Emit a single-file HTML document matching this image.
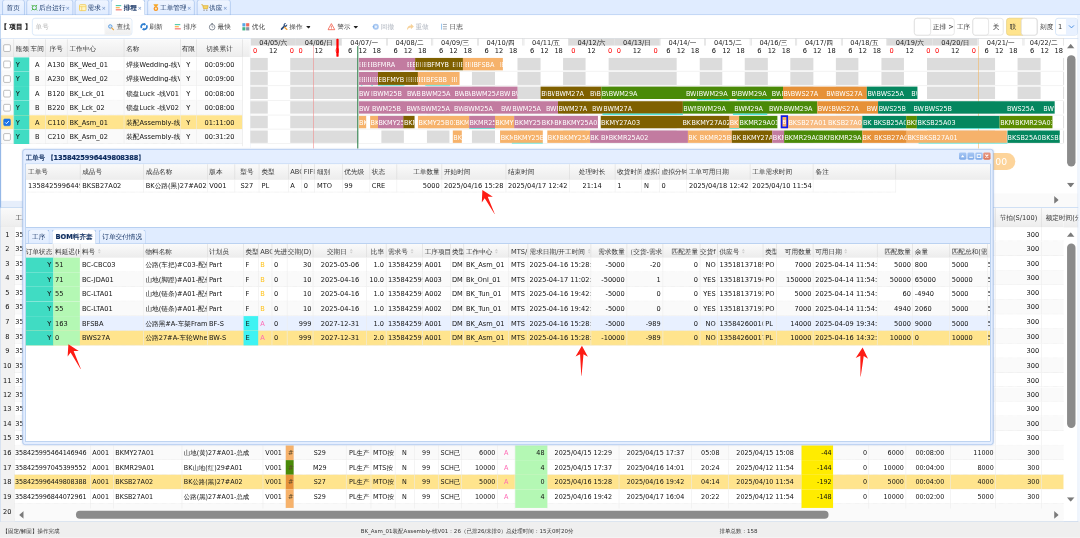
<!DOCTYPE html>
<html lang="zh"><head><meta charset="utf-8"><title>排程</title><style>
html,body{margin:0;padding:0;background:#fff;overflow:hidden;width:1080px;height:538px}
#root{position:absolute;left:0;top:0;width:1920px;height:957px;transform:scale(.5625);transform-origin:0 0;filter:brightness(1);font:11.8px "DejaVu Sans","Liberation Sans","WenQuanYi Zen Hei","Noto Sans CJK SC",sans-serif;color:#111;overflow:hidden;background:#fff}
#root div{position:absolute;box-sizing:border-box;white-space:nowrap;overflow:hidden}
#root .bl{overflow:hidden;text-overflow:clip;font-size:11.5px}
#root .b{font-weight:bold;-webkit-text-stroke:0.350px currentColor}
#root .bc{-webkit-text-stroke:0.550px currentColor}
</style></head><body><div id="root">
<div style="left:0px;top:0px;width:1920px;height:26.5px;background:#e0ecff;border-bottom:1px solid #95b8e7"></div>
<div style="left:3.6px;top:-1.1px;width:40px;height:27.6px;background:linear-gradient(#eff5ff,#e0ecff);border:1px solid #95b8e7;border-radius:5px 5px 0 0;"></div>
<div style="left:11.6px;top:0.4px;width:32px;height:24.9px;line-height:26.8px;color:#0e2d5f;">首页</div>
<div style="left:47.1px;top:-1.1px;width:82.7px;height:27.6px;background:linear-gradient(#eff5ff,#e0ecff);border:1px solid #95b8e7;border-radius:5px 5px 0 0;"></div>
<svg style="position:absolute;left:54.2px;top:5.7px;width:14.2px;height:15.3px" viewBox="0 0 16 16"><circle cx="8" cy="8" r="4.2" fill="none" stroke="#4db34d" stroke-width="2"/><g stroke="#4db34d" stroke-width="2"><path d="M2.5 2.5l2.5 2.5M13.5 2.5l-2.5 2.5M2.5 13.5l2.5-2.5M13.5 13.5l-2.5-2.5"/></g></svg>
<div style="left:69.3px;top:0.4px;width:60.4px;height:24.9px;line-height:26.8px;color:#0e2d5f;">后台运行</div>
<div style="left:116.4px;top:0.7px;width:13.3px;height:24px;line-height:26px;color:#6f8fc4;font-size:9.500px;">×</div>
<div style="left:133.3px;top:-1.1px;width:60.4px;height:27.6px;background:linear-gradient(#eff5ff,#e0ecff);border:1px solid #95b8e7;border-radius:5px 5px 0 0;"></div>
<svg style="position:absolute;left:140.4px;top:5.7px;width:14.2px;height:15.3px" viewBox="0 0 16 16"><rect x="1.5" y="2" width="13" height="12" rx="1.5" fill="#fff6c8" stroke="#f2c94c" stroke-width="1.6"/><path d="M2 6h12M6 6v8" stroke="#f2c94c" stroke-width="1.3"/></svg>
<div style="left:155.6px;top:0.4px;width:38.2px;height:24.9px;line-height:26.8px;color:#0e2d5f;">需求</div>
<div style="left:180.4px;top:0.7px;width:13.3px;height:24px;line-height:26px;color:#6f8fc4;font-size:9.500px;">×</div>
<div style="left:197.3px;top:-1.1px;width:60.4px;height:28.3px;background:#fff;border:1px solid #95b8e7;border-bottom:1px solid #fff;border-radius:5px 5px 0 0;"></div>
<svg style="position:absolute;left:204.4px;top:5.7px;width:14.2px;height:15.3px" viewBox="0 0 16 16"><rect x="2" y="3" width="11" height="1.900" fill="#2fbf9b"/><rect x="2" y="7.200" width="8" height="1.900" fill="#ff9f1a"/><rect x="2" y="11.400" width="12" height="1.900" fill="#f0554d"/></svg>
<div class="b" style="left:219.6px;top:0.4px;width:38.2px;height:24.9px;line-height:26.8px;color:#0e2d5f;">排程</div>
<div style="left:244.4px;top:0.7px;width:13.3px;height:24px;line-height:26px;color:#6f8fc4;font-size:9.500px;">×</div>
<div style="left:262.4px;top:-1.1px;width:83.2px;height:27.6px;background:linear-gradient(#eff5ff,#e0ecff);border:1px solid #95b8e7;border-radius:5px 5px 0 0;"></div>
<svg style="position:absolute;left:269.5px;top:5.7px;width:14.2px;height:15.3px" viewBox="0 0 16 16"><path d="M3 1h10l-3 5H6z" fill="#f5a623"/><circle cx="8" cy="10" r="4.6" fill="#f7931e"/><circle cx="8" cy="10" r="2.2" fill="#ffe9b8"/></svg>
<div style="left:284.6px;top:0.4px;width:61px;height:24.9px;line-height:26.8px;color:#0e2d5f;">工单管理</div>
<div style="left:332.3px;top:0.7px;width:13.3px;height:24px;line-height:26px;color:#6f8fc4;font-size:9.500px;">×</div>
<div style="left:349.5px;top:-1.1px;width:60.4px;height:27.6px;background:linear-gradient(#eff5ff,#e0ecff);border:1px solid #95b8e7;border-radius:5px 5px 0 0;"></div>
<svg style="position:absolute;left:356.6px;top:5.7px;width:14.2px;height:15.3px" viewBox="0 0 16 16"><path d="M1 2h2.5l2 8h8l1.5-6H4.5" fill="#f7d66a" stroke="#d9a520" stroke-width="1.3"/><circle cx="6.5" cy="13" r="1.4" fill="#8a8a8a"/><circle cx="12" cy="13" r="1.4" fill="#8a8a8a"/></svg>
<div style="left:371.7px;top:0.4px;width:38.2px;height:24.9px;line-height:26.8px;color:#0e2d5f;">供应</div>
<div style="left:396.6px;top:0.7px;width:13.3px;height:24px;line-height:26px;color:#6f8fc4;font-size:9.500px;">×</div>
<div style="left:0px;top:27.4px;width:1920px;height:41.2px;background:#fff;border-bottom:1px solid #c5d6ef;border-left:1px solid #95b8e7"></div>
<div class="bc" style="left:1.1px;top:32px;width:55.8px;height:31.1px;line-height:33.1px;color:#222;">【 项目 】</div>
<div style="left:57.4px;top:32px;width:177.8px;height:31.1px;background:#fff;border:1px solid #c3d9f5;border-radius:5px;"></div>
<div style="left:63.1px;top:32px;width:79.1px;height:31.1px;line-height:33.1px;color:#b5b5b5;">单号</div>
<div style="left:186.3px;top:32.7px;width:48.2px;height:29.7px;background:linear-gradient(#fff,#eee);border-left:1px solid #d3d3d3;border-radius:0 4px 4px 0;"></div>
<svg style="position:absolute;left:191.3px;top:42px;width:12.4px;height:12.4px" viewBox="0 0 16 16"><circle cx="6.5" cy="6.5" r="4" fill="#cfe6fb" stroke="#4a90d9" stroke-width="1.8"/><path d="M9.8 9.8l4.4 4.4" stroke="#e8a33d" stroke-width="2.6" stroke-linecap="round"/></svg>
<div style="left:207.1px;top:32px;width:25.8px;height:31.1px;line-height:33.1px;color:#555;">查找</div>
<svg style="position:absolute;left:248.5px;top:40.2px;width:14.2px;height:14.9px" viewBox="0 0 16 16"><path d="M8.500 3A5 5 0 0 0 3.200 10.800" fill="none" stroke="#2f7fd0" stroke-width="3.400"/><path d="M7.500 13A5 5 0 0 0 12.800 5.200" fill="none" stroke="#2f7fd0" stroke-width="3.400"/><path d="M7.800 0l4.600 3-4.600 3zM8.200 16l-4.600-3 4.600-3z" fill="#2f7fd0"/></svg>
<div style="left:265.4px;top:32px;width:35.6px;height:31.1px;line-height:33.1px;color:#444;">刷新</div>
<svg style="position:absolute;left:308.6px;top:40.2px;width:14.2px;height:14.9px" viewBox="0 0 16 16"><rect x="2" y="3" width="11" height="1.900" fill="#2fbf9b"/><rect x="2" y="7.200" width="8" height="1.900" fill="#ff9f1a"/><rect x="2" y="11.400" width="12" height="1.900" fill="#f0554d"/></svg>
<div style="left:326.2px;top:32px;width:35.6px;height:31.1px;line-height:33.1px;color:#444;">排序</div>
<svg style="position:absolute;left:370.1px;top:40.2px;width:14.2px;height:14.9px" viewBox="0 0 16 16"><circle cx="8" cy="9" r="5.6" fill="#fff" stroke="#7d8590" stroke-width="1.8"/><path d="M8 5.6V9h2.4" fill="none" stroke="#7d8590" stroke-width="1.4"/><rect x="6.3" y="0.8" width="3.4" height="2" fill="#7d8590"/></svg>
<div style="left:386.7px;top:32px;width:35.6px;height:31.1px;line-height:33.1px;color:#444;">最快</div>
<svg style="position:absolute;left:430.2px;top:40.2px;width:14.2px;height:14.9px" viewBox="0 0 16 16"><rect x="1" y="1" width="6" height="6.5" fill="#5aa7e6"/><rect x="8.5" y="1" width="6.5" height="6.5" fill="#ef6a5a"/><rect x="1" y="9" width="6" height="6.5" fill="#43b58a"/><rect x="8.5" y="9" width="6.5" height="6.5" fill="#8894a6"/></svg>
<div style="left:447.6px;top:32px;width:35.6px;height:31.1px;line-height:33.1px;color:#444;">优化</div>
<svg style="position:absolute;left:497.8px;top:40.2px;width:14.2px;height:14.9px" viewBox="0 0 16 16"><path d="M14 3.2l-2.6 2.6-1.8-.4-.4-1.8L11.800 1A4 4 0 0 0 7 6.200L1.600 11.600a1.700 1.700 0 0 0 2.400 2.400L9.400 8.600A4 4 0 0 0 14 3.200z" fill="#2b4d7e"/><path d="M9 9l4.500 4.500" stroke="#f2a13a" stroke-width="2.600" stroke-linecap="round"/></svg>
<div style="left:514.3px;top:32px;width:35.6px;height:31.1px;line-height:33.1px;color:#444;">操作</div>
<svg style="position:absolute;left:582.4px;top:40.2px;width:14.2px;height:14.9px" viewBox="0 0 16 16"><path d="M8 1.800L14.800 14H1.200z" fill="#fff" stroke="#f0503c" stroke-width="1.500" stroke-linejoin="round"/><path d="M8 6v4.300" stroke="#f0503c" stroke-width="1.500"/><circle cx="8" cy="12" r=".9" fill="#f0503c"/></svg>
<div style="left:599.5px;top:32px;width:35.6px;height:31.1px;line-height:33.1px;color:#444;">警示</div>
<svg style="position:absolute;left:661.3px;top:40.2px;width:14.2px;height:14.9px" viewBox="0 0 16 16"><circle cx="8" cy="8" r="6" fill="#a9c8f2"/><circle cx="8" cy="8" r="2.600" fill="#e8f1fc"/><path d="M1 8l3.500-2.500v5z" fill="#7fb0ea"/></svg>
<div style="left:677px;top:32px;width:35.6px;height:31.1px;line-height:33.1px;color:#b0b6c0;">回撤</div>
<svg style="position:absolute;left:721.8px;top:40.2px;width:14.2px;height:14.9px" viewBox="0 0 16 16"><path d="M1.500 15.500c0-6 3-10 8-10V2l6 5.500-6 5.500V9.500c-3.500 0-6 2-8 6z" fill="#f7d29a"/></svg>
<div style="left:738.5px;top:32px;width:35.6px;height:31.1px;line-height:33.1px;color:#b0b6c0;">重做</div>
<svg style="position:absolute;left:783.1px;top:40.2px;width:14.2px;height:14.9px" viewBox="0 0 16 16"><path d="M5 3.500h8M5 8h8M5 12.500h8" stroke="#7d8795" stroke-width="1.400"/><path d="M2.200 2v12" stroke="#7db7ee" stroke-width="1.600"/></svg>
<div style="left:799.3px;top:32px;width:35.6px;height:31.1px;line-height:33.1px;color:#444;">日志</div>
<div style="left:543.6px;top:45.5px;width:8.9px;height:5.3px;"><svg viewBox="0 0 10 6" style="position:absolute;left:0;top:0;width:100%;height:100%"><path d="M0 0h10L5 6z" fill="#222"/></svg></div>
<div style="left:628.3px;top:45.5px;width:8.9px;height:5.3px;"><svg viewBox="0 0 10 6" style="position:absolute;left:0;top:0;width:100%;height:100%"><path d="M0 0h10L5 6z" fill="#222"/></svg></div>
<div style="left:1624.5px;top:32px;width:72.4px;height:31.1px;background:#fff;border:1px solid #d6d6d6;border-radius:5px;"></div><div style="left:1624.5px;top:32px;width:30.9px;height:31.1px;background:#fff;border:1px solid #d0d0d0;border-radius:5px;"></div><div style="left:1658.3px;top:32px;width:42.7px;height:31.1px;line-height:33.1px;color:#333;">正排 &gt;</div>
<div style="left:1701.3px;top:32px;width:26.7px;height:31.1px;line-height:33.1px;color:#333;">工序</div>
<div style="left:1728.9px;top:32px;width:55.3px;height:31.1px;background:#fff;border:1px solid #d6d6d6;border-radius:5px;"></div><div style="left:1728.9px;top:32px;width:29px;height:31.1px;background:#fff;border:1px solid #d0d0d0;border-radius:5px;"></div><div style="left:1765px;top:32px;width:42.7px;height:31.1px;line-height:33.1px;color:#333;">关</div>
<div style="left:1789px;top:32px;width:55.5px;height:31.1px;background:#fff;border:1px solid #d6d6d6;border-radius:5px;"></div><div style="left:1789px;top:32px;width:29.7px;height:31.1px;background:#ffe48d;border:1px solid #e9cf74;border-radius:5px 0 0 5px;"></div><div style="left:1815.1px;top:32px;width:29.3px;height:31.1px;background:#fff;border:1px solid #d0d0d0;border-radius:5px;"></div><div style="left:1795.2px;top:32px;width:42.7px;height:31.1px;line-height:33.1px;color:#333;">联</div>
<div style="left:1848.9px;top:32px;width:26.7px;height:31.1px;line-height:33.1px;color:#333;">刻度</div>
<div style="left:1876.1px;top:32px;width:39.6px;height:31.1px;background:#fff;border:1px solid #b9d2f3;border-radius:5px;"></div>
<div style="left:1880.9px;top:32px;width:14.2px;height:31.1px;line-height:33.1px;color:#333;">1</div>
<div style="left:1895.1px;top:32.9px;width:19.7px;height:29.3px;background:#e8f1ff;border-radius:0 4px 4px 0;"><svg viewBox="0 0 20 30" style="position:absolute;left:0;top:0;width:100%;height:100%"><path d="M5.500 12.500l4.500 4.500 4.500-4.500" fill="none" stroke="#4a8fe0" stroke-width="1.800"/></svg></div>
<div style="left:0px;top:69.7px;width:445.3px;height:189.9px;background:#fff;border-left:1px solid #95b8e7"></div>
<div style="left:1.1px;top:69.7px;width:442.7px;height:31.1px;background:linear-gradient(#fafafa,#ededed);border-bottom:1px solid #ddd;"></div>
<div style="left:23.6px;top:69.7px;width:1.1px;height:31.1px;background:#d9d9d9;"></div>
<div style="left:24.2px;top:69.7px;width:27.7px;height:31.1px;line-height:33.1px;padding-left:4px;color:#333;">瓶颈</div>
<div style="left:51.4px;top:69.7px;width:1.1px;height:31.1px;background:#d9d9d9;"></div>
<div style="left:51.9px;top:69.7px;width:28.4px;height:31.1px;line-height:33.1px;text-align:center;color:#333;">车间</div>
<div style="left:79.8px;top:69.7px;width:1.1px;height:31.1px;background:#d9d9d9;"></div>
<div style="left:80.4px;top:69.7px;width:39.1px;height:31.1px;line-height:33.1px;text-align:center;color:#333;">序号</div>
<div style="left:118.9px;top:69.7px;width:1.1px;height:31.1px;background:#d9d9d9;"></div>
<div style="left:119.5px;top:69.7px;width:101px;height:31.1px;line-height:33.1px;padding-left:4px;color:#333;">工作中心</div>
<div style="left:219.9px;top:69.7px;width:1.1px;height:31.1px;background:#d9d9d9;"></div>
<div style="left:220.4px;top:69.7px;width:99.9px;height:31.1px;line-height:33.1px;padding-left:4px;color:#333;">名称</div>
<div style="left:319.8px;top:69.7px;width:1.1px;height:31.1px;background:#d9d9d9;"></div>
<div style="left:320.4px;top:69.7px;width:28.8px;height:31.1px;line-height:33.1px;text-align:center;color:#333;">有限</div>
<div style="left:348.6px;top:69.7px;width:1.1px;height:31.1px;background:#d9d9d9;"></div>
<div style="left:349.2px;top:69.7px;width:82.1px;height:31.1px;line-height:33.1px;text-align:center;color:#333;">切换累计</div>
<div style="left:430.8px;top:69.7px;width:1.1px;height:31.1px;background:#d9d9d9;"></div>
<div style="left:5.7px;top:78.9px;width:13px;height:13px;background:#fff;border:1px solid #8f8f8f;border-radius:2.500px;"></div>
<div style="left:1.1px;top:101.5px;width:430.2px;height:25.8px;background:#fff;border-bottom:1px dotted #ddd;"></div>
<div style="left:24.2px;top:101.5px;width:27.7px;height:25.8px;background:#40dcc3;"></div>
<div style="left:5.7px;top:107.9px;width:13px;height:13px;background:#fff;border:1px solid #8f8f8f;border-radius:2.500px;"></div>
<div style="left:24.2px;top:101.5px;width:27.7px;height:25.8px;line-height:27.7px;padding-left:4px;color:#111;">Y</div>
<div style="left:51.9px;top:101.5px;width:28.4px;height:25.8px;line-height:27.7px;text-align:center;color:#111;">A</div>
<div style="left:80.4px;top:101.5px;width:39.1px;height:25.8px;line-height:27.7px;text-align:center;color:#111;">A130</div>
<div style="left:119.5px;top:101.5px;width:101px;height:25.8px;line-height:27.7px;padding-left:4px;color:#111;">BK_Wed_01</div>
<div style="left:220.4px;top:101.5px;width:99.9px;height:25.8px;line-height:27.7px;padding-left:4px;color:#111;">焊接Wedding-线V01</div>
<div style="left:320.4px;top:101.5px;width:28.8px;height:25.8px;line-height:27.7px;text-align:center;color:#111;">Y</div>
<div style="left:349.2px;top:101.5px;width:82.1px;height:25.8px;line-height:27.7px;text-align:center;color:#111;">00:09:00</div>
<div style="left:23.6px;top:101.5px;width:1.1px;height:25.8px;background:#ececec;"></div>
<div style="left:79.8px;top:101.5px;width:1.1px;height:25.8px;background:#ececec;"></div>
<div style="left:118.9px;top:101.5px;width:1.1px;height:25.8px;background:#ececec;"></div>
<div style="left:219.9px;top:101.5px;width:1.1px;height:25.8px;background:#ececec;"></div>
<div style="left:319.8px;top:101.5px;width:1.1px;height:25.8px;background:#ececec;"></div>
<div style="left:348.6px;top:101.5px;width:1.1px;height:25.8px;background:#ececec;"></div>
<div style="left:1.1px;top:127.3px;width:430.2px;height:25.8px;background:#fafafa;border-bottom:1px dotted #ddd;"></div>
<div style="left:24.2px;top:127.3px;width:27.7px;height:25.8px;background:#40dcc3;"></div>
<div style="left:5.7px;top:133.7px;width:13px;height:13px;background:#fff;border:1px solid #8f8f8f;border-radius:2.500px;"></div>
<div style="left:24.2px;top:127.3px;width:27.7px;height:25.8px;line-height:27.7px;padding-left:4px;color:#111;">Y</div>
<div style="left:51.9px;top:127.3px;width:28.4px;height:25.8px;line-height:27.7px;text-align:center;color:#111;">B</div>
<div style="left:80.4px;top:127.3px;width:39.1px;height:25.8px;line-height:27.7px;text-align:center;color:#111;">A230</div>
<div style="left:119.5px;top:127.3px;width:101px;height:25.8px;line-height:27.7px;padding-left:4px;color:#111;">BK_Wed_02</div>
<div style="left:220.4px;top:127.3px;width:99.9px;height:25.8px;line-height:27.7px;padding-left:4px;color:#111;">焊接Wedding-线V02</div>
<div style="left:320.4px;top:127.3px;width:28.8px;height:25.8px;line-height:27.7px;text-align:center;color:#111;">Y</div>
<div style="left:349.2px;top:127.3px;width:82.1px;height:25.8px;line-height:27.7px;text-align:center;color:#111;">00:09:00</div>
<div style="left:23.6px;top:127.3px;width:1.1px;height:25.8px;background:#ececec;"></div>
<div style="left:79.8px;top:127.3px;width:1.1px;height:25.8px;background:#ececec;"></div>
<div style="left:118.9px;top:127.3px;width:1.1px;height:25.8px;background:#ececec;"></div>
<div style="left:219.9px;top:127.3px;width:1.1px;height:25.8px;background:#ececec;"></div>
<div style="left:319.8px;top:127.3px;width:1.1px;height:25.8px;background:#ececec;"></div>
<div style="left:348.6px;top:127.3px;width:1.1px;height:25.8px;background:#ececec;"></div>
<div style="left:1.1px;top:153.1px;width:430.2px;height:25.8px;background:#fff;border-bottom:1px dotted #ddd;"></div>
<div style="left:24.2px;top:153.1px;width:27.7px;height:25.8px;background:#40dcc3;"></div>
<div style="left:5.7px;top:159.5px;width:13px;height:13px;background:#fff;border:1px solid #8f8f8f;border-radius:2.500px;"></div>
<div style="left:24.2px;top:153.1px;width:27.7px;height:25.8px;line-height:27.7px;padding-left:4px;color:#111;">Y</div>
<div style="left:51.9px;top:153.1px;width:28.4px;height:25.8px;line-height:27.7px;text-align:center;color:#111;">A</div>
<div style="left:80.4px;top:153.1px;width:39.1px;height:25.8px;line-height:27.7px;text-align:center;color:#111;">B120</div>
<div style="left:119.5px;top:153.1px;width:101px;height:25.8px;line-height:27.7px;padding-left:4px;color:#111;">BK_Lck_01</div>
<div style="left:220.4px;top:153.1px;width:99.9px;height:25.8px;line-height:27.7px;padding-left:4px;color:#111;">锁盘Luck -线V01</div>
<div style="left:320.4px;top:153.1px;width:28.8px;height:25.8px;line-height:27.7px;text-align:center;color:#111;">Y</div>
<div style="left:349.2px;top:153.1px;width:82.1px;height:25.8px;line-height:27.7px;text-align:center;color:#111;">00:08:00</div>
<div style="left:23.6px;top:153.1px;width:1.1px;height:25.8px;background:#ececec;"></div>
<div style="left:79.8px;top:153.1px;width:1.1px;height:25.8px;background:#ececec;"></div>
<div style="left:118.9px;top:153.1px;width:1.1px;height:25.8px;background:#ececec;"></div>
<div style="left:219.9px;top:153.1px;width:1.1px;height:25.8px;background:#ececec;"></div>
<div style="left:319.8px;top:153.1px;width:1.1px;height:25.8px;background:#ececec;"></div>
<div style="left:348.6px;top:153.1px;width:1.1px;height:25.8px;background:#ececec;"></div>
<div style="left:1.1px;top:178.8px;width:430.2px;height:25.8px;background:#fafafa;border-bottom:1px dotted #ddd;"></div>
<div style="left:24.2px;top:178.8px;width:27.7px;height:25.8px;background:#40dcc3;"></div>
<div style="left:5.7px;top:185.2px;width:13px;height:13px;background:#fff;border:1px solid #8f8f8f;border-radius:2.500px;"></div>
<div style="left:24.2px;top:178.8px;width:27.7px;height:25.8px;line-height:27.7px;padding-left:4px;color:#111;">Y</div>
<div style="left:51.9px;top:178.8px;width:28.4px;height:25.8px;line-height:27.7px;text-align:center;color:#111;">B</div>
<div style="left:80.4px;top:178.8px;width:39.1px;height:25.8px;line-height:27.7px;text-align:center;color:#111;">B220</div>
<div style="left:119.5px;top:178.8px;width:101px;height:25.8px;line-height:27.7px;padding-left:4px;color:#111;">BK_Lck_02</div>
<div style="left:220.4px;top:178.8px;width:99.9px;height:25.8px;line-height:27.7px;padding-left:4px;color:#111;">锁盘Luck -线V02</div>
<div style="left:320.4px;top:178.8px;width:28.8px;height:25.8px;line-height:27.7px;text-align:center;color:#111;">Y</div>
<div style="left:349.2px;top:178.8px;width:82.1px;height:25.8px;line-height:27.7px;text-align:center;color:#111;">00:08:00</div>
<div style="left:23.6px;top:178.8px;width:1.1px;height:25.8px;background:#ececec;"></div>
<div style="left:79.8px;top:178.8px;width:1.1px;height:25.8px;background:#ececec;"></div>
<div style="left:118.9px;top:178.8px;width:1.1px;height:25.8px;background:#ececec;"></div>
<div style="left:219.9px;top:178.8px;width:1.1px;height:25.8px;background:#ececec;"></div>
<div style="left:319.8px;top:178.8px;width:1.1px;height:25.8px;background:#ececec;"></div>
<div style="left:348.6px;top:178.8px;width:1.1px;height:25.8px;background:#ececec;"></div>
<div style="left:1.1px;top:204.6px;width:430.2px;height:25.8px;background:#ffe48d;border-bottom:1px dotted #ddd;"></div>
<div style="left:24.2px;top:204.6px;width:27.7px;height:25.8px;background:#40dcc3;"></div>
<div style="left:5.7px;top:211px;width:13px;height:13px;background:#1a73e8;border:1px solid #1a73e8;border-radius:2.500px;"><svg viewBox="0 0 12 12" style="position:absolute;left:0;top:0;width:100%;height:100%"><path d="M2.500 6.200l2.400 2.400 4.600-5" fill="none" stroke="#fff" stroke-width="1.800"/></svg></div>
<div style="left:24.2px;top:204.6px;width:27.7px;height:25.8px;line-height:27.7px;padding-left:4px;color:#111;">Y</div>
<div style="left:51.9px;top:204.6px;width:28.4px;height:25.8px;line-height:27.7px;text-align:center;color:#111;">A</div>
<div style="left:80.4px;top:204.6px;width:39.1px;height:25.8px;line-height:27.7px;text-align:center;color:#111;">C110</div>
<div style="left:119.5px;top:204.6px;width:101px;height:25.8px;line-height:27.7px;padding-left:4px;color:#111;">BK_Asm_01</div>
<div style="left:220.4px;top:204.6px;width:99.9px;height:25.8px;line-height:27.7px;padding-left:4px;color:#111;">装配Assembly-线V01</div>
<div style="left:320.4px;top:204.6px;width:28.8px;height:25.8px;line-height:27.7px;text-align:center;color:#111;">Y</div>
<div style="left:349.2px;top:204.6px;width:82.1px;height:25.8px;line-height:27.7px;text-align:center;color:#111;">01:11:00</div>
<div style="left:23.6px;top:204.6px;width:1.1px;height:25.8px;background:#ececec;"></div>
<div style="left:79.8px;top:204.6px;width:1.1px;height:25.8px;background:#ececec;"></div>
<div style="left:118.9px;top:204.6px;width:1.1px;height:25.8px;background:#ececec;"></div>
<div style="left:219.9px;top:204.6px;width:1.1px;height:25.8px;background:#ececec;"></div>
<div style="left:319.8px;top:204.6px;width:1.1px;height:25.8px;background:#ececec;"></div>
<div style="left:348.6px;top:204.6px;width:1.1px;height:25.8px;background:#ececec;"></div>
<div style="left:1.1px;top:230.4px;width:430.2px;height:25.8px;background:#fafafa;border-bottom:1px dotted #ddd;"></div>
<div style="left:24.2px;top:230.4px;width:27.7px;height:25.8px;background:#40dcc3;"></div>
<div style="left:5.7px;top:236.8px;width:13px;height:13px;background:#fff;border:1px solid #8f8f8f;border-radius:2.500px;"></div>
<div style="left:24.2px;top:230.4px;width:27.7px;height:25.8px;line-height:27.7px;padding-left:4px;color:#111;">Y</div>
<div style="left:51.9px;top:230.4px;width:28.4px;height:25.8px;line-height:27.7px;text-align:center;color:#111;">B</div>
<div style="left:80.4px;top:230.4px;width:39.1px;height:25.8px;line-height:27.7px;text-align:center;color:#111;">C210</div>
<div style="left:119.5px;top:230.4px;width:101px;height:25.8px;line-height:27.7px;padding-left:4px;color:#111;">BK_Asm_02</div>
<div style="left:220.4px;top:230.4px;width:99.9px;height:25.8px;line-height:27.7px;padding-left:4px;color:#111;">装配Assembly-线V02</div>
<div style="left:320.4px;top:230.4px;width:28.8px;height:25.8px;line-height:27.7px;text-align:center;color:#111;">Y</div>
<div style="left:349.2px;top:230.4px;width:82.1px;height:25.8px;line-height:27.7px;text-align:center;color:#111;">00:31:20</div>
<div style="left:23.6px;top:230.4px;width:1.1px;height:25.8px;background:#ececec;"></div>
<div style="left:79.8px;top:230.4px;width:1.1px;height:25.8px;background:#ececec;"></div>
<div style="left:118.9px;top:230.4px;width:1.1px;height:25.8px;background:#ececec;"></div>
<div style="left:219.9px;top:230.4px;width:1.1px;height:25.8px;background:#ececec;"></div>
<div style="left:319.8px;top:230.4px;width:1.1px;height:25.8px;background:#ececec;"></div>
<div style="left:348.6px;top:230.4px;width:1.1px;height:25.8px;background:#ececec;"></div>
<div style="left:431.3px;top:100.8px;width:13.7px;height:158.8px;background:#fff;border-left:1px solid #e3e3e3;"></div>
<div style="left:444.6px;top:69.7px;width:1.1px;height:193.4px;background:#c9d8ee;"></div>
<div style="left:445.3px;top:69.7px;width:1474.7px;height:298.3px;background:#fff;"></div>
<div style="left:445.6px;top:68.4px;width:80.3px;height:13px;background:#dcdcdc;"></div>
<div style="left:445.3px;top:66.8px;width:80.8px;height:17.8px;line-height:19.7px;text-align:center;color:#222;">04/05/六</div>
<div style="left:439.3px;top:81.4px;width:28.4px;height:19.2px;line-height:21.2px;text-align:center;color:#f00;">0</div>
<div style="left:471.6px;top:81.4px;width:28.4px;height:19.2px;line-height:21.2px;text-align:center;color:#111;">12</div>
<div style="left:504.7px;top:81.4px;width:28.4px;height:19.2px;line-height:21.2px;text-align:center;color:#f00;">0</div>
<div style="left:526.4px;top:68.4px;width:80.3px;height:13px;background:#dcdcdc;"></div>
<div style="left:526.2px;top:66.8px;width:80.8px;height:17.8px;line-height:19.7px;text-align:center;color:#222;">04/06/日</div>
<div style="left:520.1px;top:81.4px;width:28.4px;height:19.2px;line-height:21.2px;text-align:center;color:#f00;">0</div>
<div style="left:552.5px;top:81.4px;width:28.4px;height:19.2px;line-height:21.2px;text-align:center;color:#111;">12</div>
<div style="left:585.5px;top:81.4px;width:28.4px;height:19.2px;line-height:21.2px;text-align:center;color:#f00;">0</div>
<div style="left:607.3px;top:68.4px;width:80.3px;height:13px;background:#fff;border:1px solid #d4d4d4;border-bottom:0;"></div>
<div style="left:607px;top:66.8px;width:80.8px;height:17.8px;line-height:19.7px;text-align:center;color:#222;">04/07/一</div>
<div style="left:608.2px;top:81.4px;width:28.4px;height:19.2px;line-height:21.2px;text-align:center;color:#111;">6</div>
<div style="left:630.5px;top:81.4px;width:28.4px;height:19.2px;line-height:21.2px;text-align:center;color:#111;">12</div>
<div style="left:655.5px;top:81.4px;width:28.4px;height:19.2px;line-height:21.2px;text-align:center;color:#111;">18</div>
<div style="left:688.1px;top:68.4px;width:80.3px;height:13px;background:#fff;border:1px solid #d4d4d4;border-bottom:0;"></div>
<div style="left:687.8px;top:66.8px;width:80.8px;height:17.8px;line-height:19.7px;text-align:center;color:#222;">04/08/二</div>
<div style="left:689.1px;top:81.4px;width:28.4px;height:19.2px;line-height:21.2px;text-align:center;color:#111;">6</div>
<div style="left:711.3px;top:81.4px;width:28.4px;height:19.2px;line-height:21.2px;text-align:center;color:#111;">12</div>
<div style="left:736.4px;top:81.4px;width:28.4px;height:19.2px;line-height:21.2px;text-align:center;color:#111;">18</div>
<div style="left:768.9px;top:68.4px;width:80.3px;height:13px;background:#fff;border:1px solid #d4d4d4;border-bottom:0;"></div>
<div style="left:768.7px;top:66.8px;width:80.8px;height:17.8px;line-height:19.7px;text-align:center;color:#222;">04/09/三</div>
<div style="left:769.9px;top:81.4px;width:28.4px;height:19.2px;line-height:21.2px;text-align:center;color:#111;">6</div>
<div style="left:792.1px;top:81.4px;width:28.4px;height:19.2px;line-height:21.2px;text-align:center;color:#111;">12</div>
<div style="left:817.2px;top:81.4px;width:28.4px;height:19.2px;line-height:21.2px;text-align:center;color:#111;">18</div>
<div style="left:849.8px;top:68.4px;width:80.3px;height:13px;background:#fff;border:1px solid #d4d4d4;border-bottom:0;"></div>
<div style="left:849.5px;top:66.8px;width:80.8px;height:17.8px;line-height:19.7px;text-align:center;color:#222;">04/10/四</div>
<div style="left:850.8px;top:81.4px;width:28.4px;height:19.2px;line-height:21.2px;text-align:center;color:#111;">6</div>
<div style="left:873px;top:81.4px;width:28.4px;height:19.2px;line-height:21.2px;text-align:center;color:#111;">12</div>
<div style="left:898px;top:81.4px;width:28.4px;height:19.2px;line-height:21.2px;text-align:center;color:#111;">18</div>
<div style="left:930.6px;top:68.4px;width:80.3px;height:13px;background:#fff;border:1px solid #d4d4d4;border-bottom:0;"></div>
<div style="left:930.3px;top:66.8px;width:80.8px;height:17.8px;line-height:19.7px;text-align:center;color:#222;">04/11/五</div>
<div style="left:931.6px;top:81.4px;width:28.4px;height:19.2px;line-height:21.2px;text-align:center;color:#111;">6</div>
<div style="left:953.8px;top:81.4px;width:28.4px;height:19.2px;line-height:21.2px;text-align:center;color:#111;">12</div>
<div style="left:978.9px;top:81.4px;width:28.4px;height:19.2px;line-height:21.2px;text-align:center;color:#111;">18</div>
<div style="left:1011.4px;top:68.4px;width:80.3px;height:13px;background:#dcdcdc;"></div>
<div style="left:1011.2px;top:66.8px;width:80.8px;height:17.8px;line-height:19.7px;text-align:center;color:#222;">04/12/六</div>
<div style="left:1005.1px;top:81.4px;width:28.4px;height:19.2px;line-height:21.2px;text-align:center;color:#f00;">0</div>
<div style="left:1037.5px;top:81.4px;width:28.4px;height:19.2px;line-height:21.2px;text-align:center;color:#111;">12</div>
<div style="left:1070.6px;top:81.4px;width:28.4px;height:19.2px;line-height:21.2px;text-align:center;color:#f00;">0</div>
<div style="left:1092.3px;top:68.4px;width:80.3px;height:13px;background:#dcdcdc;"></div>
<div style="left:1092px;top:66.8px;width:80.8px;height:17.8px;line-height:19.7px;text-align:center;color:#222;">04/13/日</div>
<div style="left:1086px;top:81.4px;width:28.4px;height:19.2px;line-height:21.2px;text-align:center;color:#f00;">0</div>
<div style="left:1118.3px;top:81.4px;width:28.4px;height:19.2px;line-height:21.2px;text-align:center;color:#111;">12</div>
<div style="left:1151.4px;top:81.4px;width:28.4px;height:19.2px;line-height:21.2px;text-align:center;color:#f00;">0</div>
<div style="left:1173.1px;top:68.4px;width:80.3px;height:13px;background:#fff;border:1px solid #d4d4d4;border-bottom:0;"></div>
<div style="left:1172.9px;top:66.8px;width:80.8px;height:17.8px;line-height:19.7px;text-align:center;color:#222;">04/14/一</div>
<div style="left:1174.1px;top:81.4px;width:28.4px;height:19.2px;line-height:21.2px;text-align:center;color:#111;">6</div>
<div style="left:1196.3px;top:81.4px;width:28.4px;height:19.2px;line-height:21.2px;text-align:center;color:#111;">12</div>
<div style="left:1221.4px;top:81.4px;width:28.4px;height:19.2px;line-height:21.2px;text-align:center;color:#111;">18</div>
<div style="left:1254px;top:68.4px;width:80.3px;height:13px;background:#fff;border:1px solid #d4d4d4;border-bottom:0;"></div>
<div style="left:1253.7px;top:66.8px;width:80.8px;height:17.8px;line-height:19.7px;text-align:center;color:#222;">04/15/二</div>
<div style="left:1254.9px;top:81.4px;width:28.4px;height:19.2px;line-height:21.2px;text-align:center;color:#111;">6</div>
<div style="left:1277.2px;top:81.4px;width:28.4px;height:19.2px;line-height:21.2px;text-align:center;color:#111;">12</div>
<div style="left:1302.2px;top:81.4px;width:28.4px;height:19.2px;line-height:21.2px;text-align:center;color:#111;">18</div>
<div style="left:1334.8px;top:68.4px;width:80.3px;height:13px;background:#fff;border:1px solid #d4d4d4;border-bottom:0;"></div>
<div style="left:1334.5px;top:66.8px;width:80.8px;height:17.8px;line-height:19.7px;text-align:center;color:#222;">04/16/三</div>
<div style="left:1335.8px;top:81.4px;width:28.4px;height:19.2px;line-height:21.2px;text-align:center;color:#111;">6</div>
<div style="left:1358px;top:81.4px;width:28.4px;height:19.2px;line-height:21.2px;text-align:center;color:#111;">12</div>
<div style="left:1383.1px;top:81.4px;width:28.4px;height:19.2px;line-height:21.2px;text-align:center;color:#111;">18</div>
<div style="left:1415.6px;top:68.4px;width:80.3px;height:13px;background:#fff;border:1px solid #d4d4d4;border-bottom:0;"></div>
<div style="left:1415.4px;top:66.8px;width:80.8px;height:17.8px;line-height:19.7px;text-align:center;color:#222;">04/17/四</div>
<div style="left:1416.6px;top:81.4px;width:28.4px;height:19.2px;line-height:21.2px;text-align:center;color:#111;">6</div>
<div style="left:1438.8px;top:81.4px;width:28.4px;height:19.2px;line-height:21.2px;text-align:center;color:#111;">12</div>
<div style="left:1463.9px;top:81.4px;width:28.4px;height:19.2px;line-height:21.2px;text-align:center;color:#111;">18</div>
<div style="left:1496.5px;top:68.4px;width:80.3px;height:13px;background:#fff;border:1px solid #d4d4d4;border-bottom:0;"></div>
<div style="left:1496.2px;top:66.8px;width:80.8px;height:17.8px;line-height:19.7px;text-align:center;color:#222;">04/18/五</div>
<div style="left:1497.4px;top:81.4px;width:28.4px;height:19.2px;line-height:21.2px;text-align:center;color:#111;">6</div>
<div style="left:1519.7px;top:81.4px;width:28.4px;height:19.2px;line-height:21.2px;text-align:center;color:#111;">12</div>
<div style="left:1544.7px;top:81.4px;width:28.4px;height:19.2px;line-height:21.2px;text-align:center;color:#111;">18</div>
<div style="left:1577.3px;top:68.4px;width:80.3px;height:13px;background:#dcdcdc;"></div>
<div style="left:1577px;top:66.8px;width:80.8px;height:17.8px;line-height:19.7px;text-align:center;color:#222;">04/19/六</div>
<div style="left:1571px;top:81.4px;width:28.4px;height:19.2px;line-height:21.2px;text-align:center;color:#f00;">0</div>
<div style="left:1603.3px;top:81.4px;width:28.4px;height:19.2px;line-height:21.2px;text-align:center;color:#111;">12</div>
<div style="left:1636.4px;top:81.4px;width:28.4px;height:19.2px;line-height:21.2px;text-align:center;color:#f00;">0</div>
<div style="left:1658.1px;top:68.4px;width:80.3px;height:13px;background:#dcdcdc;"></div>
<div style="left:1657.9px;top:66.8px;width:80.8px;height:17.8px;line-height:19.7px;text-align:center;color:#222;">04/20/日</div>
<div style="left:1651.8px;top:81.4px;width:28.4px;height:19.2px;line-height:21.2px;text-align:center;color:#f00;">0</div>
<div style="left:1684.2px;top:81.4px;width:28.4px;height:19.2px;line-height:21.2px;text-align:center;color:#111;">12</div>
<div style="left:1717.2px;top:81.4px;width:28.4px;height:19.2px;line-height:21.2px;text-align:center;color:#f00;">0</div>
<div style="left:1739px;top:68.4px;width:80.3px;height:13px;background:#fff;border:1px solid #d4d4d4;border-bottom:0;"></div>
<div style="left:1738.7px;top:66.8px;width:80.8px;height:17.8px;line-height:19.7px;text-align:center;color:#222;">04/21/一</div>
<div style="left:1739.9px;top:81.4px;width:28.4px;height:19.2px;line-height:21.2px;text-align:center;color:#111;">6</div>
<div style="left:1762.2px;top:81.4px;width:28.4px;height:19.2px;line-height:21.2px;text-align:center;color:#111;">12</div>
<div style="left:1787.2px;top:81.4px;width:28.4px;height:19.2px;line-height:21.2px;text-align:center;color:#111;">18</div>
<div style="left:1819.8px;top:68.4px;width:71.5px;height:13px;background:#fff;border:1px solid #d4d4d4;border-bottom:0;"></div>
<div style="left:1819.5px;top:66.8px;width:72px;height:17.8px;line-height:19.7px;text-align:center;color:#222;">04/22/二</div>
<div style="left:1820.8px;top:81.4px;width:28.4px;height:19.2px;line-height:21.2px;text-align:center;color:#111;">6</div>
<div style="left:1843px;top:81.4px;width:28.4px;height:19.2px;line-height:21.2px;text-align:center;color:#111;">12</div>
<div style="left:1868.1px;top:81.4px;width:28.4px;height:19.2px;line-height:21.2px;text-align:center;color:#111;">18</div>
<div style="left:445.3px;top:126.2px;width:1446.2px;height:1.1px;background:#e9e9e9;"></div>
<div style="left:445.3px;top:102.6px;width:30.3px;height:22.2px;background:#dcdcdc;"></div>
<div style="left:516.1px;top:102.6px;width:121.3px;height:22.2px;background:#dcdcdc;"></div>
<div style="left:677.7px;top:102.6px;width:40.4px;height:22.2px;background:#dcdcdc;"></div>
<div style="left:758.6px;top:102.6px;width:40.4px;height:22.2px;background:#dcdcdc;"></div>
<div style="left:839.4px;top:102.6px;width:40.4px;height:22.2px;background:#dcdcdc;"></div>
<div style="left:920.2px;top:102.6px;width:40.4px;height:22.2px;background:#dcdcdc;"></div>
<div style="left:1001.1px;top:102.6px;width:40.4px;height:22.2px;background:#dcdcdc;"></div>
<div style="left:1081.9px;top:102.6px;width:121.3px;height:22.2px;background:#dcdcdc;"></div>
<div style="left:1243.6px;top:102.6px;width:40.4px;height:22.2px;background:#dcdcdc;"></div>
<div style="left:1324.4px;top:102.6px;width:40.4px;height:22.2px;background:#dcdcdc;"></div>
<div style="left:1405.3px;top:102.6px;width:40.4px;height:22.2px;background:#dcdcdc;"></div>
<div style="left:1486.1px;top:102.6px;width:40.4px;height:22.2px;background:#dcdcdc;"></div>
<div style="left:1566.9px;top:102.6px;width:40.4px;height:22.2px;background:#dcdcdc;"></div>
<div style="left:1647.8px;top:102.6px;width:121.3px;height:22.2px;background:#dcdcdc;"></div>
<div style="left:1809.4px;top:102.6px;width:40.4px;height:22.2px;background:#dcdcdc;"></div>
<div style="left:1890.3px;top:102.6px;width:1.3px;height:22.2px;background:#dcdcdc;"></div>
<div style="left:445.3px;top:152px;width:1446.2px;height:1.1px;background:#e9e9e9;"></div>
<div style="left:445.3px;top:128.4px;width:30.3px;height:22.2px;background:#dcdcdc;"></div>
<div style="left:516.1px;top:128.4px;width:121.3px;height:22.2px;background:#dcdcdc;"></div>
<div style="left:677.7px;top:128.4px;width:40.4px;height:22.2px;background:#dcdcdc;"></div>
<div style="left:758.6px;top:128.4px;width:40.4px;height:22.2px;background:#dcdcdc;"></div>
<div style="left:839.4px;top:128.4px;width:40.4px;height:22.2px;background:#dcdcdc;"></div>
<div style="left:920.2px;top:128.4px;width:40.4px;height:22.2px;background:#dcdcdc;"></div>
<div style="left:1001.1px;top:128.4px;width:40.4px;height:22.2px;background:#dcdcdc;"></div>
<div style="left:1081.9px;top:128.4px;width:121.3px;height:22.2px;background:#dcdcdc;"></div>
<div style="left:1243.6px;top:128.4px;width:40.4px;height:22.2px;background:#dcdcdc;"></div>
<div style="left:1324.4px;top:128.4px;width:40.4px;height:22.2px;background:#dcdcdc;"></div>
<div style="left:1405.3px;top:128.4px;width:40.4px;height:22.2px;background:#dcdcdc;"></div>
<div style="left:1486.1px;top:128.4px;width:40.4px;height:22.2px;background:#dcdcdc;"></div>
<div style="left:1566.9px;top:128.4px;width:40.4px;height:22.2px;background:#dcdcdc;"></div>
<div style="left:1647.8px;top:128.4px;width:121.3px;height:22.2px;background:#dcdcdc;"></div>
<div style="left:1809.4px;top:128.4px;width:40.4px;height:22.2px;background:#dcdcdc;"></div>
<div style="left:1890.3px;top:128.4px;width:1.3px;height:22.2px;background:#dcdcdc;"></div>
<div style="left:445.3px;top:177.8px;width:1446.2px;height:1.1px;background:#e9e9e9;"></div>
<div style="left:445.3px;top:154.1px;width:30.3px;height:22.2px;background:#dcdcdc;"></div>
<div style="left:516.1px;top:154.1px;width:121.3px;height:22.2px;background:#dcdcdc;"></div>
<div style="left:677.7px;top:154.1px;width:40.4px;height:22.2px;background:#dcdcdc;"></div>
<div style="left:758.6px;top:154.1px;width:40.4px;height:22.2px;background:#dcdcdc;"></div>
<div style="left:839.4px;top:154.1px;width:40.4px;height:22.2px;background:#dcdcdc;"></div>
<div style="left:920.2px;top:154.1px;width:40.4px;height:22.2px;background:#dcdcdc;"></div>
<div style="left:1001.1px;top:154.1px;width:40.4px;height:22.2px;background:#dcdcdc;"></div>
<div style="left:1081.9px;top:154.1px;width:121.3px;height:22.2px;background:#dcdcdc;"></div>
<div style="left:1243.6px;top:154.1px;width:40.4px;height:22.2px;background:#dcdcdc;"></div>
<div style="left:1324.4px;top:154.1px;width:40.4px;height:22.2px;background:#dcdcdc;"></div>
<div style="left:1405.3px;top:154.1px;width:40.4px;height:22.2px;background:#dcdcdc;"></div>
<div style="left:1486.1px;top:154.1px;width:40.4px;height:22.2px;background:#dcdcdc;"></div>
<div style="left:1566.9px;top:154.1px;width:40.4px;height:22.2px;background:#dcdcdc;"></div>
<div style="left:1647.8px;top:154.1px;width:121.3px;height:22.2px;background:#dcdcdc;"></div>
<div style="left:1809.4px;top:154.1px;width:40.4px;height:22.2px;background:#dcdcdc;"></div>
<div style="left:1890.3px;top:154.1px;width:1.3px;height:22.2px;background:#dcdcdc;"></div>
<div style="left:445.3px;top:203.6px;width:1446.2px;height:1.1px;background:#e9e9e9;"></div>
<div style="left:445.3px;top:179.9px;width:30.3px;height:22.2px;background:#dcdcdc;"></div>
<div style="left:516.1px;top:179.9px;width:121.3px;height:22.2px;background:#dcdcdc;"></div>
<div style="left:677.7px;top:179.9px;width:40.4px;height:22.2px;background:#dcdcdc;"></div>
<div style="left:758.6px;top:179.9px;width:40.4px;height:22.2px;background:#dcdcdc;"></div>
<div style="left:839.4px;top:179.9px;width:40.4px;height:22.2px;background:#dcdcdc;"></div>
<div style="left:920.2px;top:179.9px;width:40.4px;height:22.2px;background:#dcdcdc;"></div>
<div style="left:1001.1px;top:179.9px;width:40.4px;height:22.2px;background:#dcdcdc;"></div>
<div style="left:1081.9px;top:179.9px;width:121.3px;height:22.2px;background:#dcdcdc;"></div>
<div style="left:1243.6px;top:179.9px;width:40.4px;height:22.2px;background:#dcdcdc;"></div>
<div style="left:1324.4px;top:179.9px;width:40.4px;height:22.2px;background:#dcdcdc;"></div>
<div style="left:1405.3px;top:179.9px;width:40.4px;height:22.2px;background:#dcdcdc;"></div>
<div style="left:1486.1px;top:179.9px;width:40.4px;height:22.2px;background:#dcdcdc;"></div>
<div style="left:1566.9px;top:179.9px;width:40.4px;height:22.2px;background:#dcdcdc;"></div>
<div style="left:1647.8px;top:179.9px;width:121.3px;height:22.2px;background:#dcdcdc;"></div>
<div style="left:1809.4px;top:179.9px;width:40.4px;height:22.2px;background:#dcdcdc;"></div>
<div style="left:1890.3px;top:179.9px;width:1.3px;height:22.2px;background:#dcdcdc;"></div>
<div style="left:445.3px;top:229.3px;width:1446.2px;height:1.1px;background:#e9e9e9;"></div>
<div style="left:445.3px;top:205.7px;width:30.3px;height:22.2px;background:#dcdcdc;"></div>
<div style="left:516.1px;top:205.7px;width:121.3px;height:22.2px;background:#dcdcdc;"></div>
<div style="left:677.7px;top:205.7px;width:40.4px;height:22.2px;background:#dcdcdc;"></div>
<div style="left:758.6px;top:205.7px;width:40.4px;height:22.2px;background:#dcdcdc;"></div>
<div style="left:839.4px;top:205.7px;width:40.4px;height:22.2px;background:#dcdcdc;"></div>
<div style="left:920.2px;top:205.7px;width:40.4px;height:22.2px;background:#dcdcdc;"></div>
<div style="left:1001.1px;top:205.7px;width:40.4px;height:22.2px;background:#dcdcdc;"></div>
<div style="left:1081.9px;top:205.7px;width:121.3px;height:22.2px;background:#dcdcdc;"></div>
<div style="left:1243.6px;top:205.7px;width:40.4px;height:22.2px;background:#dcdcdc;"></div>
<div style="left:1324.4px;top:205.7px;width:40.4px;height:22.2px;background:#dcdcdc;"></div>
<div style="left:1405.3px;top:205.7px;width:40.4px;height:22.2px;background:#dcdcdc;"></div>
<div style="left:1486.1px;top:205.7px;width:40.4px;height:22.2px;background:#dcdcdc;"></div>
<div style="left:1566.9px;top:205.7px;width:40.4px;height:22.2px;background:#dcdcdc;"></div>
<div style="left:1647.8px;top:205.7px;width:121.3px;height:22.2px;background:#dcdcdc;"></div>
<div style="left:1809.4px;top:205.7px;width:40.4px;height:22.2px;background:#dcdcdc;"></div>
<div style="left:1890.3px;top:205.7px;width:1.3px;height:22.2px;background:#dcdcdc;"></div>
<div style="left:445.3px;top:255.1px;width:1446.2px;height:1.1px;background:#e9e9e9;"></div>
<div style="left:445.3px;top:231.5px;width:30.3px;height:22.2px;background:#dcdcdc;"></div>
<div style="left:516.1px;top:231.5px;width:121.3px;height:22.2px;background:#dcdcdc;"></div>
<div style="left:677.7px;top:231.5px;width:40.4px;height:22.2px;background:#dcdcdc;"></div>
<div style="left:758.6px;top:231.5px;width:40.4px;height:22.2px;background:#dcdcdc;"></div>
<div style="left:839.4px;top:231.5px;width:40.4px;height:22.2px;background:#dcdcdc;"></div>
<div style="left:920.2px;top:231.5px;width:40.4px;height:22.2px;background:#dcdcdc;"></div>
<div style="left:1001.1px;top:231.5px;width:40.4px;height:22.2px;background:#dcdcdc;"></div>
<div style="left:1081.9px;top:231.5px;width:121.3px;height:22.2px;background:#dcdcdc;"></div>
<div style="left:1243.6px;top:231.5px;width:40.4px;height:22.2px;background:#dcdcdc;"></div>
<div style="left:1324.4px;top:231.5px;width:40.4px;height:22.2px;background:#dcdcdc;"></div>
<div style="left:1405.3px;top:231.5px;width:40.4px;height:22.2px;background:#dcdcdc;"></div>
<div style="left:1486.1px;top:231.5px;width:40.4px;height:22.2px;background:#dcdcdc;"></div>
<div style="left:1566.9px;top:231.5px;width:40.4px;height:22.2px;background:#dcdcdc;"></div>
<div style="left:1647.8px;top:231.5px;width:121.3px;height:22.2px;background:#dcdcdc;"></div>
<div style="left:1809.4px;top:231.5px;width:40.4px;height:22.2px;background:#dcdcdc;"></div>
<div style="left:1890.3px;top:231.5px;width:1.3px;height:22.2px;background:#dcdcdc;"></div>
<div style="left:556.6px;top:81.8px;width:0.9px;height:182.4px;background:#f08a8a;"></div>
<div style="left:635.2px;top:81.8px;width:1.8px;height:182.4px;background:#3c8a57;"></div>
<div style="left:1738.8px;top:81.8px;width:1.1px;height:182.4px;background:#f5b45c;"></div>
<div style="left:637.5px;top:102.6px;width:100.4px;height:22.2px;background:#c27ba0;"></div>
<div class="bl" style="left:638.2px;top:103.3px;width:3.2px;height:22.2px;line-height:24.2px;color:#fff;">B</div>
<div class="bl" style="left:642.5px;top:103.3px;width:3px;height:22.2px;line-height:24.2px;color:#fff;">B</div>
<div class="bl" style="left:646.6px;top:103.3px;width:3px;height:22.2px;line-height:24.2px;color:#fff;">B</div>
<div class="bl" style="left:650.7px;top:103.3px;width:1.4px;height:22.2px;line-height:24.2px;color:#fff;">B</div>
<div class="bl" style="left:653.2px;top:103.3px;width:4.3px;height:22.2px;line-height:24.2px;color:#fff;">B</div>
<div class="bl" style="left:658.5px;top:103.3px;width:3px;height:22.2px;line-height:24.2px;color:#fff;">B</div>
<div class="bl" style="left:662.6px;top:103.3px;width:59.7px;height:22.2px;line-height:24.2px;color:#fff;">BFMRA</div>
<div class="bl" style="left:723.4px;top:103.3px;width:3.4px;height:22.2px;line-height:24.2px;color:#fff;">B</div>
<div class="bl" style="left:727.8px;top:103.3px;width:3.9px;height:22.2px;line-height:24.2px;color:#fff;">B</div>
<div class="bl" style="left:732.8px;top:103.3px;width:4.8px;height:22.2px;line-height:24.2px;color:#fff;">B</div>
<div style="left:738px;top:102.6px;width:85px;height:22.2px;background:#7f6000;"></div>
<div class="bl" style="left:738.7px;top:103.3px;width:3.2px;height:22.2px;line-height:24.2px;color:#fff;">B</div>
<div class="bl" style="left:742.9px;top:103.3px;width:2.1px;height:22.2px;line-height:24.2px;color:#fff;">B</div>
<div class="bl" style="left:746.1px;top:103.3px;width:2.1px;height:22.2px;line-height:24.2px;color:#fff;">B</div>
<div class="bl" style="left:749.3px;top:103.3px;width:2.1px;height:22.2px;line-height:24.2px;color:#fff;">B</div>
<div class="bl" style="left:752.5px;top:103.3px;width:2.1px;height:22.2px;line-height:24.2px;color:#fff;">B</div>
<div class="bl" style="left:755.7px;top:103.3px;width:2.1px;height:22.2px;line-height:24.2px;color:#fff;">B</div>
<div class="bl" style="left:758.9px;top:103.3px;width:43.9px;height:22.2px;line-height:24.2px;color:#fff;">BFMYB</div>
<div class="bl" style="left:803.9px;top:103.3px;width:4.3px;height:22.2px;line-height:24.2px;color:#fff;">B</div>
<div class="bl" style="left:809.2px;top:103.3px;width:2.1px;height:22.2px;line-height:24.2px;color:#fff;">B</div>
<div class="bl" style="left:812.4px;top:103.3px;width:2.1px;height:22.2px;line-height:24.2px;color:#fff;">B</div>
<div class="bl" style="left:815.6px;top:103.3px;width:2.1px;height:22.2px;line-height:24.2px;color:#fff;">B</div>
<div class="bl" style="left:818.8px;top:103.3px;width:3.7px;height:22.2px;line-height:24.2px;color:#fff;">B</div>
<div style="left:822.9px;top:102.6px;width:71.1px;height:22.2px;background:#f6b26b;"></div>
<div class="bl" style="left:823.6px;top:103.3px;width:1.8px;height:22.2px;line-height:24.2px;color:#fff;">B</div>
<div class="bl" style="left:826.5px;top:103.3px;width:3.4px;height:22.2px;line-height:24.2px;color:#fff;">B</div>
<div class="bl" style="left:830.9px;top:103.3px;width:3.4px;height:22.2px;line-height:24.2px;color:#fff;">B</div>
<div class="bl" style="left:835.4px;top:103.3px;width:1.6px;height:22.2px;line-height:24.2px;color:#fff;">B</div>
<div class="bl" style="left:838px;top:103.3px;width:2.5px;height:22.2px;line-height:24.2px;color:#fff;">B</div>
<div class="bl" style="left:841.6px;top:103.3px;width:45.2px;height:22.2px;line-height:24.2px;color:#fff;">BFSBA</div>
<div class="bl" style="left:887.8px;top:103.3px;width:2.1px;height:22.2px;line-height:24.2px;color:#fff;">B</div>
<div class="bl" style="left:891px;top:103.3px;width:2.7px;height:22.2px;line-height:24.2px;color:#fff;">B</div>
<div style="left:637.5px;top:128.4px;width:34.4px;height:22.2px;background:#c27ba0;"></div>
<div class="bl" style="left:638.2px;top:129.1px;width:2.8px;height:22.2px;line-height:24.2px;color:#fff;">B</div>
<div class="bl" style="left:642px;top:129.1px;width:2.8px;height:22.2px;line-height:24.2px;color:#fff;">B</div>
<div class="bl" style="left:645.9px;top:129.1px;width:2.8px;height:22.2px;line-height:24.2px;color:#fff;">B</div>
<div class="bl" style="left:649.7px;top:129.1px;width:2.8px;height:22.2px;line-height:24.2px;color:#fff;">B</div>
<div class="bl" style="left:653.5px;top:129.1px;width:2.8px;height:22.2px;line-height:24.2px;color:#fff;">B</div>
<div class="bl" style="left:657.3px;top:129.1px;width:2.8px;height:22.2px;line-height:24.2px;color:#fff;">B</div>
<div class="bl" style="left:661.2px;top:129.1px;width:2.8px;height:22.2px;line-height:24.2px;color:#fff;">B</div>
<div class="bl" style="left:665px;top:129.1px;width:2.8px;height:22.2px;line-height:24.2px;color:#fff;">B</div>
<div class="bl" style="left:668.8px;top:129.1px;width:2.8px;height:22.2px;line-height:24.2px;color:#fff;">B</div>
<div style="left:672px;top:128.4px;width:71.3px;height:22.2px;background:#7f6000;"></div>
<div class="bl" style="left:672.7px;top:129.1px;width:5.3px;height:22.2px;line-height:24.2px;color:#fff;">B</div>
<div class="bl" style="left:679.1px;top:129.1px;width:41.6px;height:22.2px;line-height:24.2px;color:#fff;">BFMYB</div>
<div class="bl" style="left:721.8px;top:129.1px;width:2.6px;height:22.2px;line-height:24.2px;color:#fff;">B</div>
<div class="bl" style="left:725.5px;top:129.1px;width:2.6px;height:22.2px;line-height:24.2px;color:#fff;">B</div>
<div class="bl" style="left:729.2px;top:129.1px;width:2.6px;height:22.2px;line-height:24.2px;color:#fff;">B</div>
<div class="bl" style="left:732.9px;top:129.1px;width:2.6px;height:22.2px;line-height:24.2px;color:#fff;">B</div>
<div class="bl" style="left:736.6px;top:129.1px;width:2.6px;height:22.2px;line-height:24.2px;color:#fff;">B</div>
<div class="bl" style="left:740.3px;top:129.1px;width:2.6px;height:22.2px;line-height:24.2px;color:#fff;">B</div>
<div style="left:743.3px;top:128.4px;width:74px;height:22.2px;background:#f6b26b;"></div>
<div class="bl" style="left:744px;top:129.1px;width:3.4px;height:22.2px;line-height:24.2px;color:#fff;">B</div>
<div class="bl" style="left:748.4px;top:129.1px;width:3.4px;height:22.2px;line-height:24.2px;color:#fff;">B</div>
<div class="bl" style="left:752.9px;top:129.1px;width:3.4px;height:22.2px;line-height:24.2px;color:#fff;">B</div>
<div class="bl" style="left:757.3px;top:129.1px;width:43.9px;height:22.2px;line-height:24.2px;color:#fff;">BFSBB</div>
<div class="bl" style="left:802.3px;top:129.1px;width:2.7px;height:22.2px;line-height:24.2px;color:#fff;">B</div>
<div class="bl" style="left:806px;top:129.1px;width:2.5px;height:22.2px;line-height:24.2px;color:#fff;">B</div>
<div class="bl" style="left:809.6px;top:129.1px;width:2.5px;height:22.2px;line-height:24.2px;color:#fff;">B</div>
<div style="left:637.5px;top:154.1px;width:282.8px;height:22.2px;background:#c27ba0;"></div>
<div class="bl" style="left:638.2px;top:154.8px;width:20.1px;height:22.2px;line-height:24.2px;color:#fff;">BW</div>
<div class="bl" style="left:659.4px;top:154.8px;width:2.7px;height:22.2px;line-height:24.2px;color:#fff;">B</div>
<div class="bl" style="left:663.1px;top:154.8px;width:59.2px;height:22.2px;line-height:24.2px;color:#fff;">BWM25B</div>
<div class="bl" style="left:723.4px;top:154.8px;width:16.2px;height:22.2px;line-height:24.2px;color:#fff;">BW</div>
<div class="bl" style="left:740.6px;top:154.8px;width:7.8px;height:22.2px;line-height:24.2px;color:#fff;">BW</div>
<div class="bl" style="left:749.5px;top:154.8px;width:57.6px;height:22.2px;line-height:24.2px;color:#fff;">BWM25A</div>
<div class="bl" style="left:808.2px;top:154.8px;width:16.4px;height:22.2px;line-height:24.2px;color:#fff;">BW</div>
<div class="bl" style="left:825.6px;top:154.8px;width:11.6px;height:22.2px;line-height:24.2px;color:#fff;">BW</div>
<div class="bl" style="left:838.2px;top:154.8px;width:49.1px;height:22.2px;line-height:24.2px;color:#fff;">BWM25A</div>
<div class="bl" style="left:888.4px;top:154.8px;width:20.1px;height:22.2px;line-height:24.2px;color:#fff;">BW</div>
<div class="bl" style="left:909.5px;top:154.8px;width:10.5px;height:22.2px;line-height:24.2px;color:#fff;">BW</div>
<div style="left:961.2px;top:154.1px;width:107.9px;height:22.2px;background:#7f6000;"></div>
<div class="bl" style="left:962px;top:154.8px;width:9.8px;height:22.2px;line-height:24.2px;color:#fff;">BW</div>
<div class="bl" style="left:972.8px;top:154.8px;width:13.2px;height:22.2px;line-height:24.2px;color:#fff;">BW</div>
<div class="bl" style="left:987px;top:154.8px;width:60.8px;height:22.2px;line-height:24.2px;color:#fff;">BWM27A</div>
<div class="bl" style="left:1048.9px;top:154.8px;width:10.7px;height:22.2px;line-height:24.2px;color:#fff;">BW</div>
<div class="bl" style="left:1060.6px;top:154.8px;width:8.2px;height:22.2px;line-height:24.2px;color:#fff;">BW</div>
<div style="left:1069.2px;top:154.1px;width:323px;height:22.2px;background:#4a8a08;"></div>
<div class="bl" style="left:1069.9px;top:154.8px;width:11.2px;height:22.2px;line-height:24.2px;color:#fff;">BW</div>
<div class="bl" style="left:1082.1px;top:154.8px;width:136.2px;height:22.2px;line-height:24.2px;color:#fff;">BWM29A</div>
<div class="bl" style="left:1219.4px;top:154.8px;width:17.6px;height:22.2px;line-height:24.2px;color:#fff;">BW</div>
<div class="bl" style="left:1238px;top:154.8px;width:3.2px;height:22.2px;line-height:24.2px;color:#fff;">B</div>
<div class="bl" style="left:1242.3px;top:154.8px;width:57.2px;height:22.2px;line-height:24.2px;color:#fff;">BWM29A</div>
<div class="bl" style="left:1300.6px;top:154.8px;width:10px;height:22.2px;line-height:24.2px;color:#fff;">BW</div>
<div class="bl" style="left:1311.6px;top:154.8px;width:59.2px;height:22.2px;line-height:24.2px;color:#fff;">BWM29A</div>
<div class="bl" style="left:1371.9px;top:154.8px;width:16.2px;height:22.2px;line-height:24.2px;color:#fff;">BW</div>
<div class="bl" style="left:1389.2px;top:154.8px;width:2.7px;height:22.2px;line-height:24.2px;color:#fff;">B</div>
<div style="left:1392.2px;top:154.1px;width:149.2px;height:22.2px;background:#e69138;"></div>
<div class="bl" style="left:1392.9px;top:154.8px;width:11.9px;height:22.2px;line-height:24.2px;color:#fff;">BW</div>
<div class="bl" style="left:1405.9px;top:154.8px;width:61.9px;height:22.2px;line-height:24.2px;color:#fff;">BWS27A</div>
<div class="bl" style="left:1468.8px;top:154.8px;width:14.8px;height:22.2px;line-height:24.2px;color:#fff;">BW</div>
<div class="bl" style="left:1484.6px;top:154.8px;width:56.4px;height:22.2px;line-height:24.2px;color:#fff;">BWS27A</div>
<div style="left:1541.3px;top:154.1px;width:89.4px;height:22.2px;background:#05875f;"></div>
<div class="bl" style="left:1542px;top:154.8px;width:15.1px;height:22.2px;line-height:24.2px;color:#fff;">BW</div>
<div class="bl" style="left:1558.2px;top:154.8px;width:60.6px;height:22.2px;line-height:24.2px;color:#fff;">BWS25A</div>
<div class="bl" style="left:1619.9px;top:154.8px;width:10.5px;height:22.2px;line-height:24.2px;color:#fff;">BW</div>
<div style="left:637.5px;top:179.9px;width:354.5px;height:22.2px;background:#c27ba0;"></div>
<div class="bl" style="left:638.2px;top:180.6px;width:22px;height:22.2px;line-height:24.2px;color:#fff;">BW</div>
<div class="bl" style="left:661.3px;top:180.6px;width:60.1px;height:22.2px;line-height:24.2px;color:#fff;">BWM25B</div>
<div class="bl" style="left:722.5px;top:180.6px;width:24.9px;height:22.2px;line-height:24.2px;color:#fff;">BWM</div>
<div class="bl" style="left:748.4px;top:180.6px;width:57.6px;height:22.2px;line-height:24.2px;color:#fff;">BWM25A</div>
<div class="bl" style="left:807.1px;top:180.6px;width:16.7px;height:22.2px;line-height:24.2px;color:#fff;">BW</div>
<div class="bl" style="left:824.9px;top:180.6px;width:64.5px;height:22.2px;line-height:24.2px;color:#fff;">BWM25A</div>
<div class="bl" style="left:890.5px;top:180.6px;width:19px;height:22.2px;line-height:24.2px;color:#fff;">BW</div>
<div class="bl" style="left:910.6px;top:180.6px;width:58.8px;height:22.2px;line-height:24.2px;color:#fff;">BWM25A</div>
<div class="bl" style="left:970.5px;top:180.6px;width:21.2px;height:22.2px;line-height:24.2px;color:#fff;">BWM</div>
<div style="left:992px;top:179.9px;width:222px;height:22.2px;background:#7f6000;"></div>
<div class="bl" style="left:992.7px;top:180.6px;width:58.8px;height:22.2px;line-height:24.2px;color:#fff;">BWM27A</div>
<div class="bl" style="left:1052.6px;top:180.6px;width:18.8px;height:22.2px;line-height:24.2px;color:#fff;">BW</div>
<div class="bl" style="left:1072.5px;top:180.6px;width:141.2px;height:22.2px;line-height:24.2px;color:#fff;">BWM27A</div>
<div style="left:1214px;top:179.9px;width:239.1px;height:22.2px;background:#4a8a08;"></div>
<div class="bl" style="left:1214.8px;top:180.6px;width:23.3px;height:22.2px;line-height:24.2px;color:#fff;">BWM</div>
<div class="bl" style="left:1239.1px;top:180.6px;width:65.1px;height:22.2px;line-height:24.2px;color:#fff;">BWM29A</div>
<div class="bl" style="left:1305.2px;top:180.6px;width:61px;height:22.2px;line-height:24.2px;color:#fff;">BWM29A</div>
<div class="bl" style="left:1367.3px;top:180.6px;width:24.9px;height:22.2px;line-height:24.2px;color:#fff;">BWM</div>
<div class="bl" style="left:1393.2px;top:180.6px;width:59.6px;height:22.2px;line-height:24.2px;color:#fff;">BWM29A</div>
<div style="left:1453.2px;top:179.9px;width:108.1px;height:22.2px;background:#e69138;"></div>
<div class="bl" style="left:1453.9px;top:180.6px;width:23.3px;height:22.2px;line-height:24.2px;color:#fff;">BWS</div>
<div class="bl" style="left:1478.2px;top:180.6px;width:61.7px;height:22.2px;line-height:24.2px;color:#fff;">BWS27A</div>
<div class="bl" style="left:1541px;top:180.6px;width:19.9px;height:22.2px;line-height:24.2px;color:#fff;">BW</div>
<div style="left:1561.2px;top:179.9px;width:313.4px;height:22.2px;background:#05875f;"></div>
<div class="bl" style="left:1562px;top:180.6px;width:60.8px;height:22.2px;line-height:24.2px;color:#fff;">BWS25B</div>
<div class="bl" style="left:1623.8px;top:180.6px;width:18.8px;height:22.2px;line-height:24.2px;color:#fff;">BW</div>
<div class="bl" style="left:1643.7px;top:180.6px;width:145.4px;height:22.2px;line-height:24.2px;color:#fff;">BWS25B</div>
<div class="bl" style="left:1790.2px;top:180.6px;width:63.3px;height:22.2px;line-height:24.2px;color:#fff;">BWS25A</div>
<div class="bl" style="left:1854.6px;top:180.6px;width:19.7px;height:22.2px;line-height:24.2px;color:#fff;">BWS</div>
<div style="left:637.5px;top:205.7px;width:13.9px;height:22.2px;background:#f6b26b;"></div>
<div class="bl" style="left:638.2px;top:206.4px;width:12.8px;height:22.2px;line-height:24.2px;color:#fff;">BK</div>
<div style="left:658.1px;top:205.7px;width:13.9px;height:22.2px;background:#f6b26b;"></div>
<div class="bl" style="left:658.8px;top:206.4px;width:12.8px;height:22.2px;line-height:24.2px;color:#fff;">BK</div>
<div style="left:672px;top:205.7px;width:45.3px;height:22.2px;background:#c27ba0;"></div>
<div class="bl" style="left:672.7px;top:206.4px;width:44.3px;height:22.2px;line-height:24.2px;color:#fff;">BKMY25B</div>
<div style="left:717.3px;top:205.7px;width:19.7px;height:22.2px;background:#7f6000;"></div>
<div class="bl" style="left:718px;top:206.4px;width:18.7px;height:22.2px;line-height:24.2px;color:#fff;">BKM</div>
<div style="left:743.3px;top:205.7px;width:90.5px;height:22.2px;background:#f6b26b;"></div>
<div class="bl" style="left:744px;top:206.4px;width:64.5px;height:22.2px;line-height:24.2px;color:#fff;">BKMY25B03</div>
<div class="bl" style="left:809.6px;top:206.4px;width:23.8px;height:22.2px;line-height:24.2px;color:#fff;">BKMY</div>
<div style="left:833.8px;top:205.7px;width:45.9px;height:22.2px;background:#c27ba0;"></div>
<div class="bl" style="left:834.5px;top:206.4px;width:44.8px;height:22.2px;line-height:24.2px;color:#fff;">BKMR25A01</div>
<div style="left:879.6px;top:205.7px;width:34.3px;height:22.2px;background:#f6b26b;"></div>
<div class="bl" style="left:880.4px;top:206.4px;width:33.2px;height:22.2px;line-height:24.2px;color:#fff;">BKMY25</div>
<div style="left:914px;top:205.7px;width:148.8px;height:22.2px;background:#c27ba0;"></div>
<div class="bl" style="left:914.7px;top:206.4px;width:47.5px;height:22.2px;line-height:24.2px;color:#fff;">BKMY25B</div>
<div class="bl" style="left:963.2px;top:206.4px;width:21px;height:22.2px;line-height:24.2px;color:#fff;">BKM</div>
<div class="bl" style="left:985.2px;top:206.4px;width:13.3px;height:22.2px;line-height:24.2px;color:#fff;">BKM</div>
<div class="bl" style="left:999.6px;top:206.4px;width:62.8px;height:22.2px;line-height:24.2px;color:#fff;">BKMY25A02</div>
<div style="left:1067.6px;top:205.7px;width:229px;height:22.2px;background:#7f6000;"></div>
<div class="bl" style="left:1068.3px;top:206.4px;width:143.8px;height:22.2px;line-height:24.2px;color:#fff;">BKMY27A03</div>
<div class="bl" style="left:1213.2px;top:206.4px;width:15.3px;height:22.2px;line-height:24.2px;color:#fff;">BK</div>
<div class="bl" style="left:1229.5px;top:206.4px;width:66.7px;height:22.2px;line-height:24.2px;color:#fff;">BKMY27A02</div>
<div style="left:1296.5px;top:205.7px;width:17.4px;height:22.2px;background:#f6b26b;"></div>
<div class="bl" style="left:1297.2px;top:206.4px;width:16.4px;height:22.2px;line-height:24.2px;color:#fff;">BK</div>
<div style="left:1314px;top:205.7px;width:68.1px;height:22.2px;background:#4a8a08;"></div>
<div class="bl" style="left:1314.7px;top:206.4px;width:67px;height:22.2px;line-height:24.2px;color:#fff;">BKMR29A01</div>
<div style="left:1400.9px;top:205.7px;width:132.4px;height:22.2px;background:#f7bb82;"></div>
<div class="bl" style="left:1401.6px;top:206.4px;width:69.2px;height:22.2px;line-height:24.2px;color:#fff;">BKSB27A01</div>
<div class="bl" style="left:1471.8px;top:206.4px;width:61.2px;height:22.2px;line-height:24.2px;color:#fff;">BKSB27A02</div>
<div style="left:1533.3px;top:205.7px;width:77.3px;height:22.2px;background:#05875f;"></div>
<div class="bl" style="left:1534px;top:206.4px;width:17.6px;height:22.2px;line-height:24.2px;color:#fff;">BK</div>
<div class="bl" style="left:1552.7px;top:206.4px;width:57.6px;height:22.2px;line-height:24.2px;color:#fff;">BKSB25A02</div>
<div style="left:1610.7px;top:205.7px;width:19.7px;height:22.2px;background:#5b8c00;"></div>
<div class="bl" style="left:1611.4px;top:206.4px;width:18.7px;height:22.2px;line-height:24.2px;color:#fff;">BKM</div>
<div style="left:1630.4px;top:205.7px;width:146.8px;height:22.2px;background:#05875f;"></div>
<div class="bl" style="left:1631.1px;top:206.4px;width:145.8px;height:22.2px;line-height:24.2px;color:#fff;">BKSB25A03</div>
<div style="left:1777.2px;top:205.7px;width:93.5px;height:22.2px;background:#5b8c00;"></div>
<div class="bl" style="left:1778px;top:206.4px;width:25.6px;height:22.2px;line-height:24.2px;color:#fff;">BKM</div>
<div class="bl" style="left:1804.6px;top:206.4px;width:65.8px;height:22.2px;line-height:24.2px;color:#fff;">BKMR29A03</div>
<div style="left:805.2px;top:231.5px;width:15.8px;height:22.2px;background:#f6b26b;"></div>
<div class="bl" style="left:805.9px;top:232.2px;width:14.8px;height:22.2px;line-height:24.2px;color:#fff;">BK</div>
<div style="left:889.2px;top:231.5px;width:75.7px;height:22.2px;background:#f6b26b;"></div>
<div class="bl" style="left:890px;top:232.2px;width:21.7px;height:22.2px;line-height:24.2px;color:#fff;">BKM</div>
<div class="bl" style="left:912.7px;top:232.2px;width:51.9px;height:22.2px;line-height:24.2px;color:#fff;">BKMY25B01</div>
<div style="left:973px;top:231.5px;width:75.6px;height:22.2px;background:#f6b26b;"></div>
<div class="bl" style="left:973.7px;top:232.2px;width:20.1px;height:22.2px;line-height:24.2px;color:#fff;">BKM</div>
<div class="bl" style="left:994.8px;top:232.2px;width:53.3px;height:22.2px;line-height:24.2px;color:#fff;">BKMY25A01</div>
<div style="left:1048.5px;top:231.5px;width:174.4px;height:22.2px;background:#c27ba0;"></div>
<div class="bl" style="left:1049.2px;top:232.2px;width:18.1px;height:22.2px;line-height:24.2px;color:#fff;">BK</div>
<div class="bl" style="left:1068.4px;top:232.2px;width:12.6px;height:22.2px;line-height:24.2px;color:#fff;">BK</div>
<div class="bl" style="left:1082.1px;top:232.2px;width:140.4px;height:22.2px;line-height:24.2px;color:#fff;">BKMR25A02</div>
<div style="left:1222.9px;top:231.5px;width:78px;height:22.2px;background:#f6b26b;"></div>
<div class="bl" style="left:1223.6px;top:232.2px;width:19.2px;height:22.2px;line-height:24.2px;color:#fff;">BK</div>
<div class="bl" style="left:1243.9px;top:232.2px;width:56.7px;height:22.2px;line-height:24.2px;color:#fff;">BKMR25B01</div>
<div style="left:1301px;top:231.5px;width:72.2px;height:22.2px;background:#7f6000;"></div>
<div class="bl" style="left:1301.7px;top:232.2px;width:16.9px;height:22.2px;line-height:24.2px;color:#fff;">BK</div>
<div class="bl" style="left:1319.6px;top:232.2px;width:53.2px;height:22.2px;line-height:24.2px;color:#fff;">BKMY27A01</div>
<div style="left:1373.2px;top:231.5px;width:20.6px;height:22.2px;background:#c27ba0;"></div>
<div class="bl" style="left:1373.9px;top:232.2px;width:19.6px;height:22.2px;line-height:24.2px;color:#fff;">BKM</div>
<div style="left:1393.8px;top:231.5px;width:139px;height:22.2px;background:#4a8a08;"></div>
<div class="bl" style="left:1394.5px;top:232.2px;width:60.4px;height:22.2px;line-height:24.2px;color:#fff;">BKMR29A01</div>
<div class="bl" style="left:1456px;top:232.2px;width:18.7px;height:22.2px;line-height:24.2px;color:#fff;">BKM</div>
<div class="bl" style="left:1475.7px;top:232.2px;width:56.7px;height:22.2px;line-height:24.2px;color:#fff;">BKMR29A02</div>
<div style="left:1532.8px;top:231.5px;width:79.6px;height:22.2px;background:#e69138;"></div>
<div class="bl" style="left:1533.5px;top:232.2px;width:19.2px;height:22.2px;line-height:24.2px;color:#fff;">BK</div>
<div class="bl" style="left:1553.8px;top:232.2px;width:58.3px;height:22.2px;line-height:24.2px;color:#fff;">BKSB27A02</div>
<div style="left:1612.4px;top:231.5px;width:178.1px;height:22.2px;background:#f6b26b;"></div>
<div class="bl" style="left:1613.2px;top:232.2px;width:20.6px;height:22.2px;line-height:24.2px;color:#fff;">BKS</div>
<div class="bl" style="left:1634.8px;top:232.2px;width:155.4px;height:22.2px;line-height:24.2px;color:#fff;">BKSB27A01</div>
<div style="left:1790.6px;top:231.5px;width:93.9px;height:22.2px;background:#05875f;"></div>
<div class="bl" style="left:1791.3px;top:232.2px;width:59.7px;height:22.2px;line-height:24.2px;color:#fff;">BKSB25A01</div>
<div class="bl" style="left:1852.1px;top:232.2px;width:21.2px;height:22.2px;line-height:24.2px;color:#fff;">BKS</div>
<div class="bl" style="left:1874.3px;top:232.2px;width:9.8px;height:22.2px;line-height:24.2px;color:#fff;">BK</div>
<div style="left:641.8px;top:150.6px;width:2.7px;height:1.6px;background:#1fe0d0;"></div>
<div style="left:660.3px;top:150.6px;width:2.8px;height:1.6px;background:#1fe0d0;"></div>
<div style="left:672px;top:150.6px;width:46.9px;height:1.6px;background:#1fe0d0;"></div>
<div style="left:755.6px;top:150.6px;width:44.4px;height:1.6px;background:#1fe0d0;"></div>
<div style="left:1239.1px;top:176.4px;width:58px;height:1.6px;background:#1fe0d0;"></div>
<div style="left:1309.9px;top:176.4px;width:60.1px;height:1.6px;background:#1fe0d0;"></div>
<div style="left:1070.6px;top:202.1px;width:143.5px;height:1.6px;background:#1fe0d0;"></div>
<div style="left:1303.1px;top:202.1px;width:61.2px;height:1.6px;background:#1fe0d0;"></div>
<div style="left:833.8px;top:227.9px;width:45.9px;height:1.6px;background:#1fe0d0;"></div>
<div style="left:1296.5px;top:227.9px;width:17.4px;height:1.6px;background:#1fe0d0;"></div>
<div style="left:1630.4px;top:227.9px;width:146.8px;height:1.6px;background:#1fe0d0;"></div>
<div style="left:910.2px;top:253.7px;width:54.8px;height:1.6px;background:#1fe0d0;"></div>
<div style="left:1632.9px;top:253.7px;width:157.7px;height:1.6px;background:#1fe0d0;"></div>
<div style="left:1388.1px;top:205.3px;width:12.8px;height:22.9px;background:#f6b26b;border:3px solid #0a1af0;"></div>
<div style="left:1391.1px;top:205.7px;width:7.1px;height:22.2px;line-height:24.2px;color:#fff;font-size:10px;overflow:hidden;">B</div>
<div style="left:597.7px;top:69px;width:4.8px;height:32.4px;background:#f00;border-radius:1.500px;"></div>
<div style="left:1891.6px;top:69.7px;width:28.4px;height:274.3px;background:#fff;"></div>
<svg style="position:absolute;left:1896.4px;top:78px;width:14.9px;height:8.2px" viewBox="0 0 10 6"><path d="M0 6L5 0l5 6z" fill="#7a7a7a"/></svg>
<div style="left:1897.2px;top:97.8px;width:14.6px;height:197.9px;background:#8b8b8b;border-radius:8px;"></div>
<svg style="position:absolute;left:1896.4px;top:324.8px;width:14.9px;height:8.2px" viewBox="0 0 10 6"><path d="M0 0h10L5 6z" fill="#7a7a7a"/></svg>
<div style="left:445.3px;top:344px;width:1474.7px;height:24px;background:#fafafa;"></div>
<svg style="position:absolute;left:1874.1px;top:347.6px;width:8.2px;height:14.9px" viewBox="0 0 6 10"><path d="M0 0l6 5-6 5z" fill="#7a7a7a"/></svg>
<div style="left:0px;top:356.6px;width:445.3px;height:12.1px;background:#e6eefb;"></div>
<div style="left:0px;top:69.3px;width:1.8px;height:858.3px;background:#95b8e7;"></div>
<div style="left:0px;top:368.7px;width:1920px;height:558.9px;background:#fff;border:1px solid #95b8e7;border-right:0;"></div>
<div style="left:1.1px;top:369.6px;width:1889.6px;height:34px;background:linear-gradient(#fafafa,#ededed);border-bottom:1px solid #ddd;"></div>
<div style="left:1.1px;top:403.6px;width:24.5px;height:523px;background:#f2f2f2;border-right:1px solid #ddd;"></div>
<div style="left:26px;top:369.6px;width:18.5px;height:34px;line-height:35.9px;padding-left:1.500px;color:#333;">工单号</div>
<div style="left:25.6px;top:403.6px;width:1865.1px;height:25.9px;background:#fff;border-bottom:1px dotted #ddd;"></div>
<div style="left:1.1px;top:403.6px;width:23.8px;height:25.9px;line-height:27.9px;text-align:center;color:#111;">1</div>
<div style="left:26px;top:403.6px;width:45.2px;height:25.9px;line-height:27.9px;padding-left:1.200px;color:#111;">358425996449808388</div>
<div style="left:1770px;top:403.6px;width:77.5px;height:25.9px;line-height:27.9px;text-align:right;color:#111;">300</div>
<div style="left:1769.4px;top:403.6px;width:1.1px;height:25.9px;background:#ececec;"></div>
<div style="left:1850.8px;top:403.6px;width:1.1px;height:25.9px;background:#ececec;"></div>
<div style="left:25.6px;top:429.5px;width:1865.1px;height:25.9px;background:#fafafa;border-bottom:1px dotted #ddd;"></div>
<div style="left:1.1px;top:429.5px;width:23.8px;height:25.9px;line-height:27.9px;text-align:center;color:#111;">2</div>
<div style="left:26px;top:429.5px;width:45.2px;height:25.9px;line-height:27.9px;padding-left:1.200px;color:#111;">358425996449808388</div>
<div style="left:1770px;top:429.5px;width:77.5px;height:25.9px;line-height:27.9px;text-align:right;color:#111;">300</div>
<div style="left:1769.4px;top:429.5px;width:1.1px;height:25.9px;background:#ececec;"></div>
<div style="left:1850.8px;top:429.5px;width:1.1px;height:25.9px;background:#ececec;"></div>
<div style="left:25.6px;top:455.4px;width:1865.1px;height:25.9px;background:#fff;border-bottom:1px dotted #ddd;"></div>
<div style="left:1.1px;top:455.4px;width:23.8px;height:25.9px;line-height:27.9px;text-align:center;color:#111;">3</div>
<div style="left:26px;top:455.4px;width:45.2px;height:25.9px;line-height:27.9px;padding-left:1.200px;color:#111;">358425996449808388</div>
<div style="left:1770px;top:455.4px;width:77.5px;height:25.9px;line-height:27.9px;text-align:right;color:#111;">300</div>
<div style="left:1769.4px;top:455.4px;width:1.1px;height:25.9px;background:#ececec;"></div>
<div style="left:1850.8px;top:455.4px;width:1.1px;height:25.9px;background:#ececec;"></div>
<div style="left:25.6px;top:481.3px;width:1865.1px;height:25.9px;background:#fafafa;border-bottom:1px dotted #ddd;"></div>
<div style="left:1.1px;top:481.3px;width:23.8px;height:25.9px;line-height:27.9px;text-align:center;color:#111;">4</div>
<div style="left:26px;top:481.3px;width:45.2px;height:25.9px;line-height:27.9px;padding-left:1.200px;color:#111;">358425996449808388</div>
<div style="left:1770px;top:481.3px;width:77.5px;height:25.9px;line-height:27.9px;text-align:right;color:#111;">300</div>
<div style="left:1769.4px;top:481.3px;width:1.1px;height:25.9px;background:#ececec;"></div>
<div style="left:1850.8px;top:481.3px;width:1.1px;height:25.9px;background:#ececec;"></div>
<div style="left:25.6px;top:507.2px;width:1865.1px;height:25.9px;background:#fff;border-bottom:1px dotted #ddd;"></div>
<div style="left:1.1px;top:507.2px;width:23.8px;height:25.9px;line-height:27.9px;text-align:center;color:#111;">5</div>
<div style="left:26px;top:507.2px;width:45.2px;height:25.9px;line-height:27.9px;padding-left:1.200px;color:#111;">358425996449808388</div>
<div style="left:1770px;top:507.2px;width:77.5px;height:25.9px;line-height:27.9px;text-align:right;color:#111;">300</div>
<div style="left:1769.4px;top:507.2px;width:1.1px;height:25.9px;background:#ececec;"></div>
<div style="left:1850.8px;top:507.2px;width:1.1px;height:25.9px;background:#ececec;"></div>
<div style="left:25.6px;top:533.1px;width:1865.1px;height:25.9px;background:#fafafa;border-bottom:1px dotted #ddd;"></div>
<div style="left:1.1px;top:533.1px;width:23.8px;height:25.9px;line-height:27.9px;text-align:center;color:#111;">6</div>
<div style="left:26px;top:533.1px;width:45.2px;height:25.9px;line-height:27.9px;padding-left:1.200px;color:#111;">358425996449808388</div>
<div style="left:1770px;top:533.1px;width:77.5px;height:25.9px;line-height:27.9px;text-align:right;color:#111;">300</div>
<div style="left:1769.4px;top:533.1px;width:1.1px;height:25.9px;background:#ececec;"></div>
<div style="left:1850.8px;top:533.1px;width:1.1px;height:25.9px;background:#ececec;"></div>
<div style="left:25.6px;top:559px;width:1865.1px;height:25.9px;background:#fff;border-bottom:1px dotted #ddd;"></div>
<div style="left:1.1px;top:559px;width:23.8px;height:25.9px;line-height:27.9px;text-align:center;color:#111;">7</div>
<div style="left:26px;top:559px;width:45.2px;height:25.9px;line-height:27.9px;padding-left:1.200px;color:#111;">358425996449808388</div>
<div style="left:1770px;top:559px;width:77.5px;height:25.9px;line-height:27.9px;text-align:right;color:#111;">300</div>
<div style="left:1769.4px;top:559px;width:1.1px;height:25.9px;background:#ececec;"></div>
<div style="left:1850.8px;top:559px;width:1.1px;height:25.9px;background:#ececec;"></div>
<div style="left:25.6px;top:584.9px;width:1865.1px;height:25.9px;background:#fafafa;border-bottom:1px dotted #ddd;"></div>
<div style="left:1.1px;top:584.9px;width:23.8px;height:25.9px;line-height:27.9px;text-align:center;color:#111;">8</div>
<div style="left:26px;top:584.9px;width:45.2px;height:25.9px;line-height:27.9px;padding-left:1.200px;color:#111;">358425996449808388</div>
<div style="left:1770px;top:584.9px;width:77.5px;height:25.9px;line-height:27.9px;text-align:right;color:#111;">300</div>
<div style="left:1769.4px;top:584.9px;width:1.1px;height:25.9px;background:#ececec;"></div>
<div style="left:1850.8px;top:584.9px;width:1.1px;height:25.9px;background:#ececec;"></div>
<div style="left:25.6px;top:610.8px;width:1865.1px;height:25.9px;background:#fff;border-bottom:1px dotted #ddd;"></div>
<div style="left:1.1px;top:610.8px;width:23.8px;height:25.9px;line-height:27.9px;text-align:center;color:#111;">9</div>
<div style="left:26px;top:610.8px;width:45.2px;height:25.9px;line-height:27.9px;padding-left:1.200px;color:#111;">358425996449808388</div>
<div style="left:1770px;top:610.8px;width:77.5px;height:25.9px;line-height:27.9px;text-align:right;color:#111;">300</div>
<div style="left:1769.4px;top:610.8px;width:1.1px;height:25.9px;background:#ececec;"></div>
<div style="left:1850.8px;top:610.8px;width:1.1px;height:25.9px;background:#ececec;"></div>
<div style="left:25.6px;top:636.7px;width:1865.1px;height:25.9px;background:#fafafa;border-bottom:1px dotted #ddd;"></div>
<div style="left:1.1px;top:636.7px;width:23.8px;height:25.9px;line-height:27.9px;text-align:center;color:#111;">10</div>
<div style="left:26px;top:636.7px;width:45.2px;height:25.9px;line-height:27.9px;padding-left:1.200px;color:#111;">358425996449808388</div>
<div style="left:1770px;top:636.7px;width:77.5px;height:25.9px;line-height:27.9px;text-align:right;color:#111;">300</div>
<div style="left:1769.4px;top:636.7px;width:1.1px;height:25.9px;background:#ececec;"></div>
<div style="left:1850.8px;top:636.7px;width:1.1px;height:25.9px;background:#ececec;"></div>
<div style="left:25.6px;top:662.6px;width:1865.1px;height:25.9px;background:#fff;border-bottom:1px dotted #ddd;"></div>
<div style="left:1.1px;top:662.6px;width:23.8px;height:25.9px;line-height:27.9px;text-align:center;color:#111;">11</div>
<div style="left:26px;top:662.6px;width:45.2px;height:25.9px;line-height:27.9px;padding-left:1.200px;color:#111;">358425996449808388</div>
<div style="left:1770px;top:662.6px;width:77.5px;height:25.9px;line-height:27.9px;text-align:right;color:#111;">300</div>
<div style="left:1769.4px;top:662.6px;width:1.1px;height:25.9px;background:#ececec;"></div>
<div style="left:1850.8px;top:662.6px;width:1.1px;height:25.9px;background:#ececec;"></div>
<div style="left:25.6px;top:688.5px;width:1865.1px;height:25.9px;background:#fafafa;border-bottom:1px dotted #ddd;"></div>
<div style="left:1.1px;top:688.5px;width:23.8px;height:25.9px;line-height:27.9px;text-align:center;color:#111;">12</div>
<div style="left:26px;top:688.5px;width:45.2px;height:25.9px;line-height:27.9px;padding-left:1.200px;color:#111;">358425996449808388</div>
<div style="left:1770px;top:688.5px;width:77.5px;height:25.9px;line-height:27.9px;text-align:right;color:#111;">300</div>
<div style="left:1769.4px;top:688.5px;width:1.1px;height:25.9px;background:#ececec;"></div>
<div style="left:1850.8px;top:688.5px;width:1.1px;height:25.9px;background:#ececec;"></div>
<div style="left:25.6px;top:714.4px;width:1865.1px;height:25.9px;background:#fff;border-bottom:1px dotted #ddd;"></div>
<div style="left:1.1px;top:714.4px;width:23.8px;height:25.9px;line-height:27.9px;text-align:center;color:#111;">13</div>
<div style="left:26px;top:714.4px;width:45.2px;height:25.9px;line-height:27.9px;padding-left:1.200px;color:#111;">358425996449808388</div>
<div style="left:1770px;top:714.4px;width:77.5px;height:25.9px;line-height:27.9px;text-align:right;color:#111;">300</div>
<div style="left:1769.4px;top:714.4px;width:1.1px;height:25.9px;background:#ececec;"></div>
<div style="left:1850.8px;top:714.4px;width:1.1px;height:25.9px;background:#ececec;"></div>
<div style="left:25.6px;top:740.3px;width:1865.1px;height:25.9px;background:#fafafa;border-bottom:1px dotted #ddd;"></div>
<div style="left:1.1px;top:740.3px;width:23.8px;height:25.9px;line-height:27.9px;text-align:center;color:#111;">14</div>
<div style="left:26px;top:740.3px;width:45.2px;height:25.9px;line-height:27.9px;padding-left:1.200px;color:#111;">358425996449808388</div>
<div style="left:1770px;top:740.3px;width:77.5px;height:25.9px;line-height:27.9px;text-align:right;color:#111;">300</div>
<div style="left:1769.4px;top:740.3px;width:1.1px;height:25.9px;background:#ececec;"></div>
<div style="left:1850.8px;top:740.3px;width:1.1px;height:25.9px;background:#ececec;"></div>
<div style="left:25.6px;top:766.2px;width:1865.1px;height:25.9px;background:#fff;border-bottom:1px dotted #ddd;"></div>
<div style="left:1.1px;top:766.2px;width:23.8px;height:25.9px;line-height:27.9px;text-align:center;color:#111;">15</div>
<div style="left:26px;top:766.2px;width:45.2px;height:25.9px;line-height:27.9px;padding-left:1.200px;color:#111;">358425996449808388</div>
<div style="left:1770px;top:766.2px;width:77.5px;height:25.9px;line-height:27.9px;text-align:right;color:#111;">300</div>
<div style="left:1769.4px;top:766.2px;width:1.1px;height:25.9px;background:#ececec;"></div>
<div style="left:1850.8px;top:766.2px;width:1.1px;height:25.9px;background:#ececec;"></div>
<div style="left:25.6px;top:792.1px;width:1865.1px;height:25.9px;background:#fafafa;border-bottom:1px dotted #ddd;"></div>
<div style="left:1.1px;top:792.1px;width:23.8px;height:25.9px;line-height:27.9px;text-align:center;color:#111;">16</div>
<div style="left:1770px;top:792.1px;width:77.5px;height:25.9px;line-height:27.9px;text-align:right;color:#111;"></div>
<div style="left:1769.4px;top:792.1px;width:1.1px;height:25.9px;background:#ececec;"></div>
<div style="left:1850.8px;top:792.1px;width:1.1px;height:25.9px;background:#ececec;"></div>
<div style="left:25.6px;top:792.1px;width:134.8px;height:25.9px;line-height:27.9px;padding-left:1.200px;letter-spacing:-0.200px;color:#111;font-size:11.400px;">358425995464146946</div>
<div style="left:160.4px;top:792.1px;width:40.9px;height:25.9px;line-height:27.9px;padding-left:3.800px;color:#111;font-size:11.400px;">A001</div>
<div style="left:201.2px;top:792.1px;width:121.8px;height:25.9px;line-height:27.9px;padding-left:3.800px;color:#111;font-size:11.400px;">BKMY27A01</div>
<div style="left:323px;top:792.1px;width:144.9px;height:25.9px;line-height:27.9px;padding-left:3.800px;color:#111;font-size:11.400px;">山地(黄)27#A01-总成</div>
<div style="left:467.9px;top:792.1px;width:40.2px;height:25.9px;line-height:27.9px;padding-left:3.800px;color:#111;font-size:11.400px;">V001</div>
<div style="left:522px;top:792.1px;width:93.2px;height:25.9px;line-height:27.9px;text-align:center;color:#111;font-size:11.400px;">S29</div>
<div style="left:615.1px;top:792.1px;width:44.1px;height:25.9px;line-height:27.9px;padding-left:5.500px;color:#111;font-size:11.400px;">PL生产</div>
<div style="left:659.2px;top:792.1px;width:43px;height:25.9px;line-height:27.9px;padding-left:3.800px;color:#111;font-size:11.400px;">MTO按</div>
<div style="left:702.2px;top:792.1px;width:33.8px;height:25.9px;line-height:27.9px;text-align:center;color:#111;font-size:11.400px;">N</div>
<div style="left:736px;top:792.1px;width:43.2px;height:25.9px;line-height:27.9px;text-align:center;color:#111;font-size:11.400px;">99</div>
<div style="left:779.2px;top:792.1px;width:41.6px;height:25.9px;line-height:27.9px;padding-left:3.800px;color:#111;font-size:11.400px;">SCH已</div>
<div style="left:820.8px;top:792.1px;width:63.3px;height:25.9px;line-height:27.9px;text-align:right;padding-right:3.400px;color:#111;font-size:11.400px;">6000</div>
<div style="left:884.1px;top:792.1px;width:31.5px;height:25.9px;line-height:27.9px;text-align:center;color:#ff69b4;font-size:11.400px;">A</div>
<div style="left:915.6px;top:792.1px;width:57.4px;height:25.9px;line-height:27.9px;text-align:right;padding-right:3.400px;color:#111;font-size:11.400px;">48</div>
<div style="left:973px;top:792.1px;width:128px;height:25.9px;line-height:27.9px;text-align:center;color:#111;font-size:11.400px;">2025/04/15 12:29</div>
<div style="left:1101px;top:792.1px;width:128.7px;height:25.9px;line-height:27.9px;text-align:center;color:#111;font-size:11.400px;">2025/04/15 17:37</div>
<div style="left:1229.7px;top:792.1px;width:66.1px;height:25.9px;line-height:27.9px;text-align:center;color:#111;font-size:11.400px;">05:08</div>
<div style="left:1295.8px;top:792.1px;width:128.7px;height:25.9px;line-height:27.9px;text-align:center;color:#111;font-size:11.400px;">2025/04/15 15:08</div>
<div style="left:1424.5px;top:792.1px;width:56.4px;height:25.9px;line-height:27.9px;text-align:right;padding-right:3.400px;color:#111;font-size:11.400px;">-44</div>
<div style="left:1480.9px;top:792.1px;width:63.8px;height:25.9px;line-height:27.9px;text-align:right;padding-right:3.400px;color:#111;font-size:11.400px;">0</div>
<div style="left:1544.7px;top:792.1px;width:65.6px;height:25.9px;line-height:27.9px;text-align:right;padding-right:3.400px;color:#111;font-size:11.400px;">6000</div>
<div style="left:1610.3px;top:792.1px;width:79.5px;height:25.9px;line-height:27.9px;text-align:center;padding-left:6px;color:#111;font-size:11.400px;">00:08:00</div>
<div style="left:1689.8px;top:792.1px;width:80.2px;height:25.9px;line-height:27.9px;text-align:right;padding-right:3.400px;color:#111;font-size:11.400px;">11000</div>
<div style="left:1770px;top:792.1px;width:81.4px;height:25.9px;line-height:27.9px;text-align:right;padding-right:3.400px;color:#111;font-size:11.400px;">300</div>
<div style="left:159.8px;top:792.1px;width:1.1px;height:25.9px;background:#ececec;"></div>
<div style="left:200.7px;top:792.1px;width:1.1px;height:25.9px;background:#ececec;"></div>
<div style="left:322.5px;top:792.1px;width:1.1px;height:25.9px;background:#ececec;"></div>
<div style="left:467.4px;top:792.1px;width:1.1px;height:25.9px;background:#ececec;"></div>
<div style="left:507.6px;top:792.1px;width:1.1px;height:25.9px;background:#ececec;"></div>
<div style="left:521.4px;top:792.1px;width:1.1px;height:25.9px;background:#ececec;"></div>
<div style="left:614.6px;top:792.1px;width:1.1px;height:25.9px;background:#ececec;"></div>
<div style="left:658.7px;top:792.1px;width:1.1px;height:25.9px;background:#ececec;"></div>
<div style="left:701.7px;top:792.1px;width:1.1px;height:25.9px;background:#ececec;"></div>
<div style="left:735.5px;top:792.1px;width:1.1px;height:25.9px;background:#ececec;"></div>
<div style="left:778.7px;top:792.1px;width:1.1px;height:25.9px;background:#ececec;"></div>
<div style="left:820.3px;top:792.1px;width:1.1px;height:25.9px;background:#ececec;"></div>
<div style="left:883.6px;top:792.1px;width:1.1px;height:25.9px;background:#ececec;"></div>
<div style="left:915px;top:792.1px;width:1.1px;height:25.9px;background:#ececec;"></div>
<div style="left:972.4px;top:792.1px;width:1.1px;height:25.9px;background:#ececec;"></div>
<div style="left:1100.4px;top:792.1px;width:1.1px;height:25.9px;background:#ececec;"></div>
<div style="left:1229.2px;top:792.1px;width:1.1px;height:25.9px;background:#ececec;"></div>
<div style="left:1295.3px;top:792.1px;width:1.1px;height:25.9px;background:#ececec;"></div>
<div style="left:1424px;top:792.1px;width:1.1px;height:25.9px;background:#ececec;"></div>
<div style="left:1480.4px;top:792.1px;width:1.1px;height:25.9px;background:#ececec;"></div>
<div style="left:1544.2px;top:792.1px;width:1.1px;height:25.9px;background:#ececec;"></div>
<div style="left:1609.8px;top:792.1px;width:1.1px;height:25.9px;background:#ececec;"></div>
<div style="left:1689.2px;top:792.1px;width:1.1px;height:25.9px;background:#ececec;"></div>
<div style="left:25.6px;top:818px;width:1865.1px;height:25.9px;background:#fff;border-bottom:1px dotted #ddd;"></div>
<div style="left:1.1px;top:818px;width:23.8px;height:25.9px;line-height:27.9px;text-align:center;color:#111;">17</div>
<div style="left:1770px;top:818px;width:77.5px;height:25.9px;line-height:27.9px;text-align:right;color:#111;"></div>
<div style="left:1769.4px;top:818px;width:1.1px;height:25.9px;background:#ececec;"></div>
<div style="left:1850.8px;top:818px;width:1.1px;height:25.9px;background:#ececec;"></div>
<div style="left:25.6px;top:818px;width:134.8px;height:25.9px;line-height:27.9px;padding-left:1.200px;letter-spacing:-0.200px;color:#111;font-size:11.400px;">358425997045399552</div>
<div style="left:160.4px;top:818px;width:40.9px;height:25.9px;line-height:27.9px;padding-left:3.800px;color:#111;font-size:11.400px;">A001</div>
<div style="left:201.2px;top:818px;width:121.8px;height:25.9px;line-height:27.9px;padding-left:3.800px;color:#111;font-size:11.400px;">BKMR29A01</div>
<div style="left:323px;top:818px;width:144.9px;height:25.9px;line-height:27.9px;padding-left:3.800px;color:#111;font-size:11.400px;">BK山地(红)29#A01</div>
<div style="left:467.9px;top:818px;width:40.2px;height:25.9px;line-height:27.9px;padding-left:3.800px;color:#111;font-size:11.400px;">V001</div>
<div style="left:522px;top:818px;width:93.2px;height:25.9px;line-height:27.9px;text-align:center;color:#111;font-size:11.400px;">M29</div>
<div style="left:615.1px;top:818px;width:44.1px;height:25.9px;line-height:27.9px;padding-left:5.500px;color:#111;font-size:11.400px;">PL生产</div>
<div style="left:659.2px;top:818px;width:43px;height:25.9px;line-height:27.9px;padding-left:3.800px;color:#111;font-size:11.400px;">MTS按</div>
<div style="left:702.2px;top:818px;width:33.8px;height:25.9px;line-height:27.9px;text-align:center;color:#111;font-size:11.400px;">N</div>
<div style="left:736px;top:818px;width:43.2px;height:25.9px;line-height:27.9px;text-align:center;color:#111;font-size:11.400px;">99</div>
<div style="left:779.2px;top:818px;width:41.6px;height:25.9px;line-height:27.9px;padding-left:3.800px;color:#111;font-size:11.400px;">SCH已</div>
<div style="left:820.8px;top:818px;width:63.3px;height:25.9px;line-height:27.9px;text-align:right;padding-right:3.400px;color:#111;font-size:11.400px;">10000</div>
<div style="left:884.1px;top:818px;width:31.5px;height:25.9px;line-height:27.9px;text-align:center;color:#ff69b4;font-size:11.400px;">A</div>
<div style="left:915.6px;top:818px;width:57.4px;height:25.9px;line-height:27.9px;text-align:right;padding-right:3.400px;color:#111;font-size:11.400px;">4</div>
<div style="left:973px;top:818px;width:128px;height:25.9px;line-height:27.9px;text-align:center;color:#111;font-size:11.400px;">2025/04/15 17:37</div>
<div style="left:1101px;top:818px;width:128.7px;height:25.9px;line-height:27.9px;text-align:center;color:#111;font-size:11.400px;">2025/04/16 14:01</div>
<div style="left:1229.7px;top:818px;width:66.1px;height:25.9px;line-height:27.9px;text-align:center;color:#111;font-size:11.400px;">20:24</div>
<div style="left:1295.8px;top:818px;width:128.7px;height:25.9px;line-height:27.9px;text-align:center;color:#111;font-size:11.400px;">2025/04/12 11:54</div>
<div style="left:1424.5px;top:818px;width:56.4px;height:25.9px;line-height:27.9px;text-align:right;padding-right:3.400px;color:#111;font-size:11.400px;">-144</div>
<div style="left:1480.9px;top:818px;width:63.8px;height:25.9px;line-height:27.9px;text-align:right;padding-right:3.400px;color:#111;font-size:11.400px;">0</div>
<div style="left:1544.7px;top:818px;width:65.6px;height:25.9px;line-height:27.9px;text-align:right;padding-right:3.400px;color:#111;font-size:11.400px;">10000</div>
<div style="left:1610.3px;top:818px;width:79.5px;height:25.9px;line-height:27.9px;text-align:center;padding-left:6px;color:#111;font-size:11.400px;">00:04:00</div>
<div style="left:1689.8px;top:818px;width:80.2px;height:25.9px;line-height:27.9px;text-align:right;padding-right:3.400px;color:#111;font-size:11.400px;">8000</div>
<div style="left:1770px;top:818px;width:81.4px;height:25.9px;line-height:27.9px;text-align:right;padding-right:3.400px;color:#111;font-size:11.400px;">300</div>
<div style="left:159.8px;top:818px;width:1.1px;height:25.9px;background:#ececec;"></div>
<div style="left:200.7px;top:818px;width:1.1px;height:25.9px;background:#ececec;"></div>
<div style="left:322.5px;top:818px;width:1.1px;height:25.9px;background:#ececec;"></div>
<div style="left:467.4px;top:818px;width:1.1px;height:25.9px;background:#ececec;"></div>
<div style="left:507.6px;top:818px;width:1.1px;height:25.9px;background:#ececec;"></div>
<div style="left:521.4px;top:818px;width:1.1px;height:25.9px;background:#ececec;"></div>
<div style="left:614.6px;top:818px;width:1.1px;height:25.9px;background:#ececec;"></div>
<div style="left:658.7px;top:818px;width:1.1px;height:25.9px;background:#ececec;"></div>
<div style="left:701.7px;top:818px;width:1.1px;height:25.9px;background:#ececec;"></div>
<div style="left:735.5px;top:818px;width:1.1px;height:25.9px;background:#ececec;"></div>
<div style="left:778.7px;top:818px;width:1.1px;height:25.9px;background:#ececec;"></div>
<div style="left:820.3px;top:818px;width:1.1px;height:25.9px;background:#ececec;"></div>
<div style="left:883.6px;top:818px;width:1.1px;height:25.9px;background:#ececec;"></div>
<div style="left:915px;top:818px;width:1.1px;height:25.9px;background:#ececec;"></div>
<div style="left:972.4px;top:818px;width:1.1px;height:25.9px;background:#ececec;"></div>
<div style="left:1100.4px;top:818px;width:1.1px;height:25.9px;background:#ececec;"></div>
<div style="left:1229.2px;top:818px;width:1.1px;height:25.9px;background:#ececec;"></div>
<div style="left:1295.3px;top:818px;width:1.1px;height:25.9px;background:#ececec;"></div>
<div style="left:1424px;top:818px;width:1.1px;height:25.9px;background:#ececec;"></div>
<div style="left:1480.4px;top:818px;width:1.1px;height:25.9px;background:#ececec;"></div>
<div style="left:1544.2px;top:818px;width:1.1px;height:25.9px;background:#ececec;"></div>
<div style="left:1609.8px;top:818px;width:1.1px;height:25.9px;background:#ececec;"></div>
<div style="left:1689.2px;top:818px;width:1.1px;height:25.9px;background:#ececec;"></div>
<div style="left:25.6px;top:843.9px;width:1865.1px;height:25.9px;background:#ffe48d;border-bottom:1px dotted #ddd;"></div>
<div style="left:1.1px;top:843.9px;width:23.8px;height:25.9px;line-height:27.9px;text-align:center;color:#111;">18</div>
<div style="left:1770px;top:843.9px;width:77.5px;height:25.9px;line-height:27.9px;text-align:right;color:#111;"></div>
<div style="left:1769.4px;top:843.9px;width:1.1px;height:25.9px;background:#ececec;"></div>
<div style="left:1850.8px;top:843.9px;width:1.1px;height:25.9px;background:#ececec;"></div>
<div style="left:25.6px;top:843.9px;width:134.8px;height:25.9px;line-height:27.9px;padding-left:1.200px;letter-spacing:-0.200px;color:#111;font-size:11.400px;">358425996449808388</div>
<div style="left:160.4px;top:843.9px;width:40.9px;height:25.9px;line-height:27.9px;padding-left:3.800px;color:#111;font-size:11.400px;">A001</div>
<div style="left:201.2px;top:843.9px;width:121.8px;height:25.9px;line-height:27.9px;padding-left:3.800px;color:#111;font-size:11.400px;">BKSB27A02</div>
<div style="left:323px;top:843.9px;width:144.9px;height:25.9px;line-height:27.9px;padding-left:3.800px;color:#111;font-size:11.400px;">BK公路(黑)27#A02</div>
<div style="left:467.9px;top:843.9px;width:40.2px;height:25.9px;line-height:27.9px;padding-left:3.800px;color:#111;font-size:11.400px;">V001</div>
<div style="left:522px;top:843.9px;width:93.2px;height:25.9px;line-height:27.9px;text-align:center;color:#111;font-size:11.400px;">S27</div>
<div style="left:615.1px;top:843.9px;width:44.1px;height:25.9px;line-height:27.9px;padding-left:5.500px;color:#111;font-size:11.400px;">PL生产</div>
<div style="left:659.2px;top:843.9px;width:43px;height:25.9px;line-height:27.9px;padding-left:3.800px;color:#111;font-size:11.400px;">MTO按</div>
<div style="left:702.2px;top:843.9px;width:33.8px;height:25.9px;line-height:27.9px;text-align:center;color:#111;font-size:11.400px;">N</div>
<div style="left:736px;top:843.9px;width:43.2px;height:25.9px;line-height:27.9px;text-align:center;color:#111;font-size:11.400px;">99</div>
<div style="left:779.2px;top:843.9px;width:41.6px;height:25.9px;line-height:27.9px;padding-left:3.800px;color:#111;font-size:11.400px;">SCH已</div>
<div style="left:820.8px;top:843.9px;width:63.3px;height:25.9px;line-height:27.9px;text-align:right;padding-right:3.400px;color:#111;font-size:11.400px;">5000</div>
<div style="left:884.1px;top:843.9px;width:31.5px;height:25.9px;line-height:27.9px;text-align:center;color:#ff69b4;font-size:11.400px;">A</div>
<div style="left:915.6px;top:843.9px;width:57.4px;height:25.9px;line-height:27.9px;text-align:right;padding-right:3.400px;color:#111;font-size:11.400px;">0</div>
<div style="left:973px;top:843.9px;width:128px;height:25.9px;line-height:27.9px;text-align:center;color:#111;font-size:11.400px;">2025/04/16 15:28</div>
<div style="left:1101px;top:843.9px;width:128.7px;height:25.9px;line-height:27.9px;text-align:center;color:#111;font-size:11.400px;">2025/04/16 19:42</div>
<div style="left:1229.7px;top:843.9px;width:66.1px;height:25.9px;line-height:27.9px;text-align:center;color:#111;font-size:11.400px;">04:14</div>
<div style="left:1295.8px;top:843.9px;width:128.7px;height:25.9px;line-height:27.9px;text-align:center;color:#111;font-size:11.400px;">2025/04/10 11:54</div>
<div style="left:1424.5px;top:843.9px;width:56.4px;height:25.9px;line-height:27.9px;text-align:right;padding-right:3.400px;color:#111;font-size:11.400px;">-192</div>
<div style="left:1480.9px;top:843.9px;width:63.8px;height:25.9px;line-height:27.9px;text-align:right;padding-right:3.400px;color:#111;font-size:11.400px;">0</div>
<div style="left:1544.7px;top:843.9px;width:65.6px;height:25.9px;line-height:27.9px;text-align:right;padding-right:3.400px;color:#111;font-size:11.400px;">5000</div>
<div style="left:1610.3px;top:843.9px;width:79.5px;height:25.9px;line-height:27.9px;text-align:center;padding-left:6px;color:#111;font-size:11.400px;">00:04:00</div>
<div style="left:1689.8px;top:843.9px;width:80.2px;height:25.9px;line-height:27.9px;text-align:right;padding-right:3.400px;color:#111;font-size:11.400px;">4000</div>
<div style="left:1770px;top:843.9px;width:81.4px;height:25.9px;line-height:27.9px;text-align:right;padding-right:3.400px;color:#111;font-size:11.400px;">300</div>
<div style="left:159.8px;top:843.9px;width:1.1px;height:25.9px;background:#ececec;"></div>
<div style="left:200.7px;top:843.9px;width:1.1px;height:25.9px;background:#ececec;"></div>
<div style="left:322.5px;top:843.9px;width:1.1px;height:25.9px;background:#ececec;"></div>
<div style="left:467.4px;top:843.9px;width:1.1px;height:25.9px;background:#ececec;"></div>
<div style="left:507.6px;top:843.9px;width:1.1px;height:25.9px;background:#ececec;"></div>
<div style="left:521.4px;top:843.9px;width:1.1px;height:25.9px;background:#ececec;"></div>
<div style="left:614.6px;top:843.9px;width:1.1px;height:25.9px;background:#ececec;"></div>
<div style="left:658.7px;top:843.9px;width:1.1px;height:25.9px;background:#ececec;"></div>
<div style="left:701.7px;top:843.9px;width:1.1px;height:25.9px;background:#ececec;"></div>
<div style="left:735.5px;top:843.9px;width:1.1px;height:25.9px;background:#ececec;"></div>
<div style="left:778.7px;top:843.9px;width:1.1px;height:25.9px;background:#ececec;"></div>
<div style="left:820.3px;top:843.9px;width:1.1px;height:25.9px;background:#ececec;"></div>
<div style="left:883.6px;top:843.9px;width:1.1px;height:25.9px;background:#ececec;"></div>
<div style="left:915px;top:843.9px;width:1.1px;height:25.9px;background:#ececec;"></div>
<div style="left:972.4px;top:843.9px;width:1.1px;height:25.9px;background:#ececec;"></div>
<div style="left:1100.4px;top:843.9px;width:1.1px;height:25.9px;background:#ececec;"></div>
<div style="left:1229.2px;top:843.9px;width:1.1px;height:25.9px;background:#ececec;"></div>
<div style="left:1295.3px;top:843.9px;width:1.1px;height:25.9px;background:#ececec;"></div>
<div style="left:1424px;top:843.9px;width:1.1px;height:25.9px;background:#ececec;"></div>
<div style="left:1480.4px;top:843.9px;width:1.1px;height:25.9px;background:#ececec;"></div>
<div style="left:1544.2px;top:843.9px;width:1.1px;height:25.9px;background:#ececec;"></div>
<div style="left:1609.8px;top:843.9px;width:1.1px;height:25.9px;background:#ececec;"></div>
<div style="left:1689.2px;top:843.9px;width:1.1px;height:25.9px;background:#ececec;"></div>
<div style="left:25.6px;top:869.8px;width:1865.1px;height:25.9px;background:#fff;border-bottom:1px dotted #ddd;"></div>
<div style="left:1.1px;top:869.8px;width:23.8px;height:25.9px;line-height:27.9px;text-align:center;color:#111;">19</div>
<div style="left:1770px;top:869.8px;width:77.5px;height:25.9px;line-height:27.9px;text-align:right;color:#111;"></div>
<div style="left:1769.4px;top:869.8px;width:1.1px;height:25.9px;background:#ececec;"></div>
<div style="left:1850.8px;top:869.8px;width:1.1px;height:25.9px;background:#ececec;"></div>
<div style="left:25.6px;top:869.8px;width:134.8px;height:25.9px;line-height:27.9px;padding-left:1.200px;letter-spacing:-0.200px;color:#111;font-size:11.400px;">358425996844072961</div>
<div style="left:160.4px;top:869.8px;width:40.9px;height:25.9px;line-height:27.9px;padding-left:3.800px;color:#111;font-size:11.400px;">A001</div>
<div style="left:201.2px;top:869.8px;width:121.8px;height:25.9px;line-height:27.9px;padding-left:3.800px;color:#111;font-size:11.400px;">BKSB27A01</div>
<div style="left:323px;top:869.8px;width:144.9px;height:25.9px;line-height:27.9px;padding-left:3.800px;color:#111;font-size:11.400px;">公路(黑)27#A01-总成</div>
<div style="left:467.9px;top:869.8px;width:40.2px;height:25.9px;line-height:27.9px;padding-left:3.800px;color:#111;font-size:11.400px;">V001</div>
<div style="left:522px;top:869.8px;width:93.2px;height:25.9px;line-height:27.9px;text-align:center;color:#111;font-size:11.400px;">S29</div>
<div style="left:615.1px;top:869.8px;width:44.1px;height:25.9px;line-height:27.9px;padding-left:5.500px;color:#111;font-size:11.400px;">PL生产</div>
<div style="left:659.2px;top:869.8px;width:43px;height:25.9px;line-height:27.9px;padding-left:3.800px;color:#111;font-size:11.400px;">MTO按</div>
<div style="left:702.2px;top:869.8px;width:33.8px;height:25.9px;line-height:27.9px;text-align:center;color:#111;font-size:11.400px;">N</div>
<div style="left:736px;top:869.8px;width:43.2px;height:25.9px;line-height:27.9px;text-align:center;color:#111;font-size:11.400px;">99</div>
<div style="left:779.2px;top:869.8px;width:41.6px;height:25.9px;line-height:27.9px;padding-left:3.800px;color:#111;font-size:11.400px;">SCH已</div>
<div style="left:820.8px;top:869.8px;width:63.3px;height:25.9px;line-height:27.9px;text-align:right;padding-right:3.400px;color:#111;font-size:11.400px;">10000</div>
<div style="left:884.1px;top:869.8px;width:31.5px;height:25.9px;line-height:27.9px;text-align:center;color:#ff69b4;font-size:11.400px;">A</div>
<div style="left:915.6px;top:869.8px;width:57.4px;height:25.9px;line-height:27.9px;text-align:right;padding-right:3.400px;color:#111;font-size:11.400px;">4</div>
<div style="left:973px;top:869.8px;width:128px;height:25.9px;line-height:27.9px;text-align:center;color:#111;font-size:11.400px;">2025/04/16 19:42</div>
<div style="left:1101px;top:869.8px;width:128.7px;height:25.9px;line-height:27.9px;text-align:center;color:#111;font-size:11.400px;">2025/04/17 16:04</div>
<div style="left:1229.7px;top:869.8px;width:66.1px;height:25.9px;line-height:27.9px;text-align:center;color:#111;font-size:11.400px;">20:22</div>
<div style="left:1295.8px;top:869.8px;width:128.7px;height:25.9px;line-height:27.9px;text-align:center;color:#111;font-size:11.400px;">2025/04/12 11:54</div>
<div style="left:1424.5px;top:869.8px;width:56.4px;height:25.9px;line-height:27.9px;text-align:right;padding-right:3.400px;color:#111;font-size:11.400px;">-148</div>
<div style="left:1480.9px;top:869.8px;width:63.8px;height:25.9px;line-height:27.9px;text-align:right;padding-right:3.400px;color:#111;font-size:11.400px;">0</div>
<div style="left:1544.7px;top:869.8px;width:65.6px;height:25.9px;line-height:27.9px;text-align:right;padding-right:3.400px;color:#111;font-size:11.400px;">10000</div>
<div style="left:1610.3px;top:869.8px;width:79.5px;height:25.9px;line-height:27.9px;text-align:center;padding-left:6px;color:#111;font-size:11.400px;">00:02:00</div>
<div style="left:1689.8px;top:869.8px;width:80.2px;height:25.9px;line-height:27.9px;text-align:right;padding-right:3.400px;color:#111;font-size:11.400px;">5000</div>
<div style="left:1770px;top:869.8px;width:81.4px;height:25.9px;line-height:27.9px;text-align:right;padding-right:3.400px;color:#111;font-size:11.400px;">300</div>
<div style="left:159.8px;top:869.8px;width:1.1px;height:25.9px;background:#ececec;"></div>
<div style="left:200.7px;top:869.8px;width:1.1px;height:25.9px;background:#ececec;"></div>
<div style="left:322.5px;top:869.8px;width:1.1px;height:25.9px;background:#ececec;"></div>
<div style="left:467.4px;top:869.8px;width:1.1px;height:25.9px;background:#ececec;"></div>
<div style="left:507.6px;top:869.8px;width:1.1px;height:25.9px;background:#ececec;"></div>
<div style="left:521.4px;top:869.8px;width:1.1px;height:25.9px;background:#ececec;"></div>
<div style="left:614.6px;top:869.8px;width:1.1px;height:25.9px;background:#ececec;"></div>
<div style="left:658.7px;top:869.8px;width:1.1px;height:25.9px;background:#ececec;"></div>
<div style="left:701.7px;top:869.8px;width:1.1px;height:25.9px;background:#ececec;"></div>
<div style="left:735.5px;top:869.8px;width:1.1px;height:25.9px;background:#ececec;"></div>
<div style="left:778.7px;top:869.8px;width:1.1px;height:25.9px;background:#ececec;"></div>
<div style="left:820.3px;top:869.8px;width:1.1px;height:25.9px;background:#ececec;"></div>
<div style="left:883.6px;top:869.8px;width:1.1px;height:25.9px;background:#ececec;"></div>
<div style="left:915px;top:869.8px;width:1.1px;height:25.9px;background:#ececec;"></div>
<div style="left:972.4px;top:869.8px;width:1.1px;height:25.9px;background:#ececec;"></div>
<div style="left:1100.4px;top:869.8px;width:1.1px;height:25.9px;background:#ececec;"></div>
<div style="left:1229.2px;top:869.8px;width:1.1px;height:25.9px;background:#ececec;"></div>
<div style="left:1295.3px;top:869.8px;width:1.1px;height:25.9px;background:#ececec;"></div>
<div style="left:1424px;top:869.8px;width:1.1px;height:25.9px;background:#ececec;"></div>
<div style="left:1480.4px;top:869.8px;width:1.1px;height:25.9px;background:#ececec;"></div>
<div style="left:1544.2px;top:869.8px;width:1.1px;height:25.9px;background:#ececec;"></div>
<div style="left:1609.8px;top:869.8px;width:1.1px;height:25.9px;background:#ececec;"></div>
<div style="left:1689.2px;top:869.8px;width:1.1px;height:25.9px;background:#ececec;"></div>
<div style="left:25.6px;top:895.7px;width:1865.1px;height:25.9px;background:#fafafa;border-bottom:1px dotted #ddd;"></div>
<div style="left:1.1px;top:895.7px;width:23.8px;height:25.9px;line-height:27.9px;text-align:center;color:#111;">20</div>
<div style="left:1770px;top:895.7px;width:77.5px;height:25.9px;line-height:27.9px;text-align:right;color:#111;"></div>
<div style="left:1769.4px;top:895.7px;width:1.1px;height:25.9px;background:#ececec;"></div>
<div style="left:1850.8px;top:895.7px;width:1.1px;height:25.9px;background:#ececec;"></div>
<div style="left:159.8px;top:895.7px;width:1.1px;height:25.9px;background:#ececec;"></div>
<div style="left:200.7px;top:895.7px;width:1.1px;height:25.9px;background:#ececec;"></div>
<div style="left:322.5px;top:895.7px;width:1.1px;height:25.9px;background:#ececec;"></div>
<div style="left:467.4px;top:895.7px;width:1.1px;height:25.9px;background:#ececec;"></div>
<div style="left:507.6px;top:895.7px;width:1.1px;height:25.9px;background:#ececec;"></div>
<div style="left:521.4px;top:895.7px;width:1.1px;height:25.9px;background:#ececec;"></div>
<div style="left:614.6px;top:895.7px;width:1.1px;height:25.9px;background:#ececec;"></div>
<div style="left:658.7px;top:895.7px;width:1.1px;height:25.9px;background:#ececec;"></div>
<div style="left:701.7px;top:895.7px;width:1.1px;height:25.9px;background:#ececec;"></div>
<div style="left:735.5px;top:895.7px;width:1.1px;height:25.9px;background:#ececec;"></div>
<div style="left:778.7px;top:895.7px;width:1.1px;height:25.9px;background:#ececec;"></div>
<div style="left:820.3px;top:895.7px;width:1.1px;height:25.9px;background:#ececec;"></div>
<div style="left:883.6px;top:895.7px;width:1.1px;height:25.9px;background:#ececec;"></div>
<div style="left:915px;top:895.7px;width:1.1px;height:25.9px;background:#ececec;"></div>
<div style="left:972.4px;top:895.7px;width:1.1px;height:25.9px;background:#ececec;"></div>
<div style="left:1100.4px;top:895.7px;width:1.1px;height:25.9px;background:#ececec;"></div>
<div style="left:1229.2px;top:895.7px;width:1.1px;height:25.9px;background:#ececec;"></div>
<div style="left:1295.3px;top:895.7px;width:1.1px;height:25.9px;background:#ececec;"></div>
<div style="left:1424px;top:895.7px;width:1.1px;height:25.9px;background:#ececec;"></div>
<div style="left:1480.4px;top:895.7px;width:1.1px;height:25.9px;background:#ececec;"></div>
<div style="left:1544.2px;top:895.7px;width:1.1px;height:25.9px;background:#ececec;"></div>
<div style="left:1609.8px;top:895.7px;width:1.1px;height:25.9px;background:#ececec;"></div>
<div style="left:1689.2px;top:895.7px;width:1.1px;height:25.9px;background:#ececec;"></div>
<div style="left:508.1px;top:792.1px;width:13.9px;height:25.9px;background:#f6b26b;"></div>
<div style="left:508.1px;top:792.1px;width:13.9px;height:25.9px;line-height:27.9px;padding-left:4px;color:#5d4a2a;font-size:11.400px;">#f</div>
<div style="left:915.6px;top:792.1px;width:57.4px;height:25.9px;background:#b4f8b4;"></div>
<div style="left:1424.5px;top:792.1px;width:56.4px;height:25.9px;background:#ffec00;"></div>
<div style="left:508.1px;top:818px;width:13.9px;height:25.9px;background:#4a8a08;"></div>
<div style="left:508.1px;top:818px;width:13.9px;height:25.9px;line-height:27.9px;padding-left:4px;color:#5d4a2a;font-size:11.400px;">#f</div>
<div style="left:915.6px;top:818px;width:57.4px;height:25.9px;background:#b4f8b4;"></div>
<div style="left:1424.5px;top:818px;width:56.4px;height:25.9px;background:#ffec00;"></div>
<div style="left:508.1px;top:843.9px;width:13.9px;height:25.9px;background:#e69138;"></div>
<div style="left:508.1px;top:843.9px;width:13.9px;height:25.9px;line-height:27.9px;padding-left:4px;color:#5d4a2a;font-size:11.400px;">#f</div>
<div style="left:915.6px;top:843.9px;width:57.4px;height:25.9px;background:#b4f8b4;"></div>
<div style="left:1424.5px;top:843.9px;width:56.4px;height:25.9px;background:#ffec00;"></div>
<div style="left:508.1px;top:869.8px;width:13.9px;height:25.9px;background:#f6b26b;"></div>
<div style="left:508.1px;top:869.8px;width:13.9px;height:25.9px;line-height:27.9px;padding-left:4px;color:#5d4a2a;font-size:11.400px;">#f</div>
<div style="left:915.6px;top:869.8px;width:57.4px;height:25.9px;background:#b4f8b4;"></div>
<div style="left:1424.5px;top:869.8px;width:56.4px;height:25.9px;background:#ffec00;"></div>
<div style="left:508.1px;top:895.7px;width:13.9px;height:7.8px;background:#f6b26b;"></div>
<div style="left:915.6px;top:895.7px;width:57.4px;height:7.8px;background:#b4f8b4;"></div>
<div style="left:1424.5px;top:895.7px;width:56.4px;height:7.8px;background:#ffec00;"></div>
<div style="left:915.6px;top:792.1px;width:57.4px;height:25.9px;line-height:27.9px;text-align:right;padding-right:5px;color:#111;font-size:11.400px;">48</div>
<div style="left:1424.5px;top:792.1px;width:56.4px;height:25.9px;line-height:27.9px;text-align:right;padding-right:2.400px;color:#111;font-size:11.400px;">-44</div>
<div style="left:915.6px;top:818px;width:57.4px;height:25.9px;line-height:27.9px;text-align:right;padding-right:5px;color:#111;font-size:11.400px;">4</div>
<div style="left:1424.5px;top:818px;width:56.4px;height:25.9px;line-height:27.9px;text-align:right;padding-right:2.400px;color:#111;font-size:11.400px;">-144</div>
<div style="left:915.6px;top:843.9px;width:57.4px;height:25.9px;line-height:27.9px;text-align:right;padding-right:5px;color:#111;font-size:11.400px;">0</div>
<div style="left:1424.5px;top:843.9px;width:56.4px;height:25.9px;line-height:27.9px;text-align:right;padding-right:2.400px;color:#111;font-size:11.400px;">-192</div>
<div style="left:915.6px;top:869.8px;width:57.4px;height:25.9px;line-height:27.9px;text-align:right;padding-right:5px;color:#111;font-size:11.400px;">4</div>
<div style="left:1424.5px;top:869.8px;width:56.4px;height:25.9px;line-height:27.9px;text-align:right;padding-right:2.400px;color:#111;font-size:11.400px;">-148</div>
<div style="left:25.6px;top:903.5px;width:1865.1px;height:22.8px;background:#fafafa;"></div>
<svg style="position:absolute;left:34.3px;top:907.7px;width:8.2px;height:14.9px" viewBox="0 0 6 10"><path d="M6 0L0 5l6 5z" fill="#7a7a7a"/></svg>
<div style="left:135.1px;top:908.3px;width:1337.8px;height:13.9px;background:#8b8b8b;border-radius:8px;"></div>
<svg style="position:absolute;left:1874.1px;top:907.7px;width:8.2px;height:14.9px" viewBox="0 0 6 10"><path d="M0 0l6 5-6 5z" fill="#7a7a7a"/></svg>
<div style="left:1890.7px;top:369.6px;width:29.3px;height:557px;background:#fff;"></div>
<div style="left:1890.7px;top:369.6px;width:29.3px;height:34px;background:linear-gradient(#fafafa,#ededed);border-bottom:1px solid #ddd;"></div>
<div style="left:1770px;top:369.6px;width:81.4px;height:34px;line-height:35.9px;text-align:center;color:#333;">节拍(S/100)</div>
<div style="left:1851.4px;top:369.6px;width:68.6px;height:34px;line-height:35.9px;padding-left:7.500px;color:#333;">额定时间(分)</div>
<div style="left:1769.4px;top:369.6px;width:1.1px;height:34px;background:#d9d9d9;"></div>
<div style="left:1850.8px;top:369.6px;width:1.1px;height:34px;background:#d9d9d9;"></div>
<svg style="position:absolute;left:1895.8px;top:413.3px;width:14.9px;height:8.2px" viewBox="0 0 10 6"><path d="M0 6L5 0l5 6z" fill="#7a7a7a"/></svg>
<div style="left:1897.2px;top:432.9px;width:14.6px;height:328px;background:#8b8b8b;border-radius:8px;"></div>
<svg style="position:absolute;left:1895.8px;top:883.9px;width:14.9px;height:8.2px" viewBox="0 0 10 6"><path d="M0 0h10L5 6z" fill="#7a7a7a"/></svg>
<div style="left:1915.6px;top:27.4px;width:1.1px;height:900.3px;background:#c3d6f1;"></div>
<div style="left:1916.6px;top:27.4px;width:3.4px;height:900.3px;background:#f1f6fe;"></div>
<div style="left:1890.7px;top:926.6px;width:26px;height:1.1px;background:#95b8e7;"></div>
<div style="left:0px;top:927.3px;width:1920px;height:29.2px;background:#efefef;"></div>
<div style="left:4.4px;top:930.7px;width:208.9px;height:25.8px;line-height:27.7px;color:#333;font-size:9.800px;">【固定/解固】操作完成</div>
<div style="left:641.2px;top:930.7px;width:496.5px;height:25.8px;line-height:27.7px;color:#333;font-size:9.800px;">BK_Asm_01装配Assembly-线V01：26（已排26/未排0）总处理时间：15天0时20分</div>
<div style="left:1278.9px;top:930.7px;width:143.3px;height:25.8px;line-height:27.7px;color:#333;font-size:9.800px;">排单总数：158</div>
<div style="left:1751.1px;top:271.6px;width:53.9px;height:30.2px;background:#fdd49a;border-radius:0 16px 16px 0;"></div>
<div style="left:1769.4px;top:272.4px;width:35px;height:29.2px;line-height:31.1px;color:#fff;font-size:16.500px;">00</div>
<div style="left:40px;top:265.4px;width:1726.4px;height:525.3px;background:linear-gradient(#eff5ff 0,#e0ecff 20%);background:#e4eeff;border:1px solid #95b8e7;border-radius:5px;box-shadow:0 0 3px rgba(120,150,200,.35);"></div>
<div class="b" style="left:45.5px;top:267.6px;width:487.8px;height:22.2px;line-height:24.2px;color:#0e2d5f;letter-spacing:-0.300px;">工单号 【1358425996449808388】</div>
<div style="left:1705.2px;top:271.1px;width:12.8px;height:13px;background:linear-gradient(#a9c8f4,#7faae8);border-radius:2.500px;"><svg viewBox="0 0 10 10" style="position:absolute;left:0;top:0;width:100%;height:100%"><path d="M2.500 6.500L5 3.500l2.500 3z" fill="#fff"/></svg></div>
<div style="left:1719.6px;top:271.1px;width:12.8px;height:13px;background:linear-gradient(#a9c8f4,#7faae8);border-radius:2.500px;"><svg viewBox="0 0 10 10" style="position:absolute;left:0;top:0;width:100%;height:100%"><path d="M2.500 6.500h5" stroke="#fff" stroke-width="1.500"/></svg></div>
<div style="left:1733.9px;top:271.1px;width:12.8px;height:13px;background:linear-gradient(#a9c8f4,#7faae8);border-radius:2.500px;"><svg viewBox="0 0 10 10" style="position:absolute;left:0;top:0;width:100%;height:100%"><rect x="2.500" y="3" width="5" height="4" fill="none" stroke="#fff" stroke-width="1.200"/></svg></div>
<div style="left:1748.2px;top:271.1px;width:12.8px;height:13px;background:linear-gradient(#e89a86,#dc7659);border-radius:2.500px;"><svg viewBox="0 0 10 10" style="position:absolute;left:0;top:0;width:100%;height:100%"><path d="M3 3l4 4M7 3l-4 4" stroke="#fff" stroke-width="1.500"/></svg></div>
<div style="left:44.8px;top:290.8px;width:1715.9px;height:494.6px;background:#fff;border:1px solid #95b8e7;"></div>
<div style="left:45.9px;top:291.9px;width:1713.8px;height:26.8px;background:linear-gradient(#fafafa,#ededed);border-bottom:1px solid #ddd;"></div>
<div style="left:45.9px;top:318.8px;width:1546.3px;height:23.3px;border-bottom:1px dotted #ddd;"></div>
<div style="left:45.9px;top:291.9px;width:96.4px;height:26.8px;line-height:28.8px;padding-left:4px;color:#333;">工单号</div>
<div style="left:45.9px;top:318.8px;width:96.4px;height:23.3px;line-height:25.2px;padding-left:4px;color:#111;">1358425996449808388</div>
<div style="left:141.7px;top:291.9px;width:1.1px;height:26.8px;background:#d9d9d9;"></div>
<div style="left:141.7px;top:318.8px;width:1.1px;height:23.3px;background:#ececec;"></div>
<div style="left:142.2px;top:291.9px;width:112.9px;height:26.8px;line-height:28.8px;padding-left:4px;color:#333;">成品号</div>
<div style="left:142.2px;top:318.8px;width:112.9px;height:23.3px;line-height:25.2px;padding-left:4px;color:#111;">BKSB27A02</div>
<div style="left:254.6px;top:291.9px;width:1.1px;height:26.8px;background:#d9d9d9;"></div>
<div style="left:254.6px;top:318.8px;width:1.1px;height:23.3px;background:#ececec;"></div>
<div style="left:255.1px;top:291.9px;width:112.9px;height:26.8px;line-height:28.8px;padding-left:4px;color:#333;">成品名称</div>
<div style="left:255.1px;top:318.8px;width:112.9px;height:23.3px;line-height:25.2px;padding-left:4px;color:#111;">BK公路(黑)27#A02</div>
<div style="left:367.5px;top:291.9px;width:1.1px;height:26.8px;background:#d9d9d9;"></div>
<div style="left:367.5px;top:318.8px;width:1.1px;height:23.3px;background:#ececec;"></div>
<div style="left:368px;top:291.9px;width:49.2px;height:26.8px;line-height:28.8px;padding-left:4px;color:#333;">版本</div>
<div style="left:368px;top:318.8px;width:49.2px;height:23.3px;line-height:25.2px;padding-left:4px;color:#111;">V001</div>
<div style="left:416.7px;top:291.9px;width:1.1px;height:26.8px;background:#d9d9d9;"></div>
<div style="left:416.7px;top:318.8px;width:1.1px;height:23.3px;background:#ececec;"></div>
<div style="left:417.2px;top:291.9px;width:43.6px;height:26.8px;line-height:28.8px;text-align:center;color:#333;">型号</div>
<div style="left:417.2px;top:318.8px;width:43.6px;height:23.3px;line-height:25.2px;text-align:center;color:#111;">S27</div>
<div style="left:460.3px;top:291.9px;width:1.1px;height:26.8px;background:#d9d9d9;"></div>
<div style="left:460.3px;top:318.8px;width:1.1px;height:23.3px;background:#ececec;"></div>
<div style="left:460.8px;top:291.9px;width:51.2px;height:26.8px;line-height:28.8px;padding-left:4px;color:#333;">类型</div>
<div style="left:460.8px;top:318.8px;width:51.2px;height:23.3px;line-height:25.2px;padding-left:4px;color:#111;">PL</div>
<div style="left:511.5px;top:291.9px;width:1.1px;height:26.8px;background:#d9d9d9;"></div>
<div style="left:511.5px;top:318.8px;width:1.1px;height:23.3px;background:#ececec;"></div>
<div style="left:512px;top:291.9px;width:24px;height:26.8px;line-height:28.8px;padding-left:4px;color:#333;">ABC</div>
<div style="left:512px;top:318.8px;width:24px;height:23.3px;line-height:25.2px;padding-left:4px;color:#111;">A</div>
<div style="left:535.5px;top:291.9px;width:1.1px;height:26.8px;background:#d9d9d9;"></div>
<div style="left:535.5px;top:318.8px;width:1.1px;height:23.3px;background:#ececec;"></div>
<div style="left:536px;top:291.9px;width:23.5px;height:26.8px;line-height:28.8px;padding-left:4px;color:#333;">FIFI</div>
<div style="left:536px;top:318.8px;width:23.5px;height:23.3px;line-height:25.2px;padding-left:4px;color:#111;">0</div>
<div style="left:558.9px;top:291.9px;width:1.1px;height:26.8px;background:#d9d9d9;"></div>
<div style="left:558.9px;top:318.8px;width:1.1px;height:23.3px;background:#ececec;"></div>
<div style="left:559.5px;top:291.9px;width:48.5px;height:26.8px;line-height:28.8px;padding-left:4px;color:#333;">细别</div>
<div style="left:559.5px;top:318.8px;width:48.5px;height:23.3px;line-height:25.2px;padding-left:4px;color:#111;">MTO</div>
<div style="left:607.5px;top:291.9px;width:1.1px;height:26.8px;background:#d9d9d9;"></div>
<div style="left:607.5px;top:318.8px;width:1.1px;height:23.3px;background:#ececec;"></div>
<div style="left:608px;top:291.9px;width:49.1px;height:26.8px;line-height:28.8px;padding-left:4px;color:#333;">优先级</div>
<div style="left:608px;top:318.8px;width:49.1px;height:23.3px;line-height:25.2px;padding-left:4px;color:#111;">99</div>
<div style="left:656.5px;top:291.9px;width:1.1px;height:26.8px;background:#d9d9d9;"></div>
<div style="left:656.5px;top:318.8px;width:1.1px;height:23.3px;background:#ececec;"></div>
<div style="left:657.1px;top:291.9px;width:48.2px;height:26.8px;line-height:28.8px;padding-left:4px;color:#333;">状态</div>
<div style="left:657.1px;top:318.8px;width:48.2px;height:23.3px;line-height:25.2px;padding-left:4px;color:#111;">CRE</div>
<div style="left:704.7px;top:291.9px;width:1.1px;height:26.8px;background:#d9d9d9;"></div>
<div style="left:704.7px;top:318.8px;width:1.1px;height:23.3px;background:#ececec;"></div>
<div style="left:705.2px;top:291.9px;width:80px;height:26.8px;line-height:28.8px;text-align:right;padding-right:3.500px;color:#333;">工单数量</div>
<div style="left:705.2px;top:318.8px;width:80px;height:23.3px;line-height:25.2px;text-align:right;padding-right:3.500px;color:#111;">5000</div>
<div style="left:784.7px;top:291.9px;width:1.1px;height:26.8px;background:#d9d9d9;"></div>
<div style="left:784.7px;top:318.8px;width:1.1px;height:23.3px;background:#ececec;"></div>
<div style="left:785.2px;top:291.9px;width:113.8px;height:26.8px;line-height:28.8px;padding-left:4px;color:#333;">开始时间</div>
<div style="left:785.2px;top:318.8px;width:113.8px;height:23.3px;line-height:25.2px;padding-left:4px;color:#111;">2025/04/16 15:28</div>
<div style="left:898.5px;top:291.9px;width:1.1px;height:26.8px;background:#d9d9d9;"></div>
<div style="left:898.5px;top:318.8px;width:1.1px;height:23.3px;background:#ececec;"></div>
<div style="left:899px;top:291.9px;width:113.1px;height:26.8px;line-height:28.8px;padding-left:4px;color:#333;">结束时间</div>
<div style="left:899px;top:318.8px;width:113.1px;height:23.3px;line-height:25.2px;padding-left:4px;color:#111;">2025/04/17 12:42</div>
<div style="left:1011.6px;top:291.9px;width:1.1px;height:26.8px;background:#d9d9d9;"></div>
<div style="left:1011.6px;top:318.8px;width:1.1px;height:23.3px;background:#ececec;"></div>
<div style="left:1012.1px;top:291.9px;width:81.2px;height:26.8px;line-height:28.8px;text-align:center;color:#333;">处理时长</div>
<div style="left:1012.1px;top:318.8px;width:81.2px;height:23.3px;line-height:25.2px;text-align:center;color:#111;">21:14</div>
<div style="left:1092.8px;top:291.9px;width:1.1px;height:26.8px;background:#d9d9d9;"></div>
<div style="left:1092.8px;top:318.8px;width:1.1px;height:23.3px;background:#ececec;"></div>
<div style="left:1093.3px;top:291.9px;width:47.5px;height:26.8px;line-height:28.8px;padding-left:4px;color:#333;">收货时间</div>
<div style="left:1093.3px;top:318.8px;width:47.5px;height:23.3px;line-height:25.2px;padding-left:4px;color:#111;">1</div>
<div style="left:1140.3px;top:291.9px;width:1.1px;height:26.8px;background:#d9d9d9;"></div>
<div style="left:1140.3px;top:318.8px;width:1.1px;height:23.3px;background:#ececec;"></div>
<div style="left:1140.8px;top:291.9px;width:31.3px;height:26.8px;line-height:28.8px;padding-left:4px;color:#333;">虚拟?</div>
<div style="left:1140.8px;top:318.8px;width:31.3px;height:23.3px;line-height:25.2px;padding-left:4px;color:#111;">N</div>
<div style="left:1171.6px;top:291.9px;width:1.1px;height:26.8px;background:#d9d9d9;"></div>
<div style="left:1171.6px;top:318.8px;width:1.1px;height:23.3px;background:#ececec;"></div>
<div style="left:1172.1px;top:291.9px;width:48.7px;height:26.8px;line-height:28.8px;padding-left:4px;color:#333;">虚拟分钟</div>
<div style="left:1172.1px;top:318.8px;width:48.7px;height:23.3px;line-height:25.2px;padding-left:4px;color:#111;">0</div>
<div style="left:1220.3px;top:291.9px;width:1.1px;height:26.8px;background:#d9d9d9;"></div>
<div style="left:1220.3px;top:318.8px;width:1.1px;height:23.3px;background:#ececec;"></div>
<div style="left:1220.8px;top:291.9px;width:112.5px;height:26.8px;line-height:28.8px;padding-left:4px;color:#333;">工单可用日期</div>
<div style="left:1220.8px;top:318.8px;width:112.5px;height:23.3px;line-height:25.2px;padding-left:4px;color:#111;">2025/04/18 12:42</div>
<div style="left:1332.8px;top:291.9px;width:1.1px;height:26.8px;background:#d9d9d9;"></div>
<div style="left:1332.8px;top:318.8px;width:1.1px;height:23.3px;background:#ececec;"></div>
<div style="left:1333.3px;top:291.9px;width:112.5px;height:26.8px;line-height:28.8px;padding-left:4px;color:#333;">工单需求时间</div>
<div style="left:1333.3px;top:318.8px;width:112.5px;height:23.3px;line-height:25.2px;padding-left:4px;color:#111;">2025/04/10 11:54</div>
<div style="left:1445.3px;top:291.9px;width:1.1px;height:26.8px;background:#d9d9d9;"></div>
<div style="left:1445.3px;top:318.8px;width:1.1px;height:23.3px;background:#ececec;"></div>
<div style="left:1445.9px;top:291.9px;width:146.3px;height:26.8px;line-height:28.8px;padding-left:4px;color:#333;">备注</div>
<div style="left:1591.6px;top:291.9px;width:1.1px;height:26.8px;background:#d9d9d9;"></div>
<div style="left:1591.6px;top:318.8px;width:1.1px;height:23.3px;background:#ececec;"></div>
<div style="left:45.9px;top:403.9px;width:1713.8px;height:29.2px;background:#e0ecff;border-top:1px solid #95b8e7;border-bottom:1px solid #95b8e7;"></div>
<div style="left:49.8px;top:407.5px;width:38px;height:25.2px;background:linear-gradient(#eff5ff,#e0ecff);border:1.300px solid #95b8e7;border-bottom:0;border-radius:5px 5px 0 0;"></div>
<div style="left:49.8px;top:408.2px;width:38px;height:24.5px;line-height:26.5px;text-align:center;color:#0e2d5f;">工序</div>
<div style="left:92.4px;top:407.5px;width:78.6px;height:26.1px;background:#fff;border:1.300px solid #95b8e7;border-bottom:1px solid #fff;border-radius:5px 5px 0 0;"></div>
<div class="b" style="left:92.4px;top:408.2px;width:78.6px;height:24.5px;line-height:26.5px;text-align:center;color:#0e2d5f;">BOM料齐套</div>
<div style="left:175.6px;top:407.5px;width:83.2px;height:25.2px;background:linear-gradient(#eff5ff,#e0ecff);border:1.300px solid #95b8e7;border-bottom:0;border-radius:5px 5px 0 0;"></div>
<div style="left:175.6px;top:408.2px;width:83.2px;height:24.5px;line-height:26.5px;text-align:center;color:#0e2d5f;">订单交付情况</div>
<div style="left:45.9px;top:433.6px;width:1713.8px;height:24.7px;background:linear-gradient(#fafafa,#ededed);border-bottom:1px solid #ddd;"></div>
<div style="left:45.9px;top:433.6px;width:48.7px;height:24.7px;line-height:26.7px;text-align:right;padding-right:3.400px;color:#333;">订单状态</div>
<div style="left:94px;top:433.6px;width:1.1px;height:24.7px;background:#d9d9d9;"></div>
<div style="left:94.6px;top:433.6px;width:47.6px;height:24.7px;line-height:26.7px;padding-left:3.400px;color:#333;">料延迟(H)</div>
<div style="left:141.7px;top:433.6px;width:1.1px;height:24.7px;background:#d9d9d9;"></div>
<div style="left:142.2px;top:433.6px;width:112.9px;height:24.7px;line-height:26.7px;padding-left:3.400px;color:#333;">料号<svg viewBox="0 0 8 12" style="display:inline-block;width:7px;height:11px;margin-left:4px;vertical-align:-1px"><path d="M4 1L7 5H1zM4 11L1 7h6z" fill="#cfcfcf"/></svg></div>
<div style="left:254.6px;top:433.6px;width:1.1px;height:24.7px;background:#d9d9d9;"></div>
<div style="left:255.1px;top:433.6px;width:112.9px;height:24.7px;line-height:26.7px;padding-left:3.400px;color:#333;">物料名称</div>
<div style="left:367.5px;top:433.6px;width:1.1px;height:24.7px;background:#d9d9d9;"></div>
<div style="left:368px;top:433.6px;width:64.9px;height:24.7px;line-height:26.7px;padding-left:3.400px;color:#333;">计划员</div>
<div style="left:432.4px;top:433.6px;width:1.1px;height:24.7px;background:#d9d9d9;"></div>
<div style="left:432.9px;top:433.6px;width:26.3px;height:24.7px;line-height:26.7px;padding-left:3.400px;color:#333;">类型</div>
<div style="left:458.7px;top:433.6px;width:1.1px;height:24.7px;background:#d9d9d9;"></div>
<div style="left:459.2px;top:433.6px;width:24.4px;height:24.7px;line-height:26.7px;padding-left:3.400px;color:#333;">ABC</div>
<div style="left:483px;top:433.6px;width:1.1px;height:24.7px;background:#d9d9d9;"></div>
<div style="left:483.6px;top:433.6px;width:26.7px;height:24.7px;line-height:26.7px;padding-left:3.400px;color:#333;">先进</div>
<div style="left:509.7px;top:433.6px;width:1.1px;height:24.7px;background:#d9d9d9;"></div>
<div style="left:510.2px;top:433.6px;width:46.8px;height:24.7px;line-height:26.7px;text-align:right;padding-right:3.400px;color:#333;">交期(D)</div>
<div style="left:556.4px;top:433.6px;width:1.1px;height:24.7px;background:#d9d9d9;"></div>
<div style="left:557px;top:433.6px;width:94.9px;height:24.7px;line-height:26.7px;text-align:center;color:#333;">交期日<svg viewBox="0 0 8 12" style="display:inline-block;width:7px;height:11px;margin-left:4px;vertical-align:-1px"><path d="M4 1L7 5H1zM4 11L1 7h6z" fill="#cfcfcf"/></svg></div>
<div style="left:651.4px;top:433.6px;width:1.1px;height:24.7px;background:#d9d9d9;"></div>
<div style="left:651.9px;top:433.6px;width:34.3px;height:24.7px;line-height:26.7px;text-align:right;padding-right:3.400px;color:#333;">比率</div>
<div style="left:685.7px;top:433.6px;width:1.1px;height:24.7px;background:#d9d9d9;"></div>
<div style="left:686.2px;top:433.6px;width:65.2px;height:24.7px;line-height:26.7px;padding-left:3.400px;color:#333;">需求号<svg viewBox="0 0 8 12" style="display:inline-block;width:7px;height:11px;margin-left:4px;vertical-align:-1px"><path d="M4 1L7 5H1zM4 11L1 7h6z" fill="#cfcfcf"/></svg></div>
<div style="left:750.9px;top:433.6px;width:1.1px;height:24.7px;background:#d9d9d9;"></div>
<div style="left:751.5px;top:433.6px;width:48.5px;height:24.7px;line-height:26.7px;padding-left:3.400px;color:#333;">工序项目</div>
<div style="left:799.5px;top:433.6px;width:1.1px;height:24.7px;background:#d9d9d9;"></div>
<div style="left:800px;top:433.6px;width:24.9px;height:24.7px;line-height:26.7px;padding-left:3.400px;color:#333;">类型</div>
<div style="left:824.4px;top:433.6px;width:1.1px;height:24.7px;background:#d9d9d9;"></div>
<div style="left:824.9px;top:433.6px;width:80px;height:24.7px;line-height:26.7px;padding-left:3.400px;color:#333;">工作中心<svg viewBox="0 0 8 12" style="display:inline-block;width:7px;height:11px;margin-left:4px;vertical-align:-1px"><path d="M4 1L7 5H1zM4 11L1 7h6z" fill="#cfcfcf"/></svg></div>
<div style="left:904.4px;top:433.6px;width:1.1px;height:24.7px;background:#d9d9d9;"></div>
<div style="left:904.9px;top:433.6px;width:33.2px;height:24.7px;line-height:26.7px;padding-left:3.400px;color:#333;">MTS/</div>
<div style="left:937.6px;top:433.6px;width:1.1px;height:24.7px;background:#d9d9d9;"></div>
<div style="left:938.1px;top:433.6px;width:112px;height:24.7px;line-height:26.7px;padding-left:3.400px;color:#333;">需求日期/开工时间<svg viewBox="0 0 8 12" style="display:inline-block;width:7px;height:11px;margin-left:4px;vertical-align:-1px"><path d="M4 1L7 5H1zM4 11L1 7h6z" fill="#cfcfcf"/></svg></div>
<div style="left:1049.6px;top:433.6px;width:1.1px;height:24.7px;background:#d9d9d9;"></div>
<div style="left:1050.1px;top:433.6px;width:64px;height:24.7px;line-height:26.7px;text-align:right;padding-right:3.400px;color:#333;">需求数量</div>
<div style="left:1113.6px;top:433.6px;width:1.1px;height:24.7px;background:#d9d9d9;"></div>
<div style="left:1114.1px;top:433.6px;width:64px;height:24.7px;line-height:26.7px;text-align:right;padding-right:3.400px;color:#333;">（交货-需求）</div>
<div style="left:1177.6px;top:433.6px;width:1.1px;height:24.7px;background:#d9d9d9;"></div>
<div style="left:1178.1px;top:433.6px;width:66.3px;height:24.7px;line-height:26.7px;text-align:right;padding-right:3.400px;color:#333;">匹配差量</div>
<div style="left:1243.9px;top:433.6px;width:1.1px;height:24.7px;background:#d9d9d9;"></div>
<div style="left:1244.4px;top:433.6px;width:31.3px;height:24.7px;line-height:26.7px;text-align:right;padding-right:3.400px;color:#333;">交货f</div>
<div style="left:1275.2px;top:433.6px;width:1.1px;height:24.7px;background:#d9d9d9;"></div>
<div style="left:1275.7px;top:433.6px;width:81.2px;height:24.7px;line-height:26.7px;padding-left:3.400px;color:#333;">供应号<svg viewBox="0 0 8 12" style="display:inline-block;width:7px;height:11px;margin-left:4px;vertical-align:-1px"><path d="M4 1L7 5H1zM4 11L1 7h6z" fill="#cfcfcf"/></svg></div>
<div style="left:1356.4px;top:433.6px;width:1.1px;height:24.7px;background:#d9d9d9;"></div>
<div style="left:1357px;top:433.6px;width:23.8px;height:24.7px;line-height:26.7px;padding-left:3.400px;color:#333;">类型</div>
<div style="left:1380.3px;top:433.6px;width:1.1px;height:24.7px;background:#d9d9d9;"></div>
<div style="left:1380.8px;top:433.6px;width:65.1px;height:24.7px;line-height:26.7px;text-align:right;padding-right:3.400px;color:#333;">可用数量</div>
<div style="left:1445.3px;top:433.6px;width:1.1px;height:24.7px;background:#d9d9d9;"></div>
<div style="left:1445.9px;top:433.6px;width:113.2px;height:24.7px;line-height:26.7px;padding-left:3.400px;color:#333;">可用日期<svg viewBox="0 0 8 12" style="display:inline-block;width:7px;height:11px;margin-left:4px;vertical-align:-1px"><path d="M4 1L7 5H1zM4 11L1 7h6z" fill="#cfcfcf"/></svg></div>
<div style="left:1558.6px;top:433.6px;width:1.1px;height:24.7px;background:#d9d9d9;"></div>
<div style="left:1559.1px;top:433.6px;width:63.8px;height:24.7px;line-height:26.7px;text-align:right;padding-right:3.400px;color:#333;">匹配数量</div>
<div style="left:1622.4px;top:433.6px;width:1.1px;height:24.7px;background:#d9d9d9;"></div>
<div style="left:1622.9px;top:433.6px;width:65.6px;height:24.7px;line-height:26.7px;padding-left:3.400px;color:#333;">余量</div>
<div style="left:1688px;top:433.6px;width:1.1px;height:24.7px;background:#d9d9d9;"></div>
<div style="left:1688.5px;top:433.6px;width:67px;height:24.7px;line-height:26.7px;padding-left:3.400px;color:#333;">匹配总和(需 /</div>
<div style="left:1755px;top:433.6px;width:1.1px;height:24.7px;background:#d9d9d9;"></div>
<div style="left:45.9px;top:458.3px;width:1713.8px;height:26px;background:#fff;border-bottom:1px dotted #ddd;"></div>
<div style="left:45.9px;top:458.3px;width:48.7px;height:26px;background:#40dcc3;"></div>
<div style="left:94.6px;top:458.3px;width:47.6px;height:26px;background:#b4f8b4;"></div>
<div style="left:45.9px;top:458.3px;width:48.7px;height:26px;line-height:27.9px;text-align:right;padding-right:3.400px;color:#111;">Y</div>
<div style="left:94.6px;top:458.3px;width:47.6px;height:26px;line-height:27.9px;padding-left:3.400px;color:#111;">51</div>
<div style="left:142.2px;top:458.3px;width:112.9px;height:26px;line-height:27.9px;padding-left:3.400px;color:#111;">BC-CBC03</div>
<div style="left:254.6px;top:458.3px;width:1.1px;height:26px;background:#ececec;"></div>
<div style="left:255.1px;top:458.3px;width:112.9px;height:26px;line-height:27.9px;padding-left:3.400px;color:#111;">公路(车把)#C03-配件</div>
<div style="left:367.5px;top:458.3px;width:1.1px;height:26px;background:#ececec;"></div>
<div style="left:368px;top:458.3px;width:64.9px;height:26px;line-height:27.9px;padding-left:3.400px;color:#111;">Part</div>
<div style="left:432.4px;top:458.3px;width:1.1px;height:26px;background:#ececec;"></div>
<div style="left:432.9px;top:458.3px;width:26.3px;height:26px;line-height:27.9px;padding-left:3.400px;color:#111;">F</div>
<div style="left:458.7px;top:458.3px;width:1.1px;height:26px;background:#ececec;"></div>
<div style="left:459.2px;top:458.3px;width:24.4px;height:26px;line-height:27.9px;padding-left:3.400px;color:#ffc21a;">B</div>
<div style="left:483px;top:458.3px;width:1.1px;height:26px;background:#ececec;"></div>
<div style="left:483.6px;top:458.3px;width:26.7px;height:26px;line-height:27.9px;padding-left:3.400px;color:#111;">0</div>
<div style="left:509.7px;top:458.3px;width:1.1px;height:26px;background:#ececec;"></div>
<div style="left:510.2px;top:458.3px;width:46.8px;height:26px;line-height:27.9px;text-align:right;padding-right:3.400px;color:#111;">30</div>
<div style="left:556.4px;top:458.3px;width:1.1px;height:26px;background:#ececec;"></div>
<div style="left:557px;top:458.3px;width:94.9px;height:26px;line-height:27.9px;text-align:center;color:#111;">2025-05-06</div>
<div style="left:651.4px;top:458.3px;width:1.1px;height:26px;background:#ececec;"></div>
<div style="left:651.9px;top:458.3px;width:34.3px;height:26px;line-height:27.9px;text-align:right;padding-right:3.400px;color:#111;">1.0</div>
<div style="left:685.7px;top:458.3px;width:1.1px;height:26px;background:#ececec;"></div>
<div style="left:686.2px;top:458.3px;width:65.2px;height:26px;line-height:27.9px;padding-left:3.400px;color:#111;">1358425996</div>
<div style="left:750.9px;top:458.3px;width:1.1px;height:26px;background:#ececec;"></div>
<div style="left:751.5px;top:458.3px;width:48.5px;height:26px;line-height:27.9px;padding-left:3.400px;color:#111;">A001</div>
<div style="left:799.5px;top:458.3px;width:1.1px;height:26px;background:#ececec;"></div>
<div style="left:800px;top:458.3px;width:24.9px;height:26px;line-height:27.9px;padding-left:3.400px;color:#111;">DM</div>
<div style="left:824.4px;top:458.3px;width:1.1px;height:26px;background:#ececec;"></div>
<div style="left:824.9px;top:458.3px;width:80px;height:26px;line-height:27.9px;padding-left:3.400px;color:#111;">BK_Asm_01</div>
<div style="left:904.4px;top:458.3px;width:1.1px;height:26px;background:#ececec;"></div>
<div style="left:904.9px;top:458.3px;width:33.2px;height:26px;line-height:27.9px;padding-left:3.400px;color:#111;">MTS</div>
<div style="left:937.6px;top:458.3px;width:1.1px;height:26px;background:#ececec;"></div>
<div style="left:938.1px;top:458.3px;width:112px;height:26px;line-height:27.9px;padding-left:3.400px;color:#111;">2025-04-16 15:28:</div>
<div style="left:1049.6px;top:458.3px;width:1.1px;height:26px;background:#ececec;"></div>
<div style="left:1050.1px;top:458.3px;width:64px;height:26px;line-height:27.9px;text-align:right;padding-right:3.400px;color:#111;">-5000</div>
<div style="left:1113.6px;top:458.3px;width:1.1px;height:26px;background:#ececec;"></div>
<div style="left:1114.1px;top:458.3px;width:64px;height:26px;line-height:27.9px;text-align:right;padding-right:3.400px;color:#111;">-20</div>
<div style="left:1177.6px;top:458.3px;width:1.1px;height:26px;background:#ececec;"></div>
<div style="left:1178.1px;top:458.3px;width:66.3px;height:26px;line-height:27.9px;text-align:right;padding-right:3.400px;color:#111;">0</div>
<div style="left:1243.9px;top:458.3px;width:1.1px;height:26px;background:#ececec;"></div>
<div style="left:1244.4px;top:458.3px;width:31.3px;height:26px;line-height:27.9px;text-align:right;padding-right:3.400px;color:#111;">NO</div>
<div style="left:1275.2px;top:458.3px;width:1.1px;height:26px;background:#ececec;"></div>
<div style="left:1275.7px;top:458.3px;width:81.2px;height:26px;line-height:27.9px;padding-left:3.400px;color:#111;">13518137189</div>
<div style="left:1356.4px;top:458.3px;width:1.1px;height:26px;background:#ececec;"></div>
<div style="left:1357px;top:458.3px;width:23.8px;height:26px;line-height:27.9px;padding-left:3.400px;color:#111;">PO</div>
<div style="left:1380.3px;top:458.3px;width:1.1px;height:26px;background:#ececec;"></div>
<div style="left:1380.8px;top:458.3px;width:65.1px;height:26px;line-height:27.9px;text-align:right;padding-right:3.400px;color:#111;">7000</div>
<div style="left:1445.3px;top:458.3px;width:1.1px;height:26px;background:#ececec;"></div>
<div style="left:1445.9px;top:458.3px;width:113.2px;height:26px;line-height:27.9px;padding-left:3.400px;color:#111;">2025-04-14 11:54:</div>
<div style="left:1558.6px;top:458.3px;width:1.1px;height:26px;background:#ececec;"></div>
<div style="left:1559.1px;top:458.3px;width:63.8px;height:26px;line-height:27.9px;text-align:right;padding-right:3.400px;color:#111;">5000</div>
<div style="left:1622.4px;top:458.3px;width:1.1px;height:26px;background:#ececec;"></div>
<div style="left:1622.9px;top:458.3px;width:65.6px;height:26px;line-height:27.9px;padding-left:3.400px;color:#111;">800</div>
<div style="left:1688px;top:458.3px;width:1.1px;height:26px;background:#ececec;"></div>
<div style="left:1688.5px;top:458.3px;width:67px;height:26px;line-height:27.9px;padding-left:3.400px;color:#111;">5000</div>
<div style="left:1755px;top:458.3px;width:1.1px;height:26px;background:#ececec;"></div>
<div style="left:1756.1px;top:458.3px;width:3.6px;height:26px;line-height:27.9px;color:#111;">5</div>
<div style="left:45.9px;top:484.3px;width:1713.8px;height:26px;background:#fafafa;border-bottom:1px dotted #ddd;"></div>
<div style="left:45.9px;top:484.3px;width:48.7px;height:26px;background:#40dcc3;"></div>
<div style="left:94.6px;top:484.3px;width:47.6px;height:26px;background:#b4f8b4;"></div>
<div style="left:45.9px;top:484.3px;width:48.7px;height:26px;line-height:27.9px;text-align:right;padding-right:3.400px;color:#111;">Y</div>
<div style="left:94.6px;top:484.3px;width:47.6px;height:26px;line-height:27.9px;padding-left:3.400px;color:#111;">71</div>
<div style="left:142.2px;top:484.3px;width:112.9px;height:26px;line-height:27.9px;padding-left:3.400px;color:#111;">BC-JDA01</div>
<div style="left:254.6px;top:484.3px;width:1.1px;height:26px;background:#ececec;"></div>
<div style="left:255.1px;top:484.3px;width:112.9px;height:26px;line-height:27.9px;padding-left:3.400px;color:#111;">山地(脚蹬)#A01-配件</div>
<div style="left:367.5px;top:484.3px;width:1.1px;height:26px;background:#ececec;"></div>
<div style="left:368px;top:484.3px;width:64.9px;height:26px;line-height:27.9px;padding-left:3.400px;color:#111;">Part</div>
<div style="left:432.4px;top:484.3px;width:1.1px;height:26px;background:#ececec;"></div>
<div style="left:432.9px;top:484.3px;width:26.3px;height:26px;line-height:27.9px;padding-left:3.400px;color:#111;">F</div>
<div style="left:458.7px;top:484.3px;width:1.1px;height:26px;background:#ececec;"></div>
<div style="left:459.2px;top:484.3px;width:24.4px;height:26px;line-height:27.9px;padding-left:3.400px;color:#ffc21a;">B</div>
<div style="left:483px;top:484.3px;width:1.1px;height:26px;background:#ececec;"></div>
<div style="left:483.6px;top:484.3px;width:26.7px;height:26px;line-height:27.9px;padding-left:3.400px;color:#111;">0</div>
<div style="left:509.7px;top:484.3px;width:1.1px;height:26px;background:#ececec;"></div>
<div style="left:510.2px;top:484.3px;width:46.8px;height:26px;line-height:27.9px;text-align:right;padding-right:3.400px;color:#111;">10</div>
<div style="left:556.4px;top:484.3px;width:1.1px;height:26px;background:#ececec;"></div>
<div style="left:557px;top:484.3px;width:94.9px;height:26px;line-height:27.9px;text-align:center;color:#111;">2025-04-16</div>
<div style="left:651.4px;top:484.3px;width:1.1px;height:26px;background:#ececec;"></div>
<div style="left:651.9px;top:484.3px;width:34.3px;height:26px;line-height:27.9px;text-align:right;padding-right:3.400px;color:#111;">10.0</div>
<div style="left:685.7px;top:484.3px;width:1.1px;height:26px;background:#ececec;"></div>
<div style="left:686.2px;top:484.3px;width:65.2px;height:26px;line-height:27.9px;padding-left:3.400px;color:#111;">1358425996</div>
<div style="left:750.9px;top:484.3px;width:1.1px;height:26px;background:#ececec;"></div>
<div style="left:751.5px;top:484.3px;width:48.5px;height:26px;line-height:27.9px;padding-left:3.400px;color:#111;">A003</div>
<div style="left:799.5px;top:484.3px;width:1.1px;height:26px;background:#ececec;"></div>
<div style="left:800px;top:484.3px;width:24.9px;height:26px;line-height:27.9px;padding-left:3.400px;color:#111;">DM</div>
<div style="left:824.4px;top:484.3px;width:1.1px;height:26px;background:#ececec;"></div>
<div style="left:824.9px;top:484.3px;width:80px;height:26px;line-height:27.9px;padding-left:3.400px;color:#111;">Bk_Onl_01</div>
<div style="left:904.4px;top:484.3px;width:1.1px;height:26px;background:#ececec;"></div>
<div style="left:904.9px;top:484.3px;width:33.2px;height:26px;line-height:27.9px;padding-left:3.400px;color:#111;">MTS</div>
<div style="left:937.6px;top:484.3px;width:1.1px;height:26px;background:#ececec;"></div>
<div style="left:938.1px;top:484.3px;width:112px;height:26px;line-height:27.9px;padding-left:3.400px;color:#111;">2025-04-17 11:02:</div>
<div style="left:1049.6px;top:484.3px;width:1.1px;height:26px;background:#ececec;"></div>
<div style="left:1050.1px;top:484.3px;width:64px;height:26px;line-height:27.9px;text-align:right;padding-right:3.400px;color:#111;">-50000</div>
<div style="left:1113.6px;top:484.3px;width:1.1px;height:26px;background:#ececec;"></div>
<div style="left:1114.1px;top:484.3px;width:64px;height:26px;line-height:27.9px;text-align:right;padding-right:3.400px;color:#111;">1</div>
<div style="left:1177.6px;top:484.3px;width:1.1px;height:26px;background:#ececec;"></div>
<div style="left:1178.1px;top:484.3px;width:66.3px;height:26px;line-height:27.9px;text-align:right;padding-right:3.400px;color:#111;">0</div>
<div style="left:1243.9px;top:484.3px;width:1.1px;height:26px;background:#ececec;"></div>
<div style="left:1244.4px;top:484.3px;width:31.3px;height:26px;line-height:27.9px;text-align:right;padding-right:3.400px;color:#111;">YES</div>
<div style="left:1275.2px;top:484.3px;width:1.1px;height:26px;background:#ececec;"></div>
<div style="left:1275.7px;top:484.3px;width:81.2px;height:26px;line-height:27.9px;padding-left:3.400px;color:#111;">13518137194</div>
<div style="left:1356.4px;top:484.3px;width:1.1px;height:26px;background:#ececec;"></div>
<div style="left:1357px;top:484.3px;width:23.8px;height:26px;line-height:27.9px;padding-left:3.400px;color:#111;">PO</div>
<div style="left:1380.3px;top:484.3px;width:1.1px;height:26px;background:#ececec;"></div>
<div style="left:1380.8px;top:484.3px;width:65.1px;height:26px;line-height:27.9px;text-align:right;padding-right:3.400px;color:#111;">150000</div>
<div style="left:1445.3px;top:484.3px;width:1.1px;height:26px;background:#ececec;"></div>
<div style="left:1445.9px;top:484.3px;width:113.2px;height:26px;line-height:27.9px;padding-left:3.400px;color:#111;">2025-04-14 11:54:</div>
<div style="left:1558.6px;top:484.3px;width:1.1px;height:26px;background:#ececec;"></div>
<div style="left:1559.1px;top:484.3px;width:63.8px;height:26px;line-height:27.9px;text-align:right;padding-right:3.400px;color:#111;">50000</div>
<div style="left:1622.4px;top:484.3px;width:1.1px;height:26px;background:#ececec;"></div>
<div style="left:1622.9px;top:484.3px;width:65.6px;height:26px;line-height:27.9px;padding-left:3.400px;color:#111;">65000</div>
<div style="left:1688px;top:484.3px;width:1.1px;height:26px;background:#ececec;"></div>
<div style="left:1688.5px;top:484.3px;width:67px;height:26px;line-height:27.9px;padding-left:3.400px;color:#111;">50000</div>
<div style="left:1755px;top:484.3px;width:1.1px;height:26px;background:#ececec;"></div>
<div style="left:1756.1px;top:484.3px;width:3.6px;height:26px;line-height:27.9px;color:#111;">5</div>
<div style="left:45.9px;top:510.2px;width:1713.8px;height:26px;background:#fff;border-bottom:1px dotted #ddd;"></div>
<div style="left:45.9px;top:510.2px;width:48.7px;height:26px;background:#40dcc3;"></div>
<div style="left:94.6px;top:510.2px;width:47.6px;height:26px;background:#b4f8b4;"></div>
<div style="left:45.9px;top:510.2px;width:48.7px;height:26px;line-height:27.9px;text-align:right;padding-right:3.400px;color:#111;">Y</div>
<div style="left:94.6px;top:510.2px;width:47.6px;height:26px;line-height:27.9px;padding-left:3.400px;color:#111;">55</div>
<div style="left:142.2px;top:510.2px;width:112.9px;height:26px;line-height:27.9px;padding-left:3.400px;color:#111;">BC-LTA01</div>
<div style="left:254.6px;top:510.2px;width:1.1px;height:26px;background:#ececec;"></div>
<div style="left:255.1px;top:510.2px;width:112.9px;height:26px;line-height:27.9px;padding-left:3.400px;color:#111;">山地(链条)#A01-配件</div>
<div style="left:367.5px;top:510.2px;width:1.1px;height:26px;background:#ececec;"></div>
<div style="left:368px;top:510.2px;width:64.9px;height:26px;line-height:27.9px;padding-left:3.400px;color:#111;">Part</div>
<div style="left:432.4px;top:510.2px;width:1.1px;height:26px;background:#ececec;"></div>
<div style="left:432.9px;top:510.2px;width:26.3px;height:26px;line-height:27.9px;padding-left:3.400px;color:#111;">F</div>
<div style="left:458.7px;top:510.2px;width:1.1px;height:26px;background:#ececec;"></div>
<div style="left:459.2px;top:510.2px;width:24.4px;height:26px;line-height:27.9px;padding-left:3.400px;color:#ffc21a;">B</div>
<div style="left:483px;top:510.2px;width:1.1px;height:26px;background:#ececec;"></div>
<div style="left:483.6px;top:510.2px;width:26.7px;height:26px;line-height:27.9px;padding-left:3.400px;color:#111;">0</div>
<div style="left:509.7px;top:510.2px;width:1.1px;height:26px;background:#ececec;"></div>
<div style="left:510.2px;top:510.2px;width:46.8px;height:26px;line-height:27.9px;text-align:right;padding-right:3.400px;color:#111;">10</div>
<div style="left:556.4px;top:510.2px;width:1.1px;height:26px;background:#ececec;"></div>
<div style="left:557px;top:510.2px;width:94.9px;height:26px;line-height:27.9px;text-align:center;color:#111;">2025-04-16</div>
<div style="left:651.4px;top:510.2px;width:1.1px;height:26px;background:#ececec;"></div>
<div style="left:651.9px;top:510.2px;width:34.3px;height:26px;line-height:27.9px;text-align:right;padding-right:3.400px;color:#111;">1.0</div>
<div style="left:685.7px;top:510.2px;width:1.1px;height:26px;background:#ececec;"></div>
<div style="left:686.2px;top:510.2px;width:65.2px;height:26px;line-height:27.9px;padding-left:3.400px;color:#111;">1358425996</div>
<div style="left:750.9px;top:510.2px;width:1.1px;height:26px;background:#ececec;"></div>
<div style="left:751.5px;top:510.2px;width:48.5px;height:26px;line-height:27.9px;padding-left:3.400px;color:#111;">A002</div>
<div style="left:799.5px;top:510.2px;width:1.1px;height:26px;background:#ececec;"></div>
<div style="left:800px;top:510.2px;width:24.9px;height:26px;line-height:27.9px;padding-left:3.400px;color:#111;">DM</div>
<div style="left:824.4px;top:510.2px;width:1.1px;height:26px;background:#ececec;"></div>
<div style="left:824.9px;top:510.2px;width:80px;height:26px;line-height:27.9px;padding-left:3.400px;color:#111;">BK_Tun_01</div>
<div style="left:904.4px;top:510.2px;width:1.1px;height:26px;background:#ececec;"></div>
<div style="left:904.9px;top:510.2px;width:33.2px;height:26px;line-height:27.9px;padding-left:3.400px;color:#111;">MTS</div>
<div style="left:937.6px;top:510.2px;width:1.1px;height:26px;background:#ececec;"></div>
<div style="left:938.1px;top:510.2px;width:112px;height:26px;line-height:27.9px;padding-left:3.400px;color:#111;">2025-04-16 19:42:</div>
<div style="left:1049.6px;top:510.2px;width:1.1px;height:26px;background:#ececec;"></div>
<div style="left:1050.1px;top:510.2px;width:64px;height:26px;line-height:27.9px;text-align:right;padding-right:3.400px;color:#111;">-5000</div>
<div style="left:1113.6px;top:510.2px;width:1.1px;height:26px;background:#ececec;"></div>
<div style="left:1114.1px;top:510.2px;width:64px;height:26px;line-height:27.9px;text-align:right;padding-right:3.400px;color:#111;">0</div>
<div style="left:1177.6px;top:510.2px;width:1.1px;height:26px;background:#ececec;"></div>
<div style="left:1178.1px;top:510.2px;width:66.3px;height:26px;line-height:27.9px;text-align:right;padding-right:3.400px;color:#111;">0</div>
<div style="left:1243.9px;top:510.2px;width:1.1px;height:26px;background:#ececec;"></div>
<div style="left:1244.4px;top:510.2px;width:31.3px;height:26px;line-height:27.9px;text-align:right;padding-right:3.400px;color:#111;">YES</div>
<div style="left:1275.2px;top:510.2px;width:1.1px;height:26px;background:#ececec;"></div>
<div style="left:1275.7px;top:510.2px;width:81.2px;height:26px;line-height:27.9px;padding-left:3.400px;color:#111;">13518137192</div>
<div style="left:1356.4px;top:510.2px;width:1.1px;height:26px;background:#ececec;"></div>
<div style="left:1357px;top:510.2px;width:23.8px;height:26px;line-height:27.9px;padding-left:3.400px;color:#111;">PO</div>
<div style="left:1380.3px;top:510.2px;width:1.1px;height:26px;background:#ececec;"></div>
<div style="left:1380.8px;top:510.2px;width:65.1px;height:26px;line-height:27.9px;text-align:right;padding-right:3.400px;color:#111;">5000</div>
<div style="left:1445.3px;top:510.2px;width:1.1px;height:26px;background:#ececec;"></div>
<div style="left:1445.9px;top:510.2px;width:113.2px;height:26px;line-height:27.9px;padding-left:3.400px;color:#111;">2025-04-14 11:54:</div>
<div style="left:1558.6px;top:510.2px;width:1.1px;height:26px;background:#ececec;"></div>
<div style="left:1559.1px;top:510.2px;width:63.8px;height:26px;line-height:27.9px;text-align:right;padding-right:3.400px;color:#111;">60</div>
<div style="left:1622.4px;top:510.2px;width:1.1px;height:26px;background:#ececec;"></div>
<div style="left:1622.9px;top:510.2px;width:65.6px;height:26px;line-height:27.9px;padding-left:3.400px;color:#111;">-4940</div>
<div style="left:1688px;top:510.2px;width:1.1px;height:26px;background:#ececec;"></div>
<div style="left:1688.5px;top:510.2px;width:67px;height:26px;line-height:27.9px;padding-left:3.400px;color:#111;">5000</div>
<div style="left:1755px;top:510.2px;width:1.1px;height:26px;background:#ececec;"></div>
<div style="left:1756.1px;top:510.2px;width:3.6px;height:26px;line-height:27.9px;color:#111;">5</div>
<div style="left:45.9px;top:536.2px;width:1713.8px;height:26px;background:#fafafa;border-bottom:1px dotted #ddd;"></div>
<div style="left:45.9px;top:536.2px;width:48.7px;height:26px;background:#40dcc3;"></div>
<div style="left:94.6px;top:536.2px;width:47.6px;height:26px;background:#b4f8b4;"></div>
<div style="left:45.9px;top:536.2px;width:48.7px;height:26px;line-height:27.9px;text-align:right;padding-right:3.400px;color:#111;">Y</div>
<div style="left:94.6px;top:536.2px;width:47.6px;height:26px;line-height:27.9px;padding-left:3.400px;color:#111;">55</div>
<div style="left:142.2px;top:536.2px;width:112.9px;height:26px;line-height:27.9px;padding-left:3.400px;color:#111;">BC-LTA01</div>
<div style="left:254.6px;top:536.2px;width:1.1px;height:26px;background:#ececec;"></div>
<div style="left:255.1px;top:536.2px;width:112.9px;height:26px;line-height:27.9px;padding-left:3.400px;color:#111;">山地(链条)#A01-配件</div>
<div style="left:367.5px;top:536.2px;width:1.1px;height:26px;background:#ececec;"></div>
<div style="left:368px;top:536.2px;width:64.9px;height:26px;line-height:27.9px;padding-left:3.400px;color:#111;">Part</div>
<div style="left:432.4px;top:536.2px;width:1.1px;height:26px;background:#ececec;"></div>
<div style="left:432.9px;top:536.2px;width:26.3px;height:26px;line-height:27.9px;padding-left:3.400px;color:#111;">F</div>
<div style="left:458.7px;top:536.2px;width:1.1px;height:26px;background:#ececec;"></div>
<div style="left:459.2px;top:536.2px;width:24.4px;height:26px;line-height:27.9px;padding-left:3.400px;color:#ffc21a;">B</div>
<div style="left:483px;top:536.2px;width:1.1px;height:26px;background:#ececec;"></div>
<div style="left:483.6px;top:536.2px;width:26.7px;height:26px;line-height:27.9px;padding-left:3.400px;color:#111;">0</div>
<div style="left:509.7px;top:536.2px;width:1.1px;height:26px;background:#ececec;"></div>
<div style="left:510.2px;top:536.2px;width:46.8px;height:26px;line-height:27.9px;text-align:right;padding-right:3.400px;color:#111;">10</div>
<div style="left:556.4px;top:536.2px;width:1.1px;height:26px;background:#ececec;"></div>
<div style="left:557px;top:536.2px;width:94.9px;height:26px;line-height:27.9px;text-align:center;color:#111;">2025-04-16</div>
<div style="left:651.4px;top:536.2px;width:1.1px;height:26px;background:#ececec;"></div>
<div style="left:651.9px;top:536.2px;width:34.3px;height:26px;line-height:27.9px;text-align:right;padding-right:3.400px;color:#111;">1.0</div>
<div style="left:685.7px;top:536.2px;width:1.1px;height:26px;background:#ececec;"></div>
<div style="left:686.2px;top:536.2px;width:65.2px;height:26px;line-height:27.9px;padding-left:3.400px;color:#111;">1358425996</div>
<div style="left:750.9px;top:536.2px;width:1.1px;height:26px;background:#ececec;"></div>
<div style="left:751.5px;top:536.2px;width:48.5px;height:26px;line-height:27.9px;padding-left:3.400px;color:#111;">A002</div>
<div style="left:799.5px;top:536.2px;width:1.1px;height:26px;background:#ececec;"></div>
<div style="left:800px;top:536.2px;width:24.9px;height:26px;line-height:27.9px;padding-left:3.400px;color:#111;">DM</div>
<div style="left:824.4px;top:536.2px;width:1.1px;height:26px;background:#ececec;"></div>
<div style="left:824.9px;top:536.2px;width:80px;height:26px;line-height:27.9px;padding-left:3.400px;color:#111;">BK_Tun_01</div>
<div style="left:904.4px;top:536.2px;width:1.1px;height:26px;background:#ececec;"></div>
<div style="left:904.9px;top:536.2px;width:33.2px;height:26px;line-height:27.9px;padding-left:3.400px;color:#111;">MTS</div>
<div style="left:937.6px;top:536.2px;width:1.1px;height:26px;background:#ececec;"></div>
<div style="left:938.1px;top:536.2px;width:112px;height:26px;line-height:27.9px;padding-left:3.400px;color:#111;">2025-04-16 19:42:</div>
<div style="left:1049.6px;top:536.2px;width:1.1px;height:26px;background:#ececec;"></div>
<div style="left:1050.1px;top:536.2px;width:64px;height:26px;line-height:27.9px;text-align:right;padding-right:3.400px;color:#111;">-5000</div>
<div style="left:1113.6px;top:536.2px;width:1.1px;height:26px;background:#ececec;"></div>
<div style="left:1114.1px;top:536.2px;width:64px;height:26px;line-height:27.9px;text-align:right;padding-right:3.400px;color:#111;">0</div>
<div style="left:1177.6px;top:536.2px;width:1.1px;height:26px;background:#ececec;"></div>
<div style="left:1178.1px;top:536.2px;width:66.3px;height:26px;line-height:27.9px;text-align:right;padding-right:3.400px;color:#111;">0</div>
<div style="left:1243.9px;top:536.2px;width:1.1px;height:26px;background:#ececec;"></div>
<div style="left:1244.4px;top:536.2px;width:31.3px;height:26px;line-height:27.9px;text-align:right;padding-right:3.400px;color:#111;">YES</div>
<div style="left:1275.2px;top:536.2px;width:1.1px;height:26px;background:#ececec;"></div>
<div style="left:1275.7px;top:536.2px;width:81.2px;height:26px;line-height:27.9px;padding-left:3.400px;color:#111;">13518137192</div>
<div style="left:1356.4px;top:536.2px;width:1.1px;height:26px;background:#ececec;"></div>
<div style="left:1357px;top:536.2px;width:23.8px;height:26px;line-height:27.9px;padding-left:3.400px;color:#111;">PO</div>
<div style="left:1380.3px;top:536.2px;width:1.1px;height:26px;background:#ececec;"></div>
<div style="left:1380.8px;top:536.2px;width:65.1px;height:26px;line-height:27.9px;text-align:right;padding-right:3.400px;color:#111;">7000</div>
<div style="left:1445.3px;top:536.2px;width:1.1px;height:26px;background:#ececec;"></div>
<div style="left:1445.9px;top:536.2px;width:113.2px;height:26px;line-height:27.9px;padding-left:3.400px;color:#111;">2025-04-14 11:54:</div>
<div style="left:1558.6px;top:536.2px;width:1.1px;height:26px;background:#ececec;"></div>
<div style="left:1559.1px;top:536.2px;width:63.8px;height:26px;line-height:27.9px;text-align:right;padding-right:3.400px;color:#111;">4940</div>
<div style="left:1622.4px;top:536.2px;width:1.1px;height:26px;background:#ececec;"></div>
<div style="left:1622.9px;top:536.2px;width:65.6px;height:26px;line-height:27.9px;padding-left:3.400px;color:#111;">2060</div>
<div style="left:1688px;top:536.2px;width:1.1px;height:26px;background:#ececec;"></div>
<div style="left:1688.5px;top:536.2px;width:67px;height:26px;line-height:27.9px;padding-left:3.400px;color:#111;">5000</div>
<div style="left:1755px;top:536.2px;width:1.1px;height:26px;background:#ececec;"></div>
<div style="left:1756.1px;top:536.2px;width:3.6px;height:26px;line-height:27.9px;color:#111;">5</div>
<div style="left:45.9px;top:562.1px;width:1713.8px;height:26px;background:#e8f0ff;border-bottom:1px dotted #ddd;"></div>
<div style="left:45.9px;top:562.1px;width:48.7px;height:26px;background:#40dcc3;"></div>
<div style="left:94.6px;top:562.1px;width:47.6px;height:26px;background:#b4f8b4;"></div>
<div style="left:432.9px;top:562.1px;width:26.3px;height:26px;background:#3ef3f3;"></div>
<div style="left:45.9px;top:562.1px;width:48.7px;height:26px;line-height:27.9px;text-align:right;padding-right:3.400px;color:#111;">Y</div>
<div style="left:94.6px;top:562.1px;width:47.6px;height:26px;line-height:27.9px;padding-left:3.400px;color:#111;">163</div>
<div style="left:142.2px;top:562.1px;width:112.9px;height:26px;line-height:27.9px;padding-left:3.400px;color:#111;">BFSBA</div>
<div style="left:254.6px;top:562.1px;width:1.1px;height:26px;background:#ececec;"></div>
<div style="left:255.1px;top:562.1px;width:112.9px;height:26px;line-height:27.9px;padding-left:3.400px;color:#111;">公路黑#A-车架Frame</div>
<div style="left:367.5px;top:562.1px;width:1.1px;height:26px;background:#ececec;"></div>
<div style="left:368px;top:562.1px;width:64.9px;height:26px;line-height:27.9px;padding-left:3.400px;color:#111;">BF-S</div>
<div style="left:432.9px;top:562.1px;width:26.3px;height:26px;line-height:27.9px;padding-left:3.400px;color:#111;">E</div>
<div style="left:459.2px;top:562.1px;width:24.4px;height:26px;line-height:27.9px;padding-left:3.400px;color:#ff69b4;">A</div>
<div style="left:483px;top:562.1px;width:1.1px;height:26px;background:#ececec;"></div>
<div style="left:483.6px;top:562.1px;width:26.7px;height:26px;line-height:27.9px;padding-left:3.400px;color:#111;">0</div>
<div style="left:509.7px;top:562.1px;width:1.1px;height:26px;background:#ececec;"></div>
<div style="left:510.2px;top:562.1px;width:46.8px;height:26px;line-height:27.9px;text-align:right;padding-right:3.400px;color:#111;">999</div>
<div style="left:556.4px;top:562.1px;width:1.1px;height:26px;background:#ececec;"></div>
<div style="left:557px;top:562.1px;width:94.9px;height:26px;line-height:27.9px;text-align:center;color:#111;">2027-12-31</div>
<div style="left:651.4px;top:562.1px;width:1.1px;height:26px;background:#ececec;"></div>
<div style="left:651.9px;top:562.1px;width:34.3px;height:26px;line-height:27.9px;text-align:right;padding-right:3.400px;color:#111;">1.0</div>
<div style="left:685.7px;top:562.1px;width:1.1px;height:26px;background:#ececec;"></div>
<div style="left:686.2px;top:562.1px;width:65.2px;height:26px;line-height:27.9px;padding-left:3.400px;color:#111;">1358425996</div>
<div style="left:750.9px;top:562.1px;width:1.1px;height:26px;background:#ececec;"></div>
<div style="left:751.5px;top:562.1px;width:48.5px;height:26px;line-height:27.9px;padding-left:3.400px;color:#111;">A001</div>
<div style="left:799.5px;top:562.1px;width:1.1px;height:26px;background:#ececec;"></div>
<div style="left:800px;top:562.1px;width:24.9px;height:26px;line-height:27.9px;padding-left:3.400px;color:#111;">DM</div>
<div style="left:824.4px;top:562.1px;width:1.1px;height:26px;background:#ececec;"></div>
<div style="left:824.9px;top:562.1px;width:80px;height:26px;line-height:27.9px;padding-left:3.400px;color:#111;">BK_Asm_01</div>
<div style="left:904.4px;top:562.1px;width:1.1px;height:26px;background:#ececec;"></div>
<div style="left:904.9px;top:562.1px;width:33.2px;height:26px;line-height:27.9px;padding-left:3.400px;color:#111;">MTS</div>
<div style="left:937.6px;top:562.1px;width:1.1px;height:26px;background:#ececec;"></div>
<div style="left:938.1px;top:562.1px;width:112px;height:26px;line-height:27.9px;padding-left:3.400px;color:#111;">2025-04-16 15:28:</div>
<div style="left:1049.6px;top:562.1px;width:1.1px;height:26px;background:#ececec;"></div>
<div style="left:1050.1px;top:562.1px;width:64px;height:26px;line-height:27.9px;text-align:right;padding-right:3.400px;color:#111;">-5000</div>
<div style="left:1113.6px;top:562.1px;width:1.1px;height:26px;background:#ececec;"></div>
<div style="left:1114.1px;top:562.1px;width:64px;height:26px;line-height:27.9px;text-align:right;padding-right:3.400px;color:#111;">-989</div>
<div style="left:1177.6px;top:562.1px;width:1.1px;height:26px;background:#ececec;"></div>
<div style="left:1178.1px;top:562.1px;width:66.3px;height:26px;line-height:27.9px;text-align:right;padding-right:3.400px;color:#111;">0</div>
<div style="left:1243.9px;top:562.1px;width:1.1px;height:26px;background:#ececec;"></div>
<div style="left:1244.4px;top:562.1px;width:31.3px;height:26px;line-height:27.9px;text-align:right;padding-right:3.400px;color:#111;">NO</div>
<div style="left:1275.2px;top:562.1px;width:1.1px;height:26px;background:#ececec;"></div>
<div style="left:1275.7px;top:562.1px;width:81.2px;height:26px;line-height:27.9px;padding-left:3.400px;color:#111;">13584260010</div>
<div style="left:1356.4px;top:562.1px;width:1.1px;height:26px;background:#ececec;"></div>
<div style="left:1357px;top:562.1px;width:23.8px;height:26px;line-height:27.9px;padding-left:3.400px;color:#111;">PL</div>
<div style="left:1380.3px;top:562.1px;width:1.1px;height:26px;background:#ececec;"></div>
<div style="left:1380.8px;top:562.1px;width:65.1px;height:26px;line-height:27.9px;text-align:right;padding-right:3.400px;color:#111;">14000</div>
<div style="left:1445.3px;top:562.1px;width:1.1px;height:26px;background:#ececec;"></div>
<div style="left:1445.9px;top:562.1px;width:113.2px;height:26px;line-height:27.9px;padding-left:3.400px;color:#111;">2025-04-09 19:34:</div>
<div style="left:1558.6px;top:562.1px;width:1.1px;height:26px;background:#ececec;"></div>
<div style="left:1559.1px;top:562.1px;width:63.8px;height:26px;line-height:27.9px;text-align:right;padding-right:3.400px;color:#111;">5000</div>
<div style="left:1622.4px;top:562.1px;width:1.1px;height:26px;background:#ececec;"></div>
<div style="left:1622.9px;top:562.1px;width:65.6px;height:26px;line-height:27.9px;padding-left:3.400px;color:#111;">9000</div>
<div style="left:1688px;top:562.1px;width:1.1px;height:26px;background:#ececec;"></div>
<div style="left:1688.5px;top:562.1px;width:67px;height:26px;line-height:27.9px;padding-left:3.400px;color:#111;">5000</div>
<div style="left:1755px;top:562.1px;width:1.1px;height:26px;background:#ececec;"></div>
<div style="left:1756.1px;top:562.1px;width:3.6px;height:26px;line-height:27.9px;color:#111;">5</div>
<div style="left:45.9px;top:588.1px;width:1713.8px;height:26px;background:#ffe48d;border-bottom:1px dotted #ddd;"></div>
<div style="left:45.9px;top:588.1px;width:48.7px;height:26px;background:#40dcc3;"></div>
<div style="left:94.6px;top:588.1px;width:47.6px;height:26px;background:#b4f8b4;"></div>
<div style="left:432.9px;top:588.1px;width:26.3px;height:26px;background:#3ef3f3;"></div>
<div style="left:45.9px;top:588.1px;width:48.7px;height:26px;line-height:27.9px;text-align:right;padding-right:3.400px;color:#111;">Y</div>
<div style="left:94.6px;top:588.1px;width:47.6px;height:26px;line-height:27.9px;padding-left:3.400px;color:#111;">0</div>
<div style="left:142.2px;top:588.1px;width:112.9px;height:26px;line-height:27.9px;padding-left:3.400px;color:#111;">BWS27A</div>
<div style="left:254.6px;top:588.1px;width:1.1px;height:26px;background:#ececec;"></div>
<div style="left:255.1px;top:588.1px;width:112.9px;height:26px;line-height:27.9px;padding-left:3.400px;color:#111;">公路27#A-车轮Wheel</div>
<div style="left:367.5px;top:588.1px;width:1.1px;height:26px;background:#ececec;"></div>
<div style="left:368px;top:588.1px;width:64.9px;height:26px;line-height:27.9px;padding-left:3.400px;color:#111;">BW-S</div>
<div style="left:432.9px;top:588.1px;width:26.3px;height:26px;line-height:27.9px;padding-left:3.400px;color:#111;">E</div>
<div style="left:459.2px;top:588.1px;width:24.4px;height:26px;line-height:27.9px;padding-left:3.400px;color:#ff69b4;">A</div>
<div style="left:483px;top:588.1px;width:1.1px;height:26px;background:#ececec;"></div>
<div style="left:483.6px;top:588.1px;width:26.7px;height:26px;line-height:27.9px;padding-left:3.400px;color:#111;">0</div>
<div style="left:509.7px;top:588.1px;width:1.1px;height:26px;background:#ececec;"></div>
<div style="left:510.2px;top:588.1px;width:46.8px;height:26px;line-height:27.9px;text-align:right;padding-right:3.400px;color:#111;">999</div>
<div style="left:556.4px;top:588.1px;width:1.1px;height:26px;background:#ececec;"></div>
<div style="left:557px;top:588.1px;width:94.9px;height:26px;line-height:27.9px;text-align:center;color:#111;">2027-12-31</div>
<div style="left:651.4px;top:588.1px;width:1.1px;height:26px;background:#ececec;"></div>
<div style="left:651.9px;top:588.1px;width:34.3px;height:26px;line-height:27.9px;text-align:right;padding-right:3.400px;color:#111;">2.0</div>
<div style="left:685.7px;top:588.1px;width:1.1px;height:26px;background:#ececec;"></div>
<div style="left:686.2px;top:588.1px;width:65.2px;height:26px;line-height:27.9px;padding-left:3.400px;color:#111;">1358425996</div>
<div style="left:750.9px;top:588.1px;width:1.1px;height:26px;background:#ececec;"></div>
<div style="left:751.5px;top:588.1px;width:48.5px;height:26px;line-height:27.9px;padding-left:3.400px;color:#111;">A001</div>
<div style="left:799.5px;top:588.1px;width:1.1px;height:26px;background:#ececec;"></div>
<div style="left:800px;top:588.1px;width:24.9px;height:26px;line-height:27.9px;padding-left:3.400px;color:#111;">DM</div>
<div style="left:824.4px;top:588.1px;width:1.1px;height:26px;background:#ececec;"></div>
<div style="left:824.9px;top:588.1px;width:80px;height:26px;line-height:27.9px;padding-left:3.400px;color:#111;">BK_Asm_01</div>
<div style="left:904.4px;top:588.1px;width:1.1px;height:26px;background:#ececec;"></div>
<div style="left:904.9px;top:588.1px;width:33.2px;height:26px;line-height:27.9px;padding-left:3.400px;color:#111;">MTS</div>
<div style="left:937.6px;top:588.1px;width:1.1px;height:26px;background:#ececec;"></div>
<div style="left:938.1px;top:588.1px;width:112px;height:26px;line-height:27.9px;padding-left:3.400px;color:#111;">2025-04-16 15:28:</div>
<div style="left:1049.6px;top:588.1px;width:1.1px;height:26px;background:#ececec;"></div>
<div style="left:1050.1px;top:588.1px;width:64px;height:26px;line-height:27.9px;text-align:right;padding-right:3.400px;color:#111;">-10000</div>
<div style="left:1113.6px;top:588.1px;width:1.1px;height:26px;background:#ececec;"></div>
<div style="left:1114.1px;top:588.1px;width:64px;height:26px;line-height:27.9px;text-align:right;padding-right:3.400px;color:#111;">-989</div>
<div style="left:1177.6px;top:588.1px;width:1.1px;height:26px;background:#ececec;"></div>
<div style="left:1178.1px;top:588.1px;width:66.3px;height:26px;line-height:27.9px;text-align:right;padding-right:3.400px;color:#111;">0</div>
<div style="left:1243.9px;top:588.1px;width:1.1px;height:26px;background:#ececec;"></div>
<div style="left:1244.4px;top:588.1px;width:31.3px;height:26px;line-height:27.9px;text-align:right;padding-right:3.400px;color:#111;">NO</div>
<div style="left:1275.2px;top:588.1px;width:1.1px;height:26px;background:#ececec;"></div>
<div style="left:1275.7px;top:588.1px;width:81.2px;height:26px;line-height:27.9px;padding-left:3.400px;color:#111;">13584260017</div>
<div style="left:1356.4px;top:588.1px;width:1.1px;height:26px;background:#ececec;"></div>
<div style="left:1357px;top:588.1px;width:23.8px;height:26px;line-height:27.9px;padding-left:3.400px;color:#111;">PL</div>
<div style="left:1380.3px;top:588.1px;width:1.1px;height:26px;background:#ececec;"></div>
<div style="left:1380.8px;top:588.1px;width:65.1px;height:26px;line-height:27.9px;text-align:right;padding-right:3.400px;color:#111;">10000</div>
<div style="left:1445.3px;top:588.1px;width:1.1px;height:26px;background:#ececec;"></div>
<div style="left:1445.9px;top:588.1px;width:113.2px;height:26px;line-height:27.9px;padding-left:3.400px;color:#111;">2025-04-16 14:32:</div>
<div style="left:1558.6px;top:588.1px;width:1.1px;height:26px;background:#ececec;"></div>
<div style="left:1559.1px;top:588.1px;width:63.8px;height:26px;line-height:27.9px;text-align:right;padding-right:3.400px;color:#111;">10000</div>
<div style="left:1622.4px;top:588.1px;width:1.1px;height:26px;background:#ececec;"></div>
<div style="left:1622.9px;top:588.1px;width:65.6px;height:26px;line-height:27.9px;padding-left:3.400px;color:#111;">0</div>
<div style="left:1688px;top:588.1px;width:1.1px;height:26px;background:#ececec;"></div>
<div style="left:1688.5px;top:588.1px;width:67px;height:26px;line-height:27.9px;padding-left:3.400px;color:#111;">10000</div>
<div style="left:1755px;top:588.1px;width:1.1px;height:26px;background:#ececec;"></div>
<div style="left:1756.1px;top:588.1px;width:3.6px;height:26px;line-height:27.9px;color:#111;">5</div>
<svg style="position:absolute;left:821.9px;top:329.1px;width:71.1px;height:71.1px;overflow:visible" viewBox="-20 -5 40 40"><g transform="rotate(-27.2)"><path d="M0 0L6.200 10.800L1.700 8.400L0.150 26.9L-0.150 26.9L-1.700 8.400L-6.200 10.800z" fill="#fd1c14"/></g></svg>
<svg style="position:absolute;left:85.9px;top:602.5px;width:71.1px;height:71.1px;overflow:visible" viewBox="-20 -5 40 40"><g transform="rotate(-26.5)"><path d="M0 0L6.200 10.800L1.700 8.400L0.150 27.6L-0.150 27.6L-1.700 8.400L-6.200 10.800z" fill="#fd1c14"/></g></svg>
<svg style="position:absolute;left:999.3px;top:606.2px;width:71.1px;height:71.1px;overflow:visible" viewBox="-20 -5 40 40"><g transform="rotate(1)"><path d="M0 0L6.200 10.800L1.700 8.400L0.150 30L-0.150 30L-1.700 8.400L-6.200 10.800z" fill="#fd1c14"/></g></svg>
<svg style="position:absolute;left:1497.8px;top:609.4px;width:71.1px;height:71.1px;overflow:visible" viewBox="-20 -5 40 40"><g transform="rotate(4)"><path d="M0 0L6.200 10.800L1.700 8.400L0.150 29.1L-0.150 29.1L-1.700 8.400L-6.200 10.800z" fill="#fd1c14"/></g></svg>
</div></body></html>
